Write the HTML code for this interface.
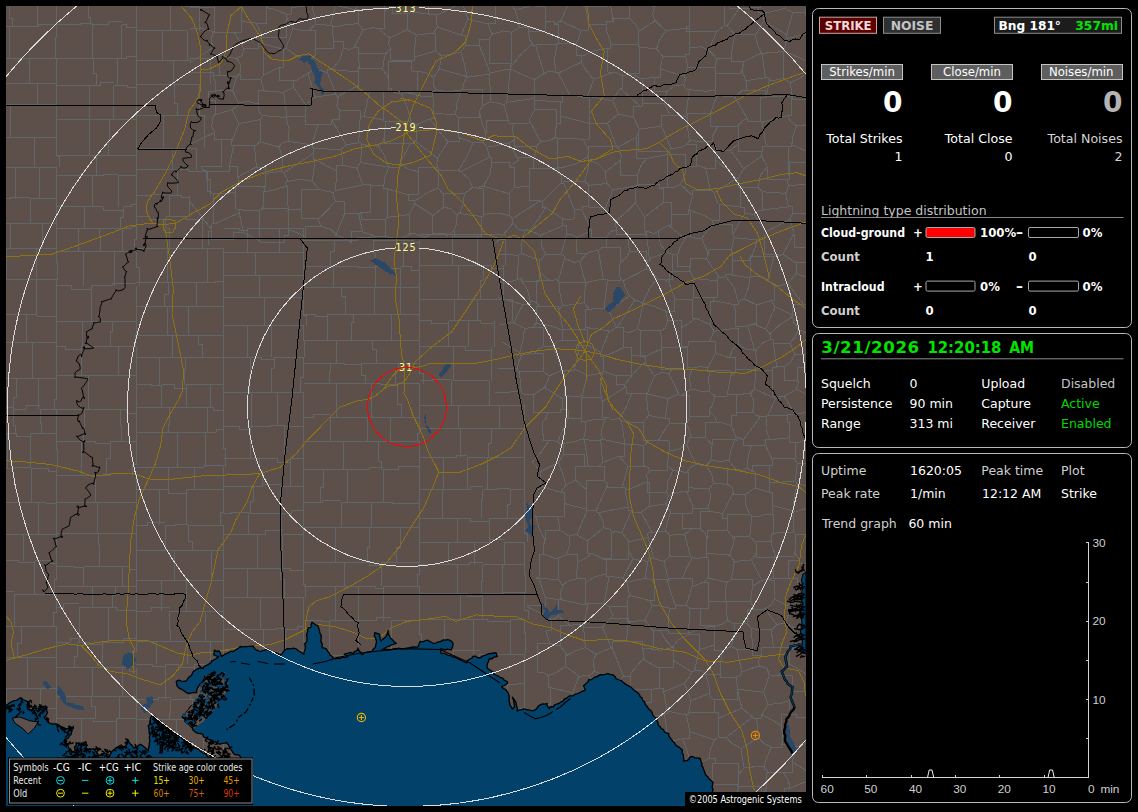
<!DOCTYPE html>
<html><head><meta charset="utf-8"><title>Lightning Detector</title>
<style>
html,body{margin:0;padding:0;background:#000;}
body{width:1138px;height:812px;position:relative;overflow:hidden;font-family:'DejaVu Sans','Liberation Sans',sans-serif;}
svg{display:block}
text{white-space:pre}
</style></head><body>
<svg width="1138" height="812" viewBox="0 0 1138 812" style="position:absolute;left:0;top:0">
<defs><clipPath id="mc"><rect x="6" y="6" width="800" height="800"/></clipPath></defs>
<rect x="6" y="6" width="800" height="800" fill="#5d504a"/>
<g clip-path="url(#mc)" fill="none" stroke-linejoin="round">
<path d="M-24.0 -23.4 H11.9 M11.9 -23.4 V4.0 M11.9 -23.4 H32.2 M32.2 -23.4 V4.0 M32.2 -23.4 H56.8 M56.8 -23.4 V-5.8 H60.0 V4.0 M-24.0 4.0 H-9.5 V0.9 H9.9 M9.9 4.0 V18.2 H12.0 V26.6 M9.9 4.0 H19.1 V0.9 H37.5 M37.5 4.0 V26.6 M37.5 4.0 H46.4 V3.8 H56.8 M56.8 4.0 V26.6 M-24.0 26.6 H9.2 M9.2 26.6 V58.1 M9.2 26.6 H38.7 V24.6 H56.8 M56.8 26.6 V37.0 H55.7 V58.1 M-24.0 58.1 H-9.7 V60.4 H-2.5 M-2.5 58.1 V83.2 M-2.5 58.1 H29.9 M29.9 58.1 V83.2 M29.9 58.1 H56.8 M56.8 58.1 V83.2 M-24.0 83.2 H-3.5 M-3.5 83.2 V95.7 H-1.9 V104.2 M-3.5 83.2 H37.0 M37.0 83.2 V104.2 M37.0 83.2 H56.8 M56.8 83.2 V104.2 M-24.0 104.2 H10.1 M10.1 104.2 V137.2 M10.1 104.2 H56.8 M56.8 104.2 V137.2 M-24.0 137.2 H4.0 M4.0 137.2 V155.2 H0.2 V167.0 M4.0 137.2 H34.0 M34.0 137.2 V167.0 M34.0 137.2 H56.8 M56.8 137.2 V156.1 H59.2 V167.0 M-24.0 167.0 H15.3 M15.3 167.0 V198.7 M15.3 167.0 H39.5 M39.5 167.0 V198.7 M39.5 167.0 H49.3 V167.5 H56.8 M56.8 167.0 V198.7 M-24.0 198.7 H0.8 M0.8 198.7 V223.8 M0.8 198.7 H10.7 V197.2 H30.4 M30.4 198.7 V223.8 M30.4 198.7 H56.8 M56.8 198.7 V223.8 M-24.0 223.8 H10.4 M10.4 223.8 V248.1 M10.4 223.8 H42.2 M42.2 223.8 V248.1 M42.2 223.8 H56.8 M56.8 223.8 V248.1 M-24.0 248.1 H6.9 M6.9 248.1 V279.7 M6.9 248.1 H36.7 M36.7 248.1 V279.7 M36.7 248.1 H56.8 M56.8 248.1 V262.3 H57.3 V279.7 M-24.0 279.7 H2.9 M2.9 279.7 V303.4 H2.3 V314.3 M2.9 279.7 H36.0 M36.0 279.7 V314.3 M36.0 279.7 H56.8 M56.8 279.7 V314.3 M-24.0 314.3 H-8.3 V317.8 H-1.0 M-1.0 314.3 V342.4 M-1.0 314.3 H15.6 V314.8 H26.9 M26.9 314.3 V342.4 M26.9 314.3 H36.5 V316.0 H56.8 M56.8 314.3 V342.4 M-24.0 342.4 H-8.6 V346.2 H1.5 M1.5 342.4 V378.2 M1.5 342.4 H32.0 M32.0 342.4 V378.2 M32.0 342.4 H56.8 M56.8 342.4 V378.2 M-24.0 378.2 H16.9 M16.9 378.2 V397.8 H13.3 V409.1 M16.9 378.2 H38.6 M38.6 378.2 V409.1 M38.6 378.2 H56.8 M56.8 378.2 V399.4 H54.2 V409.1 M-24.0 409.1 H-2.7 V407.5 H13.4 M13.4 409.1 V425.2 H15.4 V433.8 M13.4 409.1 H26.1 V405.4 H40.4 M40.4 409.1 V423.3 H41.0 V433.8 M40.4 409.1 H56.8 M56.8 409.1 V433.8 M-24.0 433.8 H7.7 M7.7 433.8 V468.2 M7.7 433.8 H16.7 V436.1 H30.8 M30.8 433.8 V468.2 M30.8 433.8 H56.8 M56.8 433.8 V449.4 H57.8 V468.2 M-24.0 468.2 H-11.6 V468.1 H0.9 M0.9 468.2 V487.8 H-0.1 V502.8 M0.9 468.2 H15.1 V467.6 H31.3 M31.3 468.2 V502.8 M31.3 468.2 H48.0 V471.8 H56.8 M56.8 468.2 V502.8 M-24.0 502.8 H5.5 M5.5 502.8 V534.9 M5.5 502.8 H38.6 M38.6 502.8 V534.9 M38.6 502.8 H46.1 V503.9 H56.8 M56.8 502.8 V534.9 M-24.0 534.9 H3.1 M3.1 534.9 V560.6 M3.1 534.9 H23.5 M23.5 534.9 V560.6 M23.5 534.9 H56.8 M56.8 534.9 V560.6 M-24.0 560.6 H-8.7 V560.5 H-0.2 M-0.2 560.6 V577.7 H-1.5 V594.0 M-0.2 560.6 H18.1 V562.6 H34.7 M34.7 560.6 V594.0 M34.7 560.6 H50.1 V563.7 H56.8 M56.8 560.6 V579.5 H54.5 V594.0 M-24.0 594.0 H-11.5 V591.7 H14.1 M14.1 594.0 V626.2 M14.1 594.0 H56.8 M56.8 594.0 V612.1 H53.5 V626.2 M-24.0 626.2 H-11.3 V622.5 H-1.3 M-1.3 626.2 V643.6 H-3.3 V657.0 M-1.3 626.2 H21.4 M21.4 626.2 V643.7 H17.9 V657.0 M21.4 626.2 H56.8 M56.8 626.2 V657.0 M-24.0 657.0 H-9.3 V660.2 H-2.3 M-2.3 657.0 V675.9 H-6.3 V688.2 M-2.3 657.0 H27.6 M27.6 657.0 V688.2 M27.6 657.0 H56.8 M56.8 657.0 V688.2 M-24.0 688.2 H6.3 M6.3 688.2 V708.5 M6.3 688.2 H40.7 M40.7 688.2 V708.5 M40.7 688.2 H56.8 M56.8 688.2 V708.5 M-24.0 708.5 H-11.1 V706.6 H3.1 M3.1 708.5 V730.3 H4.1 V741.6 M3.1 708.5 H30.6 M30.6 708.5 V741.6 M30.6 708.5 H56.8 M56.8 708.5 V741.6 M-24.0 741.6 H12.6 M12.6 741.6 V769.7 M12.6 741.6 H25.3 V742.4 H37.5 M37.5 741.6 V769.7 M37.5 741.6 H56.8 M56.8 741.6 V753.6 H60.6 V769.7 M-24.0 769.7 H16.7 M16.7 769.7 V794.2 M16.7 769.7 H38.6 V772.5 H56.8 M56.8 769.7 V778.1 H57.6 V794.2 M-24.0 794.2 H-9.8 V791.9 H10.1 M10.1 794.2 V826.9 M10.1 794.2 H19.1 V794.6 H35.2 M35.2 794.2 V826.9 M35.2 794.2 H56.8 M56.8 794.2 V826.9 M56.8 2.7 H88.9 M88.9 2.7 V17.8 H90.4 V24.6 M88.9 2.7 H121.0 V3.8 H136.3 M136.3 2.7 V24.6 M56.8 24.6 H80.1 V23.4 H92.2 M92.2 24.6 V58.6 M92.2 24.6 H108.9 V21.9 H121.7 M121.7 24.6 V58.6 M121.7 24.6 H126.6 V27.6 H136.3 M136.3 24.6 V58.6 M56.8 58.6 H93.1 M93.1 58.6 V73.8 H96.7 V85.9 M93.1 58.6 H117.8 M117.8 58.6 V73.3 H117.0 V85.9 M117.8 58.6 H126.7 V56.1 H136.3 M136.3 58.6 V85.9 M56.8 85.9 H89.5 M89.5 85.9 V119.6 M89.5 85.9 H100.3 V82.1 H113.6 M113.6 85.9 V119.6 M113.6 85.9 H127.2 V87.5 H136.3 M136.3 85.9 V119.6 M56.8 119.6 H89.6 M89.6 119.6 V155.0 M89.6 119.6 H98.6 V119.5 H109.7 M109.7 119.6 V139.3 H108.5 V155.0 M109.7 119.6 H136.3 M136.3 119.6 V155.0 M56.8 155.0 H96.3 M96.3 155.0 V175.9 M96.3 155.0 H136.3 M136.3 155.0 V175.9 M56.8 175.9 H92.3 M92.3 175.9 V206.6 M92.3 175.9 H103.9 V174.1 H118.4 M118.4 175.9 V196.6 H118.1 V206.6 M118.4 175.9 H136.3 M136.3 175.9 V206.6 M56.8 206.6 H84.6 M84.6 206.6 V228.7 M84.6 206.6 H103.0 V210.2 H123.5 M123.5 206.6 V217.1 H120.8 V228.7 M123.5 206.6 H131.4 V204.3 H136.3 M136.3 206.6 V228.7 M56.8 228.7 H78.1 M78.1 228.7 V251.9 M78.1 228.7 H99.1 M99.1 228.7 V236.7 H100.0 V251.9 M99.1 228.7 H122.0 M122.0 228.7 V251.9 M122.0 228.7 H131.0 V226.3 H136.3 M136.3 228.7 V239.6 H134.5 V251.9 M56.8 251.9 H83.0 M83.0 251.9 V285.6 M83.0 251.9 H114.0 M114.0 251.9 V285.6 M114.0 251.9 H136.3 M136.3 251.9 V267.7 H139.2 V285.6 M56.8 285.6 H71.3 V289.0 H91.4 M91.4 285.6 V321.5 M91.4 285.6 H112.5 V283.0 H136.3 M136.3 285.6 V321.5 M56.8 321.5 H82.8 M82.8 321.5 V346.6 M82.8 321.5 H112.8 M112.8 321.5 V331.6 H110.4 V346.6 M112.8 321.5 H136.3 M136.3 321.5 V334.9 H135.5 V346.6 M56.8 346.6 H65.4 V349.0 H81.2 M81.2 346.6 V375.4 M81.2 346.6 H118.0 M118.0 346.6 V375.4 M118.0 346.6 H136.3 M136.3 346.6 V375.4 M56.8 375.4 H88.3 M88.3 375.4 V409.6 M88.3 375.4 H110.0 V375.8 H136.3 M136.3 375.4 V409.6 M56.8 409.6 H84.2 M84.2 409.6 V430.6 H83.8 V441.7 M84.2 409.6 H120.5 M120.5 409.6 V425.3 H121.3 V441.7 M120.5 409.6 H126.7 V413.0 H136.3 M136.3 409.6 V441.7 M56.8 441.7 H81.0 M81.0 441.7 V475.5 M81.0 441.7 H95.3 V443.8 H110.0 M110.0 441.7 V458.9 H106.4 V475.5 M110.0 441.7 H136.3 M136.3 441.7 V464.1 H132.4 V475.5 M56.8 475.5 H95.6 M95.6 475.5 V502.2 M95.6 475.5 H110.8 V473.8 H136.3 M136.3 475.5 V502.2 M56.8 502.2 H97.2 M97.2 502.2 V533.3 M97.2 502.2 H136.3 M136.3 502.2 V533.3 M56.8 533.3 H98.3 M98.3 533.3 V544.0 H99.6 V566.5 M98.3 533.3 H136.3 M136.3 533.3 V566.5 M56.8 566.5 H74.4 V567.8 H83.9 M83.9 566.5 V586.8 M83.9 566.5 H122.5 M122.5 566.5 V586.8 M122.5 566.5 H129.9 V569.6 H136.3 M136.3 566.5 V575.9 H136.6 V586.8 M56.8 586.8 H92.1 M92.1 586.8 V607.4 M92.1 586.8 H115.4 M115.4 586.8 V595.4 H112.8 V607.4 M115.4 586.8 H136.3 M136.3 586.8 V607.4 M56.8 607.4 H63.6 V603.8 H79.2 M79.2 607.4 V642.3 M79.2 607.4 H108.2 M108.2 607.4 V642.3 M108.2 607.4 H116.9 V610.0 H136.3 M136.3 607.4 V642.3 M56.8 642.3 H70.0 V638.9 H77.6 M77.6 642.3 V656.2 H74.0 V667.8 M77.6 642.3 H89.1 V644.6 H102.2 M102.2 642.3 V667.8 M102.2 642.3 H123.8 V638.8 H136.3 M136.3 642.3 V651.5 H132.9 V667.8 M56.8 667.8 H92.0 M92.0 667.8 V696.2 M92.0 667.8 H122.9 M122.9 667.8 V696.2 M122.9 667.8 H129.3 V671.8 H136.3 M136.3 667.8 V696.2 M56.8 696.2 H91.7 M91.7 696.2 V706.6 H95.2 V718.9 M91.7 696.2 H119.3 M119.3 696.2 V718.9 M119.3 696.2 H136.3 M136.3 696.2 V708.7 H136.2 V718.9 M56.8 718.9 H81.3 M81.3 718.9 V752.3 M81.3 718.9 H93.4 V721.9 H116.4 M116.4 718.9 V752.3 M116.4 718.9 H136.3 M136.3 718.9 V752.3 M56.8 752.3 H85.4 M85.4 752.3 V777.9 M85.4 752.3 H115.6 M115.6 752.3 V777.9 M115.6 752.3 H136.3 M136.3 752.3 V777.9 M56.8 777.9 H95.2 M95.2 777.9 V803.6 M95.2 777.9 H136.3 M136.3 777.9 V803.6 M56.8 803.6 H78.8 V802.7 H92.1 M92.1 803.6 V819.7 H90.8 V832.9 M92.1 803.6 H109.1 V801.0 H122.0 M122.0 803.6 V832.9 M122.0 803.6 H136.3 M136.3 803.6 V832.9 M136.3 2.5 H159.5 V1.8 H170.4 M170.4 2.5 V30.9 M170.4 2.5 H185.0 V6.2 H199.6 M199.6 2.5 V30.9 M136.3 30.9 H154.1 V30.8 H162.5 M162.5 30.9 V60.4 M162.5 30.9 H187.2 M187.2 30.9 V60.4 M136.3 60.4 H173.4 M173.4 60.4 V84.4 M173.4 60.4 H190.1 V58.1 H210.0 M210.0 60.4 V84.4 M136.3 84.4 H174.4 M174.4 84.4 V103.0 H177.5 V115.1 M174.4 84.4 H199.1 M199.1 84.4 V115.1 M136.3 115.1 H163.8 M163.8 115.1 V148.0 M163.8 115.1 H204.3 M204.3 115.1 V148.0 M136.3 148.0 H149.5 V148.2 H172.3 M172.3 148.0 V169.8 M172.3 148.0 H196.9 M196.9 148.0 V169.8 M136.3 169.8 H177.5 M177.5 169.8 V195.5 M177.5 169.8 H188.3 V171.1 H206.6 M206.6 169.8 V179.7 H210.3 V195.5 M136.3 195.5 H150.6 V194.4 H169.4 M169.4 195.5 V216.8 M169.4 195.5 H181.5 V197.6 H189.4 M189.4 195.5 V216.8 M136.3 216.8 H149.8 V219.3 H165.8 M165.8 216.8 V228.1 H169.5 V248.9 M165.8 216.8 H186.1 V219.7 H202.7 M202.7 216.8 V248.9 M136.3 248.9 H167.2 M167.2 248.9 V282.4 M167.2 248.9 H207.6 M207.6 248.9 V282.4 M207.6 248.9 H223.9 M223.9 248.9 V282.4 M136.3 282.4 H168.2 M168.2 282.4 V294.4 H164.6 V306.7 M168.2 282.4 H196.6 M196.6 282.4 V306.7 M196.6 282.4 H215.5 V281.7 H223.9 M223.9 282.4 V306.7 M136.3 306.7 H167.7 M167.7 306.7 V335.2 M167.7 306.7 H188.9 M188.9 306.7 V335.2 M188.9 306.7 H206.5 V306.9 H223.9 M223.9 306.7 V335.2 M136.3 335.2 H172.2 M172.2 335.2 V357.2 M172.2 335.2 H198.6 M198.6 335.2 V344.0 H202.1 V357.2 M198.6 335.2 H223.9 M223.9 335.2 V357.2 M136.3 357.2 H159.3 M159.3 357.2 V384.5 M159.3 357.2 H185.5 M185.5 357.2 V369.1 H184.4 V384.5 M185.5 357.2 H223.9 M223.9 357.2 V384.5 M136.3 384.5 H151.3 V385.9 H161.5 M161.5 384.5 V407.2 M161.5 384.5 H174.7 V388.4 H186.2 M186.2 384.5 V407.2 M186.2 384.5 H210.7 M210.7 384.5 V395.3 H210.6 V407.2 M210.7 384.5 H223.9 M223.9 384.5 V407.2 M136.3 407.2 H169.6 M169.6 407.2 V424.4 H168.9 V432.1 M169.6 407.2 H207.8 M207.8 407.2 V432.1 M207.8 407.2 H213.4 V410.1 H223.9 M223.9 407.2 V432.1 M136.3 432.1 H177.2 M177.2 432.1 V467.0 M177.2 432.1 H205.7 M205.7 432.1 V467.0 M205.7 432.1 H216.1 V429.1 H223.9 M223.9 432.1 V448.7 H225.5 V467.0 M136.3 467.0 H168.6 M168.6 467.0 V489.1 M168.6 467.0 H194.1 M194.1 467.0 V489.1 M194.1 467.0 H204.1 V465.7 H223.9 M223.9 467.0 V489.1 M136.3 489.1 H159.0 M159.0 489.1 V525.0 M159.0 489.1 H168.4 V493.0 H186.2 M186.2 489.1 V525.0 M186.2 489.1 H223.9 M223.9 489.1 V512.6 H220.2 V525.0 M136.3 525.0 H147.6 V522.8 H165.3 M165.3 525.0 V550.2 M165.3 525.0 H175.9 V524.2 H188.2 M188.2 525.0 V541.1 H192.2 V550.2 M188.2 525.0 H223.9 M223.9 525.0 V550.2 M136.3 550.2 H174.8 M174.8 550.2 V580.9 M174.8 550.2 H211.9 M211.9 550.2 V580.9 M211.9 550.2 H215.9 V550.3 H223.9 M223.9 550.2 V580.9 M136.3 580.9 H161.0 M161.0 580.9 V611.1 M161.0 580.9 H186.2 M186.2 580.9 V611.1 M186.2 580.9 H223.9 M223.9 580.9 V611.1 M136.3 611.1 H151.0 V607.3 H169.1 M169.1 611.1 V630.6 H170.4 V641.4 M169.1 611.1 H205.4 M205.4 611.1 V641.4 M205.4 611.1 H223.9 M223.9 611.1 V641.4 M136.3 641.4 H156.7 M156.7 641.4 V664.3 M156.7 641.4 H187.9 M187.9 641.4 V664.3 M187.9 641.4 H210.1 M210.1 641.4 V664.3 M210.1 641.4 H223.9 M223.9 641.4 V664.3 M136.3 664.3 H152.1 V666.1 H165.4 M165.4 664.3 V699.5 M165.4 664.3 H178.3 V667.7 H194.0 M194.0 664.3 V683.2 H190.8 V699.5 M194.0 664.3 H223.9 M223.9 664.3 V699.5 M136.3 699.5 H158.2 V697.8 H170.5 M170.5 699.5 V713.2 H169.8 V719.6 M170.5 699.5 H192.4 M192.4 699.5 V708.2 H190.2 V719.6 M192.4 699.5 H223.9 M223.9 699.5 V719.6 M136.3 719.6 H176.4 M176.4 719.6 V731.3 H177.4 V754.3 M176.4 719.6 H190.8 V723.2 H203.9 M203.9 719.6 V754.3 M203.9 719.6 H223.9 M223.9 719.6 V754.3 M136.3 754.3 H167.3 M167.3 754.3 V770.1 H168.1 V788.0 M167.3 754.3 H193.9 M193.9 754.3 V788.0 M193.9 754.3 H223.9 M223.9 754.3 V788.0 M136.3 788.0 H143.9 V790.9 H157.9 M157.9 788.0 V796.6 H156.8 V814.3 M157.9 788.0 H166.6 V787.4 H182.4 M182.4 788.0 V814.3 M182.4 788.0 H223.9 M223.9 788.0 V800.7 H221.9 V814.3 M136.3 814.3 H148.5 V814.3 H163.4 M163.4 814.3 V840.7 M163.4 814.3 H189.0 V811.8 H200.9 M200.9 814.3 V840.7 M200.9 814.3 H216.8 V810.9 H223.9 M223.9 814.3 V840.7 M223.9 228.1 H239.1 V230.4 H247.5 M247.5 228.1 V252.8 M247.5 228.1 H279.7 M279.7 228.1 V252.8 M279.7 228.1 H303.9 M303.9 228.1 V252.8 M223.9 252.8 H234.7 V252.5 H255.5 M255.5 252.8 V275.0 M255.5 252.8 H303.9 M303.9 252.8 V275.0 M223.9 275.0 H259.2 M259.2 275.0 V297.0 M259.2 275.0 H303.9 M303.9 275.0 V297.0 M223.9 297.0 H264.1 M264.1 297.0 V325.7 M264.1 297.0 H303.9 M303.9 297.0 V315.3 H306.0 V325.7 M223.9 325.7 H247.5 M247.5 325.7 V357.2 M247.5 325.7 H271.4 M271.4 325.7 V357.2 M271.4 325.7 H303.9 M303.9 325.7 V340.5 H304.7 V357.2 M223.9 357.2 H250.3 M250.3 357.2 V376.7 H249.8 V392.4 M250.3 357.2 H261.5 V359.1 H274.2 M274.2 357.2 V368.0 H271.4 V392.4 M274.2 357.2 H303.9 M303.9 357.2 V377.9 H300.6 V392.4 M223.9 392.4 H251.2 M251.2 392.4 V426.3 M251.2 392.4 H277.3 M277.3 392.4 V426.3 M277.3 392.4 H303.9 M303.9 392.4 V426.3 M223.9 426.3 H239.6 V429.5 H250.1 M250.1 426.3 V458.8 M250.1 426.3 H270.3 V425.1 H284.7 M284.7 426.3 V458.8 M284.7 426.3 H303.9 M303.9 426.3 V458.8 M223.9 458.8 H259.1 M259.1 458.8 V470.5 H262.6 V486.4 M259.1 458.8 H277.2 V462.5 H290.5 M290.5 458.8 V486.4 M290.5 458.8 H303.9 M303.9 458.8 V486.4 M223.9 486.4 H253.5 M253.5 486.4 V501.7 H250.7 V513.5 M253.5 486.4 H262.6 V484.1 H280.7 M280.7 486.4 V513.5 M280.7 486.4 H303.9 M303.9 486.4 V513.5 M223.9 513.5 H231.7 V512.7 H248.8 M248.8 513.5 V534.4 M248.8 513.5 H281.2 M281.2 513.5 V534.4 M281.2 513.5 H291.4 V510.5 H303.9 M303.9 513.5 V534.4 M223.9 534.4 H257.5 M257.5 534.4 V568.5 M257.5 534.4 H265.4 V530.6 H282.9 M282.9 534.4 V568.5 M282.9 534.4 H303.9 M303.9 534.4 V568.5 M223.9 568.5 H247.0 M247.0 568.5 V597.8 M247.0 568.5 H280.6 M280.6 568.5 V579.4 H284.1 V597.8 M280.6 568.5 H290.5 V570.9 H303.9 M303.9 568.5 V584.6 H305.9 V597.8 M223.9 597.8 H260.5 M260.5 597.8 V629.7 M260.5 597.8 H303.9 M303.9 597.8 V629.7 M223.9 629.7 H263.4 M263.4 629.7 V650.3 M263.4 629.7 H275.4 V628.5 H285.0 M285.0 629.7 V650.3 M285.0 629.7 H297.2 V626.1 H303.9 M303.9 629.7 V641.7 H306.4 V650.3 M223.9 650.3 H239.1 V647.9 H248.8 M248.8 650.3 V675.8 M248.8 650.3 H267.6 V652.6 H283.2 M283.2 650.3 V675.8 M283.2 650.3 H303.9 M303.9 650.3 V658.8 H301.4 V675.8 M223.9 675.8 H239.4 V679.1 H255.1 M255.1 675.8 V687.1 H251.7 V709.8 M255.1 675.8 H287.4 M287.4 675.8 V709.8 M287.4 675.8 H303.9 M303.9 675.8 V709.8 M223.9 709.8 H261.8 M261.8 709.8 V741.8 M261.8 709.8 H303.9 M303.9 709.8 V741.8 M223.9 741.8 H242.5 V738.8 H253.7 M253.7 741.8 V765.2 M253.7 741.8 H287.6 M287.6 741.8 V765.2 M287.6 741.8 H298.2 V742.0 H303.9 M303.9 741.8 V765.2 M223.9 765.2 H252.9 M252.9 765.2 V786.8 H252.4 V800.6 M252.9 765.2 H261.7 V763.9 H276.5 M276.5 765.2 V781.3 H273.2 V800.6 M276.5 765.2 H303.9 M303.9 765.2 V779.5 H300.1 V800.6 M223.9 800.6 H247.1 V797.1 H262.8 M262.8 800.6 V816.3 H266.1 V834.6 M262.8 800.6 H290.2 V803.1 H303.9 M303.9 800.6 V834.6 M303.9 240.0 H334.6 M334.6 240.0 V251.5 H330.8 V266.6 M334.6 240.0 H357.7 V237.3 H373.9 M373.9 240.0 V253.0 H375.5 V266.6 M373.9 240.0 H403.5 M403.5 240.0 V266.6 M403.5 240.0 H413.7 V242.5 H419.9 M419.9 240.0 V266.6 M303.9 266.6 H333.6 M333.6 266.6 V287.4 M333.6 266.6 H358.5 V267.7 H375.0 M375.0 266.6 V287.4 M375.0 266.6 H386.1 V268.6 H400.7 M400.7 266.6 V287.4 M400.7 266.6 H411.6 V270.3 H419.9 M419.9 266.6 V287.4 M303.9 287.4 H341.4 M341.4 287.4 V296.7 H345.1 V314.4 M341.4 287.4 H374.1 M374.1 287.4 V314.4 M374.1 287.4 H400.8 M400.8 287.4 V314.4 M400.8 287.4 H419.9 M419.9 287.4 V314.4 M303.9 314.4 H315.2 V316.2 H327.2 M327.2 314.4 V340.2 M327.2 314.4 H353.4 M353.4 314.4 V322.9 H351.6 V340.2 M353.4 314.4 H391.9 M391.9 314.4 V340.2 M391.9 314.4 H419.9 M419.9 314.4 V340.2 M303.9 340.2 H336.3 M336.3 340.2 V363.0 M336.3 340.2 H372.6 M372.6 340.2 V349.9 H376.2 V363.0 M372.6 340.2 H419.9 M419.9 340.2 V363.0 M303.9 363.0 H330.2 M330.2 363.0 V371.9 H329.4 V383.7 M330.2 363.0 H344.2 V364.7 H361.7 M361.7 363.0 V375.6 H365.5 V383.7 M361.7 363.0 H398.1 M398.1 363.0 V369.6 H395.3 V383.7 M398.1 363.0 H419.9 M419.9 363.0 V373.2 H423.6 V383.7 M303.9 383.7 H336.6 M336.6 383.7 V417.1 M336.6 383.7 H371.2 M371.2 383.7 V417.1 M371.2 383.7 H380.7 V384.3 H397.1 M397.1 383.7 V404.0 H401.1 V417.1 M397.1 383.7 H419.9 M419.9 383.7 V417.1 M303.9 417.1 H313.7 V414.8 H330.3 M330.3 417.1 V441.6 M330.3 417.1 H367.1 M367.1 417.1 V441.6 M367.1 417.1 H390.9 M390.9 417.1 V441.6 M390.9 417.1 H419.9 M419.9 417.1 V433.9 H417.1 V441.6 M303.9 441.6 H343.4 M343.4 441.6 V469.5 M343.4 441.6 H378.9 M378.9 441.6 V461.1 H381.1 V469.5 M378.9 441.6 H419.9 M419.9 441.6 V469.5 M303.9 469.5 H323.9 M323.9 469.5 V487.7 H320.5 V502.3 M323.9 469.5 H347.0 M347.0 469.5 V502.3 M347.0 469.5 H369.2 V467.7 H383.0 M383.0 469.5 V502.3 M383.0 469.5 H398.9 V466.8 H419.9 M419.9 469.5 V502.3 M303.9 502.3 H322.7 V500.4 H341.1 M341.1 502.3 V527.1 M341.1 502.3 H359.8 V502.0 H371.0 M371.0 502.3 V527.1 M371.0 502.3 H392.9 V503.4 H419.9 M419.9 502.3 V527.1 M303.9 527.1 H335.1 M335.1 527.1 V562.3 M335.1 527.1 H369.0 M369.0 527.1 V547.7 H367.0 V562.3 M369.0 527.1 H400.5 M400.5 527.1 V547.1 H396.9 V562.3 M400.5 527.1 H419.9 M419.9 527.1 V562.3 M303.9 562.3 H344.4 M344.4 562.3 V586.2 M344.4 562.3 H369.7 V565.2 H381.6 M381.6 562.3 V586.2 M381.6 562.3 H419.9 M419.9 562.3 V574.7 H417.2 V586.2 M303.9 586.2 H335.4 M335.4 586.2 V620.5 M335.4 586.2 H358.0 M358.0 586.2 V620.5 M358.0 586.2 H375.8 V588.7 H383.9 M383.9 586.2 V620.5 M383.9 586.2 H419.9 M419.9 586.2 V620.5 M303.9 620.5 H321.1 V621.2 H329.9 M329.9 620.5 V655.8 M329.9 620.5 H358.6 M358.6 620.5 V655.8 M358.6 620.5 H376.2 V617.6 H391.4 M391.4 620.5 V655.8 M391.4 620.5 H419.9 M419.9 620.5 V634.4 H421.6 V655.8 M303.9 655.8 H333.9 M333.9 655.8 V676.4 M333.9 655.8 H362.9 M362.9 655.8 V676.4 M362.9 655.8 H394.5 M394.5 655.8 V676.4 M394.5 655.8 H405.8 V658.0 H419.9 M419.9 655.8 V676.4 M303.9 676.4 H331.0 V673.1 H343.9 M343.9 676.4 V706.0 M343.9 676.4 H381.4 M381.4 676.4 V689.4 H383.5 V706.0 M381.4 676.4 H419.9 M419.9 676.4 V706.0 M303.9 706.0 H315.4 V707.8 H337.0 M337.0 706.0 V738.3 M337.0 706.0 H378.6 M378.6 706.0 V738.3 M378.6 706.0 H407.1 M407.1 706.0 V719.2 H410.3 V738.3 M407.1 706.0 H414.7 V705.1 H419.9 M419.9 706.0 V738.3 M303.9 738.3 H318.4 V739.0 H328.9 M328.9 738.3 V764.8 M328.9 738.3 H362.0 M362.0 738.3 V764.8 M362.0 738.3 H401.2 M401.2 738.3 V764.8 M401.2 738.3 H419.9 M419.9 738.3 V754.4 H422.3 V764.8 M303.9 764.8 H317.7 V763.1 H327.4 M327.4 764.8 V791.7 M327.4 764.8 H359.2 M359.2 764.8 V791.7 M359.2 764.8 H376.7 V761.3 H391.7 M391.7 764.8 V779.1 H392.3 V791.7 M391.7 764.8 H419.9 M419.9 764.8 V791.7 M303.9 791.7 H345.4 M345.4 791.7 V817.0 M345.4 791.7 H376.8 M376.8 791.7 V800.3 H375.8 V817.0 M376.8 791.7 H419.9 M419.9 791.7 V817.0 M303.9 817.0 H332.7 M332.7 817.0 V846.4 M332.7 817.0 H341.6 V813.5 H357.7 M357.7 817.0 V846.4 M357.7 817.0 H370.1 V816.1 H387.4 M387.4 817.0 V835.3 H384.1 V846.4 M387.4 817.0 H419.9 M419.9 817.0 V836.9 H418.7 V846.4 M419.9 234.5 H452.3 M452.3 234.5 V265.4 M452.3 234.5 H477.2 M477.2 234.5 V265.4 M477.2 234.5 H505.0 M505.0 234.5 V265.4 M419.9 265.4 H458.6 M458.6 265.4 V299.1 M458.6 265.4 H483.0 M483.0 265.4 V280.1 H480.8 V299.1 M483.0 265.4 H491.3 V268.9 H503.1 M503.1 265.4 V299.1 M419.9 299.1 H454.9 M454.9 299.1 V320.7 M454.9 299.1 H477.2 M477.2 299.1 V320.7 M477.2 299.1 H512.4 M512.4 299.1 V320.7 M419.9 320.7 H431.9 V323.9 H448.7 M448.7 320.7 V346.9 M448.7 320.7 H468.9 M468.9 320.7 V346.9 M468.9 320.7 H480.8 V323.0 H494.0 M494.0 320.7 V346.9 M419.9 346.9 H453.7 M453.7 346.9 V380.8 M453.7 346.9 H465.9 V350.5 H491.0 M491.0 346.9 V380.8 M419.9 380.8 H432.5 V379.6 H451.2 M451.2 380.8 V405.6 M451.2 380.8 H489.4 M489.4 380.8 V405.6 M419.9 405.6 H458.5 M458.5 405.6 V428.1 M458.5 405.6 H499.9 M499.9 405.6 V428.1 M499.9 405.6 H524.5 M524.5 405.6 V428.1 M419.9 428.1 H460.6 M460.6 428.1 V457.2 M460.6 428.1 H491.1 M491.1 428.1 V443.6 H488.3 V457.2 M491.1 428.1 H524.5 M524.5 428.1 V457.2 M419.9 457.2 H443.1 M443.1 457.2 V489.9 M443.1 457.2 H456.6 V455.9 H467.0 M467.0 457.2 V489.9 M467.0 457.2 H487.1 M487.1 457.2 V489.9 M487.1 457.2 H524.5 M524.5 457.2 V489.9 M419.9 489.9 H442.1 M442.1 489.9 V518.2 M442.1 489.9 H470.0 V486.7 H482.8 M482.8 489.9 V499.3 H481.5 V518.2 M482.8 489.9 H497.2 V488.5 H510.1 M510.1 489.9 V504.5 H507.1 V518.2 M510.1 489.9 H524.5 M524.5 489.9 V518.2 M419.9 518.2 H457.8 M457.8 518.2 V542.0 M457.8 518.2 H470.6 V521.5 H489.6 M489.6 518.2 V542.0 M489.6 518.2 H524.5 M524.5 518.2 V533.1 H527.7 V542.0 M419.9 542.0 H448.9 M448.9 542.0 V564.8 M448.9 542.0 H474.6 M474.6 542.0 V564.8 M474.6 542.0 H489.1 V539.1 H504.5 M504.5 542.0 V564.8 M504.5 542.0 H512.5 V542.7 H524.5 M524.5 542.0 V564.8 M419.9 564.8 H457.8 M457.8 564.8 V593.3 M457.8 564.8 H469.7 V562.3 H482.5 M482.5 564.8 V581.9 H481.6 V593.3 M482.5 564.8 H502.9 M502.9 564.8 V593.3 M502.9 564.8 H524.5 M524.5 564.8 V574.8 H525.5 V593.3 M419.9 593.3 H460.4 M460.4 593.3 V619.0 M460.4 593.3 H467.6 V596.2 H482.4 M482.4 593.3 V619.0 M482.4 593.3 H503.4 V592.2 H524.5 M524.5 593.3 V610.9 H528.5 V619.0 M419.9 619.0 H444.7 M444.7 619.0 V654.0 M444.7 619.0 H473.9 M473.9 619.0 V654.0 M473.9 619.0 H487.8 V621.0 H510.4 M510.4 619.0 V654.0 M510.4 619.0 H524.5 M524.5 619.0 V632.9 H525.8 V654.0 M419.9 654.0 H440.6 M440.6 654.0 V684.5 M440.6 654.0 H453.6 V650.5 H479.9 M479.9 654.0 V684.5 M479.9 654.0 H524.5 M524.5 654.0 V684.5 M419.9 684.5 H431.6 V682.0 H453.5 M453.5 684.5 V708.6 M453.5 684.5 H462.5 V685.2 H473.5 M473.5 684.5 V708.6 M473.5 684.5 H507.3 M507.3 684.5 V708.6 M507.3 684.5 H517.0 V683.9 H524.5 M524.5 684.5 V708.6 M419.9 708.6 H434.6 V711.8 H452.1 M452.1 708.6 V739.8 M452.1 708.6 H488.0 M488.0 708.6 V739.8 M488.0 708.6 H524.5 M524.5 708.6 V739.8 M419.9 739.8 H459.2 M459.2 739.8 V771.5 M459.2 739.8 H489.7 M489.7 739.8 V754.4 H489.1 V771.5 M489.7 739.8 H524.5 M524.5 739.8 V771.5 M419.9 771.5 H456.4 M456.4 771.5 V796.7 M456.4 771.5 H481.7 M481.7 771.5 V796.7 M481.7 771.5 H524.5 M524.5 771.5 V796.7 M419.9 796.7 H452.5 M452.5 796.7 V825.6 M452.5 796.7 H474.1 V798.8 H488.5 M488.5 796.7 V825.6 M488.5 796.7 H510.4 M510.4 796.7 V825.6 M510.4 796.7 H524.5 M524.5 796.7 V825.6 M776.2 -122.1 V-18.2 H786.5 M786.5 -18.2 L795.3 -14.9 L805.6 -11.3 M805.6 -11.3 L808.9 -8.0 L809.2 -6.7 M844.0 17.7 L809.8 4.3 M809.2 -6.7 L809.8 4.3 M844.0 17.7 H813.0 V35.2 M809.8 4.3 V9.3 H805.4 M805.4 9.3 L806.6 21.8 L809.7 33.4 M813.0 35.2 L809.7 33.4 M766.8 -88.4 L764.6 -49.5 L757.6 -13.1 M766.8 -88.4 L750.5 -51.9 L734.6 -19.0 M734.6 -19.0 L757.6 -13.1 M776.2 -122.1 L766.8 -88.4 M786.5 -18.2 V-16.0 H784.3 M757.6 -13.1 L760.9 -8.5 M760.9 -8.5 L774.0 -14.5 L784.3 -16.0 M792.7 12.2 H805.4 V9.3 M792.7 12.2 L787.5 10.2 L785.0 8.3 M785.0 8.3 L786.5 -2.5 L784.3 -16.0 M304.9 -20.4 V4.0 H313.9 M304.9 -20.4 V-22.2 H308.1 M308.1 -22.2 L333.3 -14.6 M333.3 -14.6 L331.0 -0.5 M313.9 4.0 V-0.5 H331.0 M760.9 -8.5 V7.4 H758.6 M785.0 8.3 L763.1 13.6 M763.1 13.6 L758.8 12.7 L758.6 7.4 M304.9 -20.4 L298.3 -19.5 L290.9 -19.3 M337.4 -106.0 V-22.2 H308.1 M290.9 -19.3 L289.6 -20.0 L288.2 -21.3 M673.1 -904.4 L646.8 -498.3 L616.7 -90.8 M524.1 -213.9 L545.6 -119.4 L565.6 -24.4 M616.7 -90.8 L579.4 -21.7 M565.6 -24.4 V-21.7 H579.4 M616.7 -90.8 H618.2 V-70.7 M618.2 -70.7 H609.8 V-18.6 M609.8 -18.6 H582.6 V-18.5 M579.4 -21.7 L579.6 -18.3 L582.6 -18.5 M453.2 -56.1 H390.3 V-1019.7 M453.2 -56.1 L443.1 -19.4 M390.3 -1019.7 L393.3 -561.2 L399.9 -97.8 M443.1 -19.4 L433.6 -15.5 L428.8 -15.7 M428.8 -15.7 L422.7 -15.9 L419.3 -18.7 M419.3 -18.7 L399.9 -97.8 M337.4 -106.0 L337.4 -81.3 L341.9 -59.9 M333.3 -14.6 V-18.7 H337.2 M337.2 -18.7 L339.5 -41.0 L341.9 -59.9 M673.1 -904.4 H685.8 V-238.3 M642.2 -19.7 L618.2 -70.7 M642.2 -19.7 V-23.3 H657.9 M685.8 -238.3 L657.9 -23.3 M734.6 -19.0 L732.4 -20.6 L732.4 -18.2 M732.4 -18.2 L727.6 -22.2 L722.1 -24.3 M722.1 -24.3 L693.6 -129.6 M685.8 -238.3 L693.6 -129.6 M732.4 -18.2 H729.5 V-4.9 M758.6 7.4 L738.8 8.9 M729.5 -4.9 V8.9 H738.8 M792.7 12.2 L786.8 34.8 M763.1 13.6 L763.6 21.0 M763.6 21.0 L786.8 34.8 M818.2 51.7 L805.6 60.6 M818.2 51.7 V35.2 H813.0 M809.7 33.4 L788.5 38.2 M805.6 60.6 L784.8 51.1 M784.8 51.1 L785.2 43.9 L788.5 38.2 M786.8 34.8 V38.2 H788.5 M818.2 51.7 V68.7 H869.8 M313.9 4.0 H312.0 V5.9 M290.9 -19.3 H291.0 V7.8 M312.0 5.9 L303.5 6.1 L291.0 7.8 M453.2 -56.1 L472.3 -22.8 M443.1 -19.4 L457.7 -9.4 M457.7 -9.4 V-22.8 H472.3 M369.2 -15.6 H364.5 V-10.3 M369.2 -15.6 L381.5 -20.6 M381.5 -20.6 L387.8 -17.5 L393.2 -11.1 M364.1 -3.1 H384.3 V12.6 M364.1 -3.1 L361.9 -4.4 L364.5 -10.3 M393.2 -11.1 V6.3 H392.5 M384.3 12.6 L386.3 9.4 L392.5 6.3 M337.2 -18.7 L352.4 -12.9 L364.5 -10.3 M341.9 -59.9 L355.7 -35.7 L369.2 -15.6 M399.9 -97.8 L381.5 -20.6 M419.3 -18.7 V-16.4 H416.5 M416.5 -16.4 H393.2 V-11.1 M344.9 213.5 H358.8 V214.2 M344.9 213.5 V201.2 H335.5 M335.4 190.7 L362.7 184.9 M335.4 190.7 L333.7 192.5 M335.5 201.2 L333.2 195.2 L333.7 192.5 M361.9 212.0 L358.8 214.2 M361.9 212.0 H370.3 V188.2 M362.7 184.9 H370.3 V188.2 M335.5 201.2 L325.3 212.4 L318.3 218.6 M333.7 192.5 L319.4 189.7 M319.4 189.7 H301.7 V209.3 M301.7 209.3 V218.6 H318.3 M642.3 103.8 L642.5 78.8 M642.3 103.8 V103.5 H664.0 M664.0 103.5 L666.8 91.6 M666.8 91.6 H654.3 V77.4 M654.3 77.4 L642.5 78.8 M683.7 84.7 L685.5 79.4 L684.0 76.3 M683.7 84.7 L674.6 85.7 L666.8 91.6 M684.0 76.3 L660.2 68.8 M660.2 68.8 V77.4 H654.3 M640.1 106.0 L620.1 88.5 M640.1 106.0 H633.8 V117.7 M633.8 117.7 L618.4 114.0 M618.4 114.0 L612.8 100.6 M612.8 100.6 L620.1 88.5 M622.3 76.0 V88.5 H620.1 M622.3 76.0 L632.5 73.5 M632.5 73.5 L635.7 76.3 L642.5 78.8 M642.3 103.8 V106.0 H640.1 M642.2 -19.7 L641.7 -13.8 L636.5 -9.3 M609.8 -18.6 L610.8 -16.5 M636.5 -9.3 L625.8 -13.9 L610.8 -16.5 M654.6 6.8 L652.7 14.3 L655.2 20.9 M654.6 6.8 L639.3 0.8 M655.2 20.9 L638.8 31.3 M639.3 0.8 L636.0 4.2 M636.0 4.2 H629.9 V18.9 M638.8 31.3 L636.7 25.9 L629.9 18.9 M660.0 3.9 L654.6 6.8 M660.0 3.9 L661.5 -20.3 M657.9 -23.3 L661.5 -20.3 M636.5 -9.3 V0.8 H639.3 M510.5 68.9 H510.8 V68.7 M510.5 68.9 L506.7 102.3 M534.0 98.4 L506.7 102.3 M534.0 98.4 L534.8 88.8 L534.3 79.7 M510.8 68.7 L522.5 74.8 L534.3 79.7 M585.8 97.8 H589.3 V123.0 M585.8 97.8 L587.7 96.2 M587.7 96.2 L612.8 100.6 M618.4 114.0 L607.4 122.9 M607.4 122.9 L599.1 124.0 L589.3 123.0 M562.9 102.1 V95.7 H570.0 M562.9 102.1 L535.0 100.3 M570.0 95.7 L558.3 73.1 M535.0 100.3 L534.7 101.8 L534.0 98.4 M544.0 73.8 L534.3 79.7 M544.0 73.8 L548.1 71.6 L555.6 72.1 M555.6 72.1 L558.3 73.1 M639.4 46.9 L656.6 49.0 M639.4 46.9 L637.1 44.0 M637.1 44.0 H638.8 V31.3 M655.2 20.9 L665.7 30.7 M665.7 30.7 L658.7 41.5 L656.6 49.0 M632.5 73.5 H639.4 V46.9 M660.2 68.8 L662.7 56.2 M656.6 49.0 L662.7 56.2 M722.1 -24.3 L716.9 -21.9 M729.5 -4.9 L705.7 3.4 M716.9 -21.9 L705.7 3.4 M693.6 -129.6 V-21.9 H689.1 M716.9 -21.9 L703.5 -19.5 L689.1 -21.9 M661.5 -20.3 L687.7 -18.3 M689.1 -21.9 L689.3 -20.9 L687.7 -18.3 M684.0 76.3 L687.8 67.5 M662.7 56.2 H685.4 V54.4 M687.8 67.5 L685.4 54.4 M685.3 28.3 L665.7 30.7 M685.3 28.3 H689.5 V47.8 M689.5 47.8 V54.4 H685.4 M715.2 73.9 L716.4 58.3 M715.2 73.9 V67.5 H687.8 M689.5 47.8 L700.8 46.7 L708.7 50.0 M708.7 50.0 L713.1 54.7 L716.4 58.3 M744.0 61.4 H731.7 V51.9 M744.0 61.4 L761.3 53.1 M761.3 53.1 L757.7 45.0 L755.1 35.7 M755.1 35.7 V34.4 H734.8 M734.8 34.4 L731.7 51.9 M738.8 8.9 L727.1 26.0 M763.6 21.0 L755.1 35.7 M727.1 26.0 L734.8 34.4 M715.2 73.9 L715.2 73.9 M716.4 58.3 H731.7 V51.9 M744.0 61.4 L741.9 70.1 M741.9 70.1 V73.9 H715.2 M814.0 185.6 L814.4 200.8 L813.3 212.9 M814.0 185.6 V176.7 H849.0 M849.0 176.7 H896.8 V185.6 M896.8 185.6 H879.4 V194.2 M879.4 194.2 L814.1 213.2 M814.1 213.2 H813.3 V212.9 M979.0 815.2 H848.5 V810.0 M979.0 815.2 H837.8 V841.8 M848.5 810.0 L841.2 820.9 L832.5 830.1 M837.8 841.8 L832.5 830.1 M837.9 799.8 L813.7 809.2 M837.9 799.8 L848.5 810.0 M814.8 824.0 L823.1 826.4 L832.5 830.1 M814.8 824.0 L811.4 812.5 M811.4 812.5 L812.4 812.8 L813.7 809.2 M812.4 947.8 V884.8 H801.6 M812.4 947.8 H837.8 V841.8 M806.3 835.1 L801.6 884.8 M806.3 835.1 L814.8 824.0 M837.9 799.8 L835.9 794.2 L836.9 792.0 M813.7 809.2 H813.5 V782.4 M813.5 782.4 L829.2 782.0 M836.9 792.0 L829.2 782.0 M1121.1 752.0 H875.3 V767.8 M836.9 792.0 H875.3 V767.8 M285.9 48.4 L292.9 28.6 M285.9 48.4 L297.2 56.2 L310.3 59.6 M308.4 30.7 L299.3 30.0 L292.9 28.6 M308.4 30.7 H315.5 V48.2 M315.5 48.2 L315.3 55.5 L310.3 59.6 M266.9 -18.8 L288.2 -21.3 M266.9 -18.8 H264.4 V3.7 M291.0 7.8 V14.0 H286.0 M264.4 3.7 L266.0 6.5 L266.8 7.6 M266.8 7.6 L275.0 9.5 L286.0 14.0 M315.6 24.3 L313.9 12.9 L312.0 5.9 M315.6 24.3 L309.9 29.4 L308.4 30.7 M292.9 28.6 L289.5 22.7 L286.5 17.1 M286.5 17.1 L286.0 14.0 M266.8 7.6 V23.2 H256.3 M286.5 17.1 V37.6 H262.4 M256.3 23.2 L262.4 37.6 M283.8 49.5 L285.1 48.6 L285.9 48.4 M283.8 49.5 L271.7 46.1 L262.2 43.5 M262.2 43.5 L261.2 38.2 L262.4 37.6 M211.3 31.1 H214.9 V7.7 M211.3 31.1 L200.5 28.0 L189.5 29.2 M190.0 7.8 H214.9 V7.7 M416.5 -16.4 L412.0 12.2 M392.5 6.3 V13.2 H410.3 M412.0 12.2 L411.7 10.3 L410.3 13.2 M428.8 -15.7 V14.5 H435.2 M412.0 12.2 L435.2 14.5 M457.7 -9.4 V3.4 H460.2 M460.2 3.4 L449.6 9.2 L436.2 15.3 M435.2 14.5 H436.2 V15.3 M461.0 90.3 L447.1 91.7 L436.8 89.8 M461.0 90.3 L456.9 103.8 L455.5 114.5 M436.8 89.8 L433.5 90.9 L432.0 96.9 M432.0 96.9 H433.0 V113.5 M455.5 114.5 L433.0 113.5 M458.5 170.4 H438.5 V167.8 M458.5 170.4 L467.1 156.6 L472.9 142.7 M448.1 141.8 H459.5 V137.6 M448.1 141.8 L437.5 158.2 M437.5 158.2 L436.9 163.4 L438.2 167.5 M472.9 142.7 L459.5 137.6 M438.2 167.5 L438.2 168.7 L438.5 167.8 M455.5 114.5 L458.6 117.8 M458.6 117.8 V137.6 H459.5 M433.0 113.5 V118.8 H429.6 M429.6 118.8 L438.8 131.0 L448.1 141.8 M335.4 190.7 L336.9 171.1 M362.7 184.9 L356.9 168.2 M356.9 168.2 L342.1 165.2 M336.9 171.1 V165.2 H342.1 M319.4 189.7 L312.2 181.2 M336.9 171.1 L315.0 159.5 M312.2 181.2 L313.7 171.6 L315.0 159.5 M342.1 165.2 L342.1 157.1 L340.9 149.6 M340.9 149.6 L313.4 148.4 M313.4 148.4 L313.0 153.5 M315.0 159.5 H313.0 V153.5 M683.7 84.7 L685.2 88.8 L689.4 89.6 M715.2 73.9 V90.8 H715.0 M715.0 90.8 L704.2 91.1 L689.4 89.6 M636.0 137.4 L638.2 132.8 M636.0 137.4 V158.4 H646.7 M638.2 132.8 V151.9 H668.5 M668.5 151.9 L667.1 153.6 L667.1 154.7 M667.1 154.7 L646.7 158.4 M671.0 148.7 L680.9 147.5 L686.4 144.7 M671.0 148.7 L661.8 126.1 M689.6 140.8 L687.7 128.7 L687.2 117.7 M689.6 140.8 L686.4 144.7 M670.4 115.0 H661.8 V126.1 M670.4 115.0 L680.0 115.6 L685.7 116.7 M685.7 116.7 L687.2 117.7 M638.2 132.8 L639.2 129.2 M639.2 129.2 L661.8 126.1 M668.5 151.9 L671.0 148.7 M639.2 129.2 L633.8 117.7 M664.0 103.5 L670.4 115.0 M689.4 89.6 L685.7 116.7 M710.7 113.5 H687.2 V117.7 M710.7 113.5 L713.9 103.1 L718.0 95.5 M715.0 90.8 V95.5 H718.0 M607.5 48.3 L593.1 50.8 L583.2 55.9 M607.5 48.3 V72.0 H614.6 M614.6 72.0 L593.5 79.3 M593.5 79.3 L586.0 70.4 L581.5 62.1 M581.5 62.1 V55.9 H583.2 M622.3 76.0 L618.8 74.0 L614.6 72.0 M637.1 44.0 H610.3 V42.3 M610.3 42.3 V48.3 H607.5 M587.7 96.2 L593.5 79.3 M585.8 97.8 L578.6 96.1 L570.0 95.7 M558.3 73.1 L581.5 62.1 M719.4 204.6 V220.6 H712.7 M719.4 204.6 L740.5 207.0 M732.8 233.9 L744.9 213.2 M732.8 233.9 V224.2 H713.3 M713.3 224.2 L712.8 222.8 L712.7 220.6 M740.5 207.0 L744.8 207.8 L744.9 213.2 M813.6 156.2 V162.5 H809.7 M813.6 156.2 L833.2 167.3 L849.0 176.7 M814.0 185.6 L812.5 185.2 L811.4 184.3 M811.4 184.3 V162.5 H809.7 M784.8 51.1 V51.5 H784.4 M761.3 53.1 L761.7 54.8 L761.9 53.4 M761.9 53.4 L784.4 51.5 M805.6 60.6 H806.0 V73.5 M783.3 78.3 V51.5 H784.4 M783.3 78.3 L790.0 82.7 M790.0 82.7 L799.7 78.3 L806.0 73.5 M869.8 68.7 L853.4 75.1 L839.9 78.6 M839.9 78.6 V77.4 H811.7 M811.7 77.4 L809.0 76.0 L806.0 73.5 M487.1 147.1 L483.3 142.4 M487.1 147.1 L488.7 154.4 L489.5 157.2 M483.3 142.4 L472.9 142.7 M458.5 170.4 L460.5 171.8 M489.5 157.2 L460.5 171.8 M508.9 143.1 L499.0 145.1 L487.1 147.1 M508.9 143.1 L518.7 160.1 M489.5 157.2 H491.9 V162.0 M491.9 162.0 H509.6 V167.0 M518.7 160.1 L514.4 163.1 L509.6 167.0 M408.4 194.7 H418.2 V171.6 M408.4 194.7 L387.2 188.8 M387.2 188.8 H383.9 V185.4 M383.9 185.4 L384.6 177.9 L388.7 167.1 M418.2 171.6 L408.2 169.4 L400.1 162.8 M400.1 162.8 V167.1 H388.7 M361.9 212.0 V219.9 H385.4 M387.0 217.4 L385.4 219.9 M387.0 217.4 L387.5 205.2 L387.2 188.8 M370.3 188.2 V185.4 H383.9 M388.7 167.1 L388.7 167.1 M388.7 167.1 L360.1 162.6 M360.1 162.6 L356.9 168.2 M438.2 167.5 H418.2 V171.6 M438.5 167.8 L438.0 187.9 M408.4 194.7 V200.8 H414.5 M438.0 187.9 L427.6 192.8 L414.5 200.8 M387.0 217.4 L409.4 214.6 M409.4 214.6 L414.8 203.6 M414.5 200.8 V203.6 H414.8 M483.2 214.4 V188.4 H479.8 M483.2 214.4 L497.9 213.0 L509.5 215.5 M509.5 215.5 V193.4 H508.6 M508.6 193.4 L497.8 190.4 L483.6 186.2 M483.6 186.2 H479.8 V188.4 M491.9 162.0 L490.2 173.6 L483.6 186.2 M509.6 167.0 H514.6 V187.3 M514.6 187.3 L508.6 193.4 M460.5 171.8 L468.8 178.6 L472.6 187.3 M472.6 187.3 L479.8 188.4 M504.2 104.6 L508.2 120.1 M504.2 104.6 L490.8 101.7 M508.2 120.1 H486.0 V133.4 M486.0 133.4 L481.7 122.4 L479.9 113.3 M490.8 101.7 L482.5 105.9 M482.5 105.9 L479.4 111.4 L479.9 113.3 M508.9 143.1 L513.6 140.4 L514.5 137.1 M514.5 137.1 L512.4 130.8 L513.4 123.3 M483.3 142.4 L486.0 133.4 M513.4 123.3 L509.3 123.5 L508.2 120.1 M458.6 117.8 H479.9 V113.3 M462.2 89.5 H461.0 V90.3 M462.2 89.5 H482.5 V105.9 M613.2 21.8 H606.7 V30.6 M613.2 21.8 L610.5 4.3 M606.7 30.6 V24.1 H588.8 M607.0 -0.8 V4.3 H610.5 M607.0 -0.8 V6.8 H585.4 M585.4 6.8 L588.8 24.1 M610.3 42.3 L606.7 30.6 M629.9 18.9 H613.2 V21.8 M636.0 4.2 L610.5 4.3 M581.0 30.5 L578.8 38.2 L576.2 43.8 M581.0 30.5 H588.8 V24.1 M576.2 43.8 V55.9 H583.2 M610.8 -16.5 H607.0 V-0.8 M582.6 -18.5 L583.4 5.2 M583.4 5.2 V6.8 H585.4 M583.4 5.2 H567.3 V5.9 M581.0 30.5 L560.6 20.9 M567.3 5.9 L564.2 13.2 L560.6 20.9 M544.0 73.8 L535.9 45.7 M555.6 72.1 L554.6 59.2 L556.7 44.9 M535.9 45.7 V44.9 H556.7 M576.2 43.8 V43.4 H558.1 M556.7 44.9 L558.1 43.4 M560.6 20.9 L554.2 24.5 M558.1 43.4 V24.5 H554.2 M636.0 137.4 L617.9 147.2 M607.4 122.9 L616.5 146.6 M617.9 147.2 H616.5 V146.6 M716.6 31.7 L724.6 25.8 M716.6 31.7 H686.3 V26.2 M724.6 25.8 V3.9 H704.9 M704.9 3.9 L698.1 4.7 L690.8 3.1 M686.3 26.2 H689.8 V4.3 M689.8 4.3 L690.8 3.1 M727.1 26.0 L724.6 25.8 M708.7 50.0 L716.6 31.7 M685.3 28.3 H686.3 V26.2 M705.7 3.4 L707.5 5.4 L704.9 3.9 M687.7 -18.3 V3.1 H690.8 M660.0 3.9 L689.8 4.3 M813.6 156.2 L814.9 155.9 L812.7 153.9 M809.7 162.5 H789.3 V175.4 M788.8 146.3 V175.4 H789.3 M788.8 146.3 H791.9 V144.8 M812.7 153.9 L791.9 144.8 M863.0 124.6 V141.3 H819.9 M812.7 153.9 H819.9 V141.3 M879.4 194.2 V236.6 H832.2 M832.2 236.6 L842.7 255.6 M814.1 213.2 L821.3 236.0 M832.2 236.6 L826.2 236.1 L821.3 236.0 M813.3 212.9 V213.7 H792.5 M792.5 213.7 L790.2 219.2 M790.2 219.2 L794.1 233.5 M821.3 236.0 L815.7 243.0 L812.6 247.1 M794.1 233.5 V247.1 H812.6 M876.6 294.6 L836.7 304.4 M876.6 294.6 H1077.3 V312.5 M906.5 331.1 L1077.3 312.5 M906.5 331.1 V325.5 H836.7 M836.7 325.5 L832.3 321.9 M836.7 304.4 H832.3 V321.9 M1088.3 404.8 H834.4 V442.6 M942.8 478.0 L838.9 458.8 M834.4 442.6 L838.9 458.8 M906.5 331.1 H837.7 V351.8 M1042.4 403.0 V404.8 H1088.3 M1042.4 403.0 L843.5 374.3 M843.5 374.3 V351.8 H837.7 M836.7 325.5 L835.7 350.8 M837.7 351.8 L835.7 350.8 M817.6 756.9 L828.6 762.6 L837.4 765.3 M817.6 756.9 L813.1 743.1 M813.1 743.1 L822.6 736.5 L831.2 734.0 M837.4 765.3 L842.1 763.0 M842.1 763.0 V738.7 H836.3 M831.2 734.0 L836.3 738.7 M829.2 782.0 L832.6 772.2 L837.4 765.3 M875.3 767.8 L858.8 767.3 L842.1 763.0 M1121.1 752.0 V738.7 H836.3 M330.5 25.3 L335.4 5.6 M330.5 25.3 H332.0 V27.2 M332.0 27.2 L346.5 24.6 L358.2 23.7 M335.4 5.6 L343.4 7.0 L354.4 9.6 M354.4 9.6 H358.2 V23.7 M331.0 -0.5 L333.8 0.7 L335.4 5.6 M315.6 24.3 L330.5 25.3 M315.5 48.2 H333.9 V41.4 M333.9 41.4 L332.0 27.2 M364.1 -3.1 L361.4 2.0 L354.4 9.6 M333.9 41.4 H343.3 V48.2 M343.3 48.2 L350.0 49.5 L354.0 47.6 M358.2 23.7 L363.1 29.9 M354.0 47.6 L363.1 29.9 M384.3 12.6 V28.4 H379.8 M363.1 29.9 L372.5 27.8 L379.8 28.4 M410.3 13.2 H407.3 V29.6 M407.3 29.6 L389.9 38.1 M379.8 28.4 L382.5 32.5 L389.9 38.1 M411.8 60.0 H414.5 V57.2 M411.8 60.0 H390.6 V48.2 M414.5 57.2 L414.8 46.3 L416.2 35.1 M416.2 35.1 L407.3 29.6 M390.6 48.2 L388.4 43.9 L389.9 38.1 M388.7 167.1 L384.6 155.8 L378.4 146.2 M360.1 162.6 L361.4 154.5 L361.1 144.6 M378.4 146.2 L361.1 144.6 M331.8 119.7 L338.1 131.2 L346.2 144.8 M331.8 119.7 H339.9 V110.9 M346.2 144.8 L358.7 142.9 M339.9 110.9 H360.1 V118.2 M360.1 118.2 L358.7 142.9 M346.2 144.8 L340.9 149.6 M361.1 144.6 V142.9 H358.7 M343.3 48.2 L339.7 60.0 L332.0 69.5 M312.7 68.2 L327.5 72.8 M312.7 68.2 L312.2 64.6 L310.3 59.6 M327.5 72.8 V69.5 H332.0 M307.8 73.5 L315.4 97.2 M307.8 73.5 L312.2 70.8 L312.7 68.2 M315.4 97.2 L336.0 94.1 M327.5 72.8 L336.0 94.1 M258.2 104.0 L258.8 110.8 L262.2 115.5 M258.2 104.0 L248.3 101.7 L238.3 102.7 M238.8 123.7 L231.9 109.8 M238.8 123.7 L260.8 119.5 M260.8 119.5 L262.2 115.5 M238.3 102.7 L237.2 106.1 L231.9 109.8 M283.8 49.5 V67.0 H279.8 M307.8 73.5 L296.0 80.6 M279.8 67.0 V80.6 H296.0 M315.4 97.2 L309.1 101.4 L306.1 105.5 M306.1 105.5 L293.4 87.0 M296.0 80.6 H293.4 V87.0 M233.5 145.7 L229.2 166.9 M233.5 145.7 H254.4 V145.9 M254.4 145.9 L256.5 167.0 M256.5 167.0 L247.0 171.9 L237.4 177.4 M237.4 177.4 V166.9 H229.2 M231.0 143.1 V145.7 H233.5 M231.0 143.1 L238.8 123.7 M260.3 141.9 L259.0 142.7 L254.4 145.9 M260.3 141.9 H260.8 V119.5 M238.3 102.7 L232.7 90.8 M231.9 109.8 L215.1 114.6 M208.6 100.6 H215.1 V114.6 M208.6 100.6 V91.9 H215.1 M232.7 90.8 H215.1 V91.9 M236.8 58.4 L240.4 64.5 L240.2 73.5 M236.8 58.4 L242.4 55.0 L243.9 48.3 M258.7 46.3 V48.3 H243.9 M258.7 46.3 H263.3 V75.3 M240.2 73.5 V79.2 H260.8 M263.3 75.3 L260.8 79.2 M234.1 32.0 L243.9 48.3 M234.1 32.0 H241.0 V21.4 M241.0 21.4 L256.3 23.2 M262.2 43.5 H258.7 V46.3 M279.8 67.0 L263.3 75.3 M258.2 104.0 V90.9 H264.0 M264.0 90.9 L260.8 79.2 M232.7 90.8 L236.5 77.0 M236.5 77.0 L240.2 73.5 M264.0 90.9 L283.6 92.3 M283.6 92.3 L287.8 90.3 L293.4 87.0 M189.4 63.2 L212.4 48.0 M190.8 72.0 H213.2 V75.5 M212.4 48.0 V55.7 H219.9 M219.9 55.7 V75.1 H213.8 M213.2 75.5 L212.9 75.8 L213.8 75.1 M211.3 31.1 L212.3 32.3 M212.3 32.3 L211.8 41.1 L212.4 48.0 M215.1 91.9 L216.0 83.6 L213.2 75.5 M212.3 32.3 L225.4 33.0 L234.1 32.0 M236.8 58.4 L219.9 55.7 M236.5 77.0 L223.2 75.4 L213.8 75.1 M266.9 -18.8 L268.5 -18.2 L265.9 -19.5 M265.9 -19.5 V-155.3 H231.2 M265.9 -19.5 L242.3 -17.4 M242.3 -17.4 L230.8 -148.7 M231.2 -155.3 L230.8 -148.7 M237.8 -12.8 V-26.5 H214.5 M237.8 -12.8 V0.8 H236.2 M236.2 0.8 L235.0 2.3 M235.0 2.3 L216.2 5.9 M216.2 5.9 H205.1 V-16.0 M205.1 -16.0 L210.7 -20.6 L214.5 -26.5 M242.3 -17.4 L240.2 -14.6 L237.8 -12.8 M230.8 -148.7 L214.5 -26.5 M264.4 3.7 L248.6 2.7 L236.2 0.8 M241.0 21.4 V2.3 H235.0 M214.9 7.7 L213.9 6.0 L216.2 5.9 M524.1 -213.9 H516.2 V-94.9 M565.6 -24.4 L563.1 -20.5 L561.8 -20.8 M516.2 -94.9 L540.0 -24.2 M540.0 -24.2 H561.8 V-20.8 M567.3 5.9 H557.3 V-4.5 M561.8 -20.8 L559.2 -13.7 L557.3 -4.5 M472.3 -22.8 L477.7 -22.7 M516.2 -94.9 L510.6 -69.4 M477.7 -22.7 H510.6 V-69.4 M436.8 89.8 L433.4 85.8 L433.8 77.4 M433.8 77.4 L425.7 72.7 L417.7 71.0 M432.0 96.9 L421.7 96.3 L406.5 92.5 M417.7 71.0 V92.5 H406.5 M462.2 89.5 L464.6 81.4 L467.4 77.3 M490.8 101.7 L489.4 73.9 M467.4 77.3 L478.0 75.8 L489.4 73.9 M510.5 68.9 L502.5 70.3 L490.3 73.0 M506.7 102.3 L504.2 104.6 M489.4 73.9 L490.3 73.0 M688.9 210.0 L703.0 215.0 L712.7 220.6 M688.9 210.0 H690.8 V236.9 M713.3 224.2 L708.7 228.9 L701.8 238.1 M701.8 238.1 L697.4 238.8 L690.8 236.9 M668.2 225.1 L685.3 238.8 M668.2 225.1 H671.6 V214.1 M688.9 210.0 L690.1 209.2 L688.8 210.0 M671.6 214.1 H688.8 V210.0 M685.3 238.8 V236.9 H690.8 M665.3 418.5 L668.0 398.6 M665.3 418.5 L648.5 415.4 M648.5 415.4 L646.2 394.6 M646.2 394.6 H647.2 V394.0 M647.2 394.0 L668.0 398.6 M647.2 394.0 L654.4 375.8 M668.0 398.6 L678.8 394.2 M678.8 394.2 L668.9 373.7 M654.4 375.8 L661.1 372.4 L668.9 373.7 M409.4 214.6 V233.1 H413.3 M432.9 233.5 L424.8 237.4 M432.9 233.5 L432.5 226.3 L432.9 215.5 M432.9 215.5 L414.8 203.6 M413.3 233.1 L424.8 237.4 M500.1 281.1 V282.2 H501.0 M446.1 236.6 L449.9 233.9 L454.1 230.3 M454.1 230.3 V236.8 H477.9 M498.7 324.8 L513.6 322.5 M497.9 297.4 L523.0 304.6 M513.6 322.5 L523.0 304.6 M284.5 235.3 V242.0 H261.1 M385.4 219.9 V236.6 H385.4 M413.3 233.1 L399.3 238.8 M385.4 236.6 L399.3 238.8 M358.8 214.2 L362.6 231.9 M362.6 231.9 L375.8 236.5 L385.1 236.8 M385.4 236.6 L385.1 236.8 M362.6 231.9 H351.7 V242.6 M265.4 173.6 L281.8 171.1 M265.4 173.6 V186.1 H260.8 M287.1 185.9 L273.8 190.1 L263.7 192.1 M287.1 185.9 L285.2 182.2 L288.1 181.3 M288.1 181.3 L283.9 172.8 M281.8 171.1 L283.9 172.8 M260.8 186.1 L264.7 187.6 L263.7 192.1 M260.3 141.9 L278.8 147.0 M278.8 147.0 L282.5 157.2 L281.8 171.1 M256.5 167.0 H265.4 V173.6 M238.0 186.7 V177.4 H237.4 M238.0 186.7 L260.8 186.1 M288.5 212.5 L286.6 210.6 L288.9 212.0 M288.5 212.5 V208.7 H262.9 M288.9 212.0 L287.1 198.9 L287.1 185.9 M262.9 208.7 L263.7 192.1 M301.7 209.3 H288.9 V212.0 M312.2 181.2 L300.6 179.3 L288.1 181.3 M313.0 153.5 L283.9 172.8 M635.5 203.0 L644.9 217.1 M635.5 203.0 L627.6 210.9 L615.4 221.4 M616.3 229.8 L615.4 221.4 M616.3 229.8 V234.8 H627.4 M644.9 217.1 V231.1 H645.8 M627.4 234.8 H645.8 V231.1 M693.5 297.8 V297.0 H713.3 M693.5 297.8 L693.8 278.5 M693.8 278.5 L717.3 280.8 M713.3 297.0 H717.3 V280.8 M667.1 154.7 V187.7 H661.7 M667.1 154.7 H685.3 V173.5 M661.7 187.7 L673.3 187.7 L680.5 184.3 M685.3 173.5 L680.5 184.3 M667.1 154.7 L668.3 154.1 L667.1 154.7 M686.4 144.7 H696.2 V166.7 M696.2 166.7 H685.3 V173.5 M663.3 202.5 H671.6 V214.1 M663.3 202.5 V188.9 H659.9 M659.9 188.9 L661.7 187.7 M688.8 210.0 L690.7 202.0 L692.6 195.8 M692.6 195.8 L680.5 184.3 M765.5 77.8 L769.5 78.1 L769.2 80.7 M765.5 77.8 L746.0 80.7 M769.2 80.7 L766.5 96.4 M746.0 80.7 V90.6 H742.1 M742.1 90.6 H765.4 V97.6 M766.5 96.4 L766.8 95.0 L765.4 97.6 M783.3 78.3 L775.6 80.1 L769.2 80.7 M761.9 53.4 L765.5 77.8 M741.9 70.1 L746.0 80.7 M718.0 95.5 L735.0 97.2 M735.0 97.2 L742.1 90.6 M735.0 97.2 L747.2 118.4 M747.2 118.4 V121.0 H760.6 M760.6 121.0 V97.6 H765.4 M616.3 229.8 L610.4 231.7 L606.2 237.2 M620.2 262.8 L626.0 258.0 L629.5 251.8 M620.2 262.8 V247.6 H602.1 M627.4 234.8 L629.5 251.8 M602.1 247.6 H606.2 V237.2 M540.8 235.2 L562.5 225.8 M540.8 235.2 L541.3 244.9 L545.6 254.4 M545.6 254.4 H561.2 V254.3 M561.2 254.3 L566.6 234.2 M562.5 225.8 H566.6 V234.2 M443.6 207.2 V193.4 H442.4 M443.6 207.2 L450.9 208.7 L457.3 215.0 M442.4 193.4 L464.5 193.5 M464.5 193.5 L463.0 204.2 L459.8 213.6 M457.3 215.0 L460.0 212.0 L459.8 213.6 M438.0 187.9 L439.9 190.0 L442.4 193.4 M432.9 215.5 L443.6 207.2 M446.1 236.6 V233.5 H432.9 M454.1 230.3 L456.1 225.1 L457.3 215.0 M472.6 187.3 L464.5 193.5 M481.2 216.5 L459.8 213.6 M481.2 216.5 H483.2 V214.4 M481.2 216.5 V236.5 H478.7 M478.7 236.5 H477.9 V236.8 M532.9 43.8 L529.5 39.9 L528.6 31.3 M532.9 43.8 L522.4 52.8 L511.0 66.5 M511.0 66.5 L509.8 63.0 M509.8 63.0 H511.7 V32.3 M528.6 31.3 V27.2 H519.3 M519.3 27.2 L513.9 31.0 L511.7 32.3 M535.9 45.7 L533.4 46.6 L532.9 43.8 M554.2 24.5 V21.5 H545.0 M545.0 21.5 V31.3 H528.6 M510.8 68.7 V66.5 H511.0 M489.2 39.2 V63.0 H509.8 M489.2 39.2 H479.6 V45.9 M490.3 73.0 L479.6 45.9 M489.2 39.2 L491.6 34.5 L491.8 34.2 M491.8 34.2 L503.7 30.9 L511.7 32.3 M646.7 158.4 L641.3 164.7 L637.5 175.5 M617.9 147.2 L621.5 156.3 L620.2 160.5 M620.2 160.5 V175.5 H637.5 M659.9 188.9 V184.8 H638.9 M637.5 175.5 V184.8 H638.9 M635.5 203.0 V185.9 H637.7 M644.9 217.1 L663.3 202.5 M637.7 185.9 L638.9 184.8 M717.5 126.6 L712.7 136.1 L712.8 141.7 M717.5 126.6 V126.5 H737.0 M737.0 126.5 H738.2 V144.7 M712.8 141.7 L718.1 151.6 M718.1 151.6 V150.2 H730.3 M738.2 144.7 L734.6 146.8 L730.3 150.2 M710.7 113.5 V126.6 H717.5 M689.6 140.8 L712.8 141.7 M747.2 118.4 L742.2 121.1 L737.0 126.5 M766.3 146.0 H762.5 V151.3 M766.3 146.0 L762.1 122.4 M762.5 151.3 H738.2 V144.7 M762.1 122.4 L760.6 121.0 M762.5 151.3 H761.8 V156.1 M730.3 150.2 L743.6 168.6 M761.8 156.1 L743.6 168.6 M754.3 214.7 L765.8 232.3 M754.3 214.7 L755.7 212.4 L758.6 210.4 M765.8 232.3 L778.2 225.3 L790.2 219.2 M792.5 213.7 V206.8 H788.6 M758.6 210.4 L788.6 206.8 M765.8 232.3 L764.4 236.8 M764.4 236.8 V254.0 H775.4 M794.1 233.5 L782.9 254.2 M775.4 254.0 L779.7 255.4 L782.9 254.2 M808.0 303.2 L816.0 295.6 M808.0 303.2 L817.7 312.8 L823.0 323.5 M836.7 304.4 H833.5 V301.4 M823.0 323.5 H832.3 V321.9 M833.5 301.4 V295.6 H816.0 M876.6 294.6 L837.0 276.0 M833.5 301.4 L837.0 276.0 M803.3 304.1 L787.8 283.7 M803.3 304.1 H808.0 V303.2 M787.8 283.7 L796.2 273.4 M796.2 273.4 L816.9 281.3 M816.0 295.6 V281.3 H816.9 M549.2 440.1 L541.1 452.4 L532.4 462.1 M549.2 440.1 L557.7 441.4 M558.5 462.6 L563.5 454.5 M558.5 462.6 L540.5 471.5 M563.5 454.5 V444.0 H560.4 M557.7 441.4 L560.4 444.0 M540.5 471.5 L532.4 462.1 M557.8 516.1 H535.2 V514.7 M557.8 516.1 L559.9 530.3 M535.2 514.7 L539.4 529.3 L545.0 539.5 M559.9 530.3 H545.0 V539.5 M542.8 486.7 L536.3 491.3 M542.8 486.7 L560.6 492.3 M557.8 516.1 H564.9 V503.6 M560.6 492.3 H564.9 V503.6 M558.5 462.6 L563.1 475.2 L566.0 485.4 M542.8 486.7 H540.5 V471.5 M560.6 492.3 L566.0 485.4 M600.8 440.9 L602.5 462.5 M600.8 440.9 V439.2 H602.2 M602.5 462.5 L619.2 456.3 M602.2 439.2 L624.8 444.1 M619.2 456.3 H624.8 V444.1 M942.8 478.0 L838.7 488.7 M838.9 458.8 V463.4 H836.2 M836.2 463.4 L838.2 488.2 M838.7 488.7 L836.4 488.6 L838.2 488.2 M836.2 463.4 L828.5 466.9 L818.4 466.6 M838.2 488.2 L830.2 485.0 L818.4 485.9 M818.4 466.6 H818.4 V485.9 M1042.4 403.0 L952.7 406.5 L865.5 409.8 M834.4 442.6 L832.8 440.6 L832.7 441.0 M865.5 409.8 L837.5 422.6 M832.7 441.0 V422.6 H837.5 M823.0 323.5 L814.1 333.0 M835.7 350.8 L818.7 351.8 M818.7 351.8 L815.4 344.5 L814.1 333.0 M803.3 304.1 H792.8 V315.4 M792.8 315.4 L790.5 317.1 L792.8 316.6 M792.8 316.6 L794.0 322.4 L798.5 329.3 M814.1 333.0 L806.1 333.4 L798.5 329.3 M839.4 645.7 L839.1 660.1 L836.0 672.6 M839.4 645.7 H1124.7 V643.9 M863.4 678.0 L836.3 673.0 M836.0 672.6 L836.3 673.0 M813.5 782.4 L811.2 780.7 M817.6 756.9 L813.2 762.6 L809.6 772.5 M809.6 772.5 L811.2 780.7 M332.0 69.5 L357.9 71.9 M336.0 94.1 V96.2 H338.4 M338.4 96.2 L358.3 85.5 M357.9 71.9 H358.3 V85.5 M339.9 110.9 L336.8 105.9 L338.4 96.2 M360.1 118.2 V116.4 H364.1 M364.1 116.4 L369.6 91.6 M358.3 85.5 V91.6 H369.6 M383.2 119.9 L364.1 116.4 M383.2 119.9 V91.7 H391.9 M391.9 91.7 L391.9 88.2 L388.4 88.1 M369.6 91.6 H388.4 V88.1 M391.9 91.7 L402.0 94.2 M411.8 61.1 V71.0 H417.7 M411.8 61.1 H388.4 V82.6 M402.0 94.2 V92.5 H406.5 M388.4 82.6 L389.2 83.0 L388.4 88.1 M385.4 122.8 L384.5 137.1 M385.4 122.8 V121.4 H411.1 M384.5 137.1 V143.1 H410.6 M411.1 121.4 L416.5 125.0 M416.5 125.0 V140.5 H414.2 M410.6 143.1 H414.2 V140.5 M378.4 146.2 L382.6 142.5 L384.5 137.1 M383.2 119.9 L385.4 122.8 M402.0 94.2 L407.9 109.7 L411.1 121.4 M400.1 162.8 L405.3 153.0 L410.6 143.1 M429.6 118.8 L416.5 125.0 M437.5 158.2 L414.2 140.5 M305.4 112.4 V116.9 H286.9 M305.4 112.4 V124.9 H318.0 M318.0 124.9 L311.7 144.9 M286.1 117.5 H286.9 V116.9 M286.1 117.5 L289.2 129.6 L288.1 141.2 M288.1 141.2 L311.7 144.9 M306.1 105.5 H305.4 V112.4 M283.6 92.3 L286.9 116.9 M331.8 119.7 V124.9 H318.0 M313.4 148.4 L313.2 147.9 L311.7 144.9 M262.2 115.5 L286.1 117.5 M278.8 147.0 L282.0 142.7 L288.1 141.2 M221.9 139.3 H231.0 V143.1 M221.9 139.3 V166.8 H201.0 M229.2 166.9 V171.7 H207.2 M207.2 171.7 L202.1 169.3 L201.0 166.8 M221.9 139.3 H214.6 V132.6 M215.1 114.6 L213.1 116.0 L212.7 121.8 M214.6 132.6 L211.4 125.6 L212.7 121.8 M214.6 132.6 L203.9 137.6 L189.9 144.7 M477.7 -22.7 L488.7 -11.8 M510.6 -69.4 L510.0 -27.8 M510.0 -27.8 H488.7 V-11.8 M467.6 19.2 L463.1 5.4 M467.6 19.2 L478.9 21.8 L488.1 23.9 M463.1 5.4 V-1.0 H489.5 M488.1 23.9 H495.9 V5.2 M495.9 5.2 L489.5 -1.0 M460.2 3.4 V5.4 H463.1 M489.5 -1.0 L488.9 -6.4 L488.7 -11.8 M467.6 19.2 L464.2 27.8 L461.1 35.1 M436.2 15.3 L437.2 27.1 M461.1 35.1 L437.2 27.1 M491.8 34.2 L488.1 23.9 M479.6 45.9 V45.8 H465.0 M461.1 35.1 H465.0 V45.8 M414.5 57.2 L435.6 50.8 M416.2 35.1 L433.4 33.0 M435.6 50.8 V33.0 H433.4 M433.4 33.0 L437.2 27.1 M620.2 262.8 L619.0 270.9 L620.3 279.0 M620.3 279.0 L623.4 280.7 M646.7 262.5 V251.8 H629.5 M646.7 262.5 L646.4 268.9 M646.4 268.9 L623.4 280.7 M542.0 421.5 V434.6 H543.7 M645.5 362.1 V357.2 H644.7 M645.5 362.1 L634.7 371.9 L625.0 384.2 M644.7 357.2 L638.8 355.9 L631.5 355.2 M631.5 355.2 V375.5 H616.0 M616.0 375.5 V384.2 H625.0 M661.0 348.9 L645.6 356.2 M661.0 348.9 V369.6 H671.7 M654.4 375.8 L648.4 367.2 L645.5 362.1 M645.6 356.2 L642.7 355.6 L644.7 357.2 M671.7 369.6 L668.9 373.7 M692.0 299.1 L691.8 300.9 L693.5 297.8 M692.0 299.1 V318.2 H695.7 M713.3 297.0 V301.4 H716.9 M716.9 301.4 H710.3 V324.7 M710.3 324.7 L695.7 318.2 M568.0 418.5 V418.3 H581.1 M568.0 418.5 L557.7 441.4 M583.5 438.8 L572.9 441.9 L560.4 444.0 M583.5 438.8 L586.0 428.6 L585.4 421.4 M585.4 421.4 H581.1 V418.3 M600.8 440.9 L584.4 439.7 M584.4 439.7 H583.5 V438.8 M602.2 439.2 L601.5 429.4 L604.8 419.4 M585.4 421.4 L596.9 419.1 L604.8 419.4 M509.5 215.5 L512.2 218.7 M512.2 218.7 V222.9 H513.4 M513.4 222.9 L494.8 244.3 M521.1 281.0 L521.2 278.0 L517.3 279.6 M521.1 281.0 H539.2 V271.6 M517.3 279.6 L518.6 255.4 M539.2 271.6 L539.2 260.5 M539.2 260.5 L521.9 253.3 M521.9 253.3 L518.6 255.4 M501.0 282.2 L510.6 281.9 L517.3 279.6 M523.0 304.6 H530.2 V300.8 M530.2 300.8 L527.0 288.6 L521.1 281.0 M549.6 280.8 H536.4 V302.6 M549.6 280.8 L546.5 278.4 L539.2 271.6 M530.2 300.8 L530.9 300.7 L536.4 302.6 M497.5 253.9 L518.6 255.4 M530.0 231.1 L525.8 229.2 L524.6 231.2 M530.0 231.1 L534.1 232.4 L540.8 235.2 M545.6 254.4 L543.0 256.9 L539.2 260.5 M524.6 231.2 L522.0 241.9 L521.9 253.3 M513.4 222.9 L518.2 229.3 L524.6 231.2 M524.3 394.3 V394.5 H533.7 M542.0 421.5 L546.8 418.2 L547.2 412.1 M533.7 394.5 V412.1 H547.2 M549.2 440.1 H543.7 V434.6 M568.0 418.5 V409.8 H560.3 M560.3 409.8 V412.1 H547.2 M513.6 322.5 L524.6 328.5 M524.6 328.5 L523.2 339.3 L519.9 352.7 M501.8 341.8 L519.9 352.7 M543.7 371.7 H519.7 V374.1 M543.7 371.7 V353.1 H534.8 M519.7 374.1 L518.4 372.2 L517.0 367.6 M534.8 353.1 L521.6 355.3 M517.0 367.6 L521.6 355.3 M533.2 327.2 L524.6 328.5 M533.2 327.2 H543.8 V346.7 M543.8 346.7 L537.9 349.2 L534.8 353.1 M519.9 352.7 L520.4 355.5 L521.6 355.3 M517.0 367.6 V368.5 H498.4 M521.2 390.7 L519.7 374.1 M521.2 390.7 L506.7 392.4 L494.2 392.0 M603.1 356.5 H600.7 V352.4 M603.1 356.5 V371.4 H602.9 M600.7 352.4 L587.6 345.0 M587.6 345.0 H578.4 V352.9 M578.4 352.9 L574.5 369.2 M602.9 371.4 L602.5 371.7 M602.5 371.7 L595.2 374.9 L587.4 375.1 M587.4 375.1 L574.5 369.2 M623.9 347.3 H631.5 V355.2 M623.9 347.3 L611.3 353.6 L603.1 356.5 M616.0 375.5 L611.2 374.1 L602.9 371.4 M582.5 395.7 V397.6 H583.9 M582.5 395.7 L584.3 386.5 L587.4 375.1 M583.9 397.6 H601.5 V400.5 M601.5 400.5 L600.3 387.8 L602.5 371.7 M336.1 234.2 L335.6 235.7 L336.6 235.7 M336.1 234.2 L330.4 229.2 L320.6 226.3 M320.6 226.3 H305.7 V237.9 M344.9 213.5 L336.1 234.2 M351.7 242.6 L342.3 237.4 L336.6 235.7 M318.3 218.6 L320.6 226.3 M288.8 230.0 L299.0 233.5 L305.7 237.9 M288.8 230.0 V212.5 H288.5 M288.8 230.0 V235.3 H284.5 M242.2 209.0 V210.5 H259.1 M242.2 209.0 H239.3 V212.9 M239.3 212.9 L241.6 224.3 L243.3 232.7 M259.1 210.5 V241.4 H260.7 M260.7 241.4 L253.3 237.8 L243.3 232.7 M262.9 208.7 L263.4 207.9 L259.1 210.5 M238.0 186.7 H235.7 V192.7 M235.7 192.7 V209.0 H242.2 M243.3 232.7 H233.4 V239.7 M550.4 1105.9 H522.2 V837.0 M657.9 231.3 L660.4 244.4 L667.2 252.6 M657.9 231.3 L654.2 233.5 L646.3 231.4 M646.3 231.4 L649.3 258.7 M667.2 252.6 L649.3 258.7 M668.2 225.1 L657.9 231.3 M672.7 254.8 H677.9 V254.0 M672.7 254.8 L667.2 252.6 M677.9 254.0 L680.1 247.2 L685.3 238.8 M645.8 231.1 V231.4 H646.3 M646.7 262.5 L650.4 260.2 L649.3 258.7 M736.6 178.5 L715.7 159.9 M736.6 178.5 L714.4 192.5 M714.4 192.5 L710.4 190.3 M710.4 190.3 L705.7 168.5 M715.7 159.9 V168.5 H705.7 M718.1 151.6 L716.3 156.9 L715.7 159.9 M743.6 168.6 L738.1 178.5 M738.1 178.5 L736.6 178.5 M719.4 204.6 L716.4 200.8 L714.4 192.5 M740.5 207.0 V187.0 H745.2 M745.2 187.0 H738.1 V178.5 M692.6 195.8 V190.3 H710.4 M696.2 166.7 L698.9 165.7 L705.7 168.5 M793.0 99.4 L809.8 99.6 M793.0 99.4 H791.2 V101.7 M791.2 101.7 V115.4 H788.0 M788.0 115.4 L790.3 121.3 L796.6 125.8 M796.6 125.8 L801.7 126.0 L809.4 124.0 M809.4 124.0 V112.8 H819.5 M819.5 112.8 L815.6 108.6 L814.7 102.3 M814.7 102.3 L809.8 99.6 M790.0 82.7 L793.0 99.4 M811.7 77.4 L809.8 99.6 M766.5 96.4 H791.2 V101.7 M762.1 122.4 L788.0 115.4 M788.8 146.3 L766.3 146.0 M791.9 144.8 L792.6 137.0 L796.6 125.8 M819.9 141.3 H809.4 V124.0 M863.0 124.6 L819.5 112.8 M839.9 78.6 L814.7 102.3 M576.8 237.7 V253.0 H587.8 M576.8 237.7 L583.5 234.2 L591.6 230.2 M602.1 247.6 L600.8 248.3 L598.4 250.9 M591.6 230.2 V237.2 H606.2 M598.4 250.9 L591.1 251.1 L587.8 253.0 M607.4 280.2 H620.3 V279.0 M607.4 280.2 V279.0 H603.4 M598.4 250.9 L603.4 279.0 M558.2 281.0 V282.4 H559.9 M558.2 281.0 L564.7 258.5 M559.9 282.4 V282.4 H585.3 M585.3 282.4 L579.7 261.2 M564.7 258.5 L574.2 262.3 L579.7 261.2 M549.6 280.8 L556.4 279.6 L558.2 281.0 M561.2 254.3 L564.4 256.5 L564.7 258.5 M587.8 253.0 L585.2 255.1 L579.7 261.2 M603.4 279.0 L593.2 281.0 L585.6 282.7 M585.6 282.7 L586.4 284.7 L585.3 282.4 M576.8 237.7 L571.4 234.1 L566.6 234.2 M585.6 282.7 L584.0 302.7 M559.9 282.4 L559.9 292.8 L562.5 305.6 M562.5 305.6 L572.2 304.7 L584.0 302.7 M600.7 352.4 L609.2 331.0 M587.6 345.0 V329.3 H583.8 M609.2 331.0 L596.8 328.7 L585.2 327.6 M583.8 329.3 L585.2 327.6 M607.4 280.2 L604.1 308.1 M604.1 308.1 L589.3 309.2 M584.0 302.7 L589.3 309.2 M589.3 123.0 L589.0 123.3 M616.5 146.6 H588.8 V150.1 M588.8 150.1 L583.1 139.2 M589.0 123.3 V139.2 H583.1 M562.9 102.1 H560.9 V116.2 M589.0 123.3 L560.9 116.2 M767.2 166.6 L760.3 175.6 L758.1 187.8 M767.2 166.6 V179.1 H787.3 M787.3 179.1 L787.2 182.5 L788.5 185.4 M758.1 187.8 L762.8 191.8 M762.8 191.8 L785.6 193.3 M788.5 185.4 L787.0 190.7 L785.6 193.3 M761.8 156.1 L767.2 166.6 M745.2 187.0 V187.8 H758.1 M789.3 175.4 V179.1 H787.3 M811.4 184.3 L788.5 185.4 M744.9 213.2 L754.3 214.7 M758.6 210.4 H762.8 V191.8 M788.6 206.8 L785.6 193.3 M792.8 315.4 L781.6 309.8 L775.2 306.7 M787.8 283.7 L781.5 285.1 L774.5 286.6 M774.5 286.6 V300.6 H771.1 M771.1 300.6 L775.2 306.7 M732.8 233.9 L734.6 238.1 L734.4 237.8 M764.4 236.8 L756.9 239.8 M756.9 239.8 L734.4 237.8 M725.7 276.4 L721.6 277.8 L719.6 277.8 M725.7 276.4 V274.5 H728.9 M728.9 274.5 H732.4 V252.0 M719.6 277.8 L706.4 258.6 M708.2 254.0 L706.4 258.6 M708.2 254.0 V249.7 H731.2 M731.2 249.7 V252.0 H732.4 M693.8 278.5 L689.8 271.0 M690.5 266.9 V258.6 H706.4 M690.5 266.9 H689.8 V271.0 M717.3 280.8 V277.8 H719.6 M677.9 254.0 V266.9 H690.5 M701.8 238.1 L708.2 254.0 M734.4 237.8 L731.2 249.7 M756.9 239.8 L755.0 247.9 L750.1 260.5 M750.1 260.5 H732.4 V252.0 M812.6 248.1 L808.5 253.7 M812.6 248.1 H835.1 V263.5 M808.5 253.7 L813.4 266.0 L821.4 277.3 M835.1 263.5 L835.2 269.7 L833.4 272.2 M833.4 272.2 L829.7 272.8 L821.4 277.3 M812.6 247.1 H812.6 V248.1 M795.4 262.7 L782.9 254.2 M795.4 262.7 H808.5 V253.7 M842.7 255.6 L837.0 257.5 L835.1 263.5 M796.2 273.4 V262.7 H795.4 M816.9 281.3 L821.4 277.3 M837.0 276.0 V272.2 H833.4 M768.2 279.9 L774.0 256.0 M768.2 279.9 L760.1 276.1 L750.9 277.0 M774.0 256.0 H750.6 V261.3 M750.9 277.0 H750.6 V261.3 M775.4 254.0 V256.0 H774.0 M774.5 286.6 L768.2 279.9 M750.1 260.5 L749.1 258.4 L750.6 261.3 M749.6 277.9 L728.9 274.5 M749.6 277.9 L750.9 277.0 M586.9 490.0 L575.3 479.9 M586.9 490.0 V480.8 H604.9 M575.3 479.9 V466.0 H584.2 M604.9 480.8 V466.3 H598.8 M598.8 466.3 H588.2 V464.8 M588.2 464.8 L585.5 466.9 L584.2 466.0 M566.0 485.4 L575.3 479.9 M586.0 509.0 L586.9 490.0 M586.0 509.0 L564.9 503.6 M563.5 454.5 H584.2 V466.0 M602.5 462.5 L598.8 466.3 M619.2 456.3 L627.9 466.1 M627.9 466.1 L622.2 487.6 M607.9 484.2 V487.6 H622.2 M607.9 484.2 L604.9 480.8 M584.4 439.7 L588.2 464.8 M559.9 530.3 L569.5 536.2 M586.0 509.0 V510.0 H587.3 M569.5 536.2 L575.7 534.3 L576.9 535.0 M576.9 535.0 L582.2 522.2 L587.3 510.0 M607.9 484.2 L595.9 510.9 M587.3 510.0 H595.9 V510.9 M563.9 584.1 L561.9 584.3 L558.8 579.7 M563.9 584.1 L568.1 581.2 L576.7 578.8 M566.4 554.7 H577.3 V562.0 M566.4 554.7 L556.0 558.9 M556.0 558.9 H558.8 V579.7 M577.3 562.0 L576.7 578.8 M643.4 422.1 L630.7 422.4 L621.4 420.7 M643.4 422.1 V440.6 H649.6 M621.4 420.7 L624.9 443.9 M624.9 443.9 L643.7 445.4 M649.6 440.6 L643.7 445.4 M624.8 444.1 H624.9 V443.9 M627.9 466.1 H644.7 V465.8 M643.7 445.4 V465.8 H644.7 M813.9 509.1 L816.1 496.7 L816.3 487.0 M813.9 509.1 L804.8 508.9 L794.0 512.1 M792.9 510.7 L794.0 512.1 M792.9 510.7 L794.3 495.8 L797.5 484.1 M797.5 484.1 L816.3 487.0 M838.7 488.7 V509.4 H836.0 M836.0 509.4 L833.5 512.0 L832.8 511.8 M832.8 511.8 L816.4 510.6 M816.4 510.6 L813.9 509.1 M818.4 485.9 H816.3 V487.0 M815.5 535.0 H816.4 V510.6 M815.5 535.0 H815.5 V535.0 M832.8 511.8 V533.2 H830.7 M830.7 533.2 H815.5 V535.0 M815.5 535.0 L795.9 534.9 M794.0 512.1 L793.7 531.9 M795.9 534.9 L793.7 531.9 M749.7 536.9 L755.4 541.4 M749.7 536.9 L751.8 516.2 M755.4 541.4 H771.4 V535.1 M751.8 516.2 L758.0 516.6 L764.6 514.4 M764.6 514.4 H773.0 V533.3 M771.4 535.1 L773.0 533.3 M774.4 557.5 H756.7 V552.7 M774.4 557.5 V556.2 H775.8 M756.7 552.7 L756.3 545.6 L755.4 541.4 M775.8 556.2 L771.4 544.5 L771.4 535.1 M772.8 505.8 V514.4 H764.6 M772.8 505.8 L792.9 510.7 M793.7 531.9 L773.0 533.3 M794.0 551.2 V556.2 H775.8 M794.0 551.2 H795.9 V534.9 M727.6 530.7 H707.0 V539.3 M727.6 530.7 L734.6 539.5 M707.0 539.3 H706.7 V553.4 M734.6 539.5 L729.8 555.1 M706.7 553.4 L729.8 555.1 M734.6 539.5 V536.9 H749.7 M751.4 560.0 L756.7 552.7 M751.4 560.0 L742.5 560.1 L734.3 562.0 M734.3 562.0 L733.2 559.9 L729.8 555.1 M772.8 505.8 V492.3 H769.1 M797.5 484.1 L794.9 480.9 M769.1 492.3 V482.5 H777.4 M794.9 480.9 L777.4 482.5 M814.5 410.1 L827.7 416.6 L836.6 421.8 M814.5 410.1 L813.3 404.0 L816.4 400.2 M836.6 421.8 L833.4 395.5 M816.4 400.2 H831.2 V393.7 M833.4 395.5 L831.2 393.7 M865.5 409.8 L833.4 395.5 M837.5 422.6 H836.6 V421.8 M815.2 398.9 V400.2 H816.4 M815.2 398.9 L812.4 384.6 L814.3 367.7 M835.1 380.1 L814.3 367.7 M835.1 380.1 V393.7 H831.2 M843.5 374.3 V380.1 H835.1 M814.3 367.7 H813.8 V367.1 M818.7 351.8 H813.1 V358.3 M813.8 367.1 L813.1 358.3 M796.5 389.1 L798.4 382.7 L797.6 380.1 M796.5 389.1 L815.2 398.9 M813.8 367.1 H797.6 V380.1 M813.5 711.8 L822.9 715.9 L834.2 718.8 M813.5 711.8 H815.5 V693.6 M815.5 693.6 L831.1 693.8 M831.1 693.8 H837.3 V702.1 M837.3 702.1 L839.5 713.9 M834.2 718.8 V713.9 H839.5 M806.7 684.7 H809.4 V675.5 M806.7 684.7 L809.6 691.3 L815.5 693.6 M836.0 672.6 L815.6 669.3 M836.3 673.0 H831.1 V693.8 M815.6 669.3 L810.5 672.5 L809.4 675.5 M863.4 678.0 V702.1 H837.3 M831.2 734.0 L834.2 718.8 M806.7 684.7 V691.8 H792.4 M809.4 675.5 L789.0 663.7 M789.0 663.7 L777.7 675.6 M792.4 691.8 V675.6 H777.7 M813.1 743.1 V741.2 H807.0 M813.5 711.8 V717.1 H801.4 M801.4 717.1 H807.0 V741.2 M792.4 691.8 L789.2 700.6 M789.2 700.6 V714.7 H796.5 M801.4 717.1 H796.5 V714.7 M792.1 761.9 L809.6 772.5 M792.1 761.9 L794.3 755.3 L791.8 748.0 M807.0 741.2 L798.8 746.0 L791.8 748.0 M792.1 761.9 V772.8 H783.5 M811.2 780.7 L802.2 783.1 L789.6 788.6 M783.5 772.8 L788.7 780.9 L789.6 788.6 M811.4 812.5 L786.2 805.3 M786.2 805.3 L784.8 799.5 M789.6 788.6 H784.8 V799.5 M806.3 835.1 H780.7 V827.1 M801.6 884.8 L775.0 834.4 M775.0 834.4 H780.7 V827.1 M786.2 805.3 L782.6 811.3 M780.7 827.1 H782.6 V811.3 M358.2 53.6 H385.5 V54.2 M358.2 53.6 L359.6 68.5 M359.6 68.5 H382.9 V69.9 M385.5 54.2 L383.2 63.7 L382.9 69.9 M354.0 47.6 H358.2 V53.6 M390.6 48.2 L385.5 54.2 M357.9 71.9 L358.9 67.8 L359.6 68.5 M388.4 82.6 L387.8 75.7 L382.9 69.9 M411.8 60.0 L413.1 60.2 L411.8 61.1 M519.4 -10.8 L512.1 5.7 M519.4 -10.8 L524.6 -11.0 L532.6 -11.9 M532.6 -11.9 L544.5 -0.3 M515.1 10.2 L512.1 5.7 M515.1 10.2 L530.8 5.9 L542.3 6.2 M542.3 6.2 L544.4 3.9 L544.5 -0.3 M510.0 -27.8 L513.9 -17.8 L519.4 -10.8 M495.9 5.2 H512.1 V5.7 M540.0 -24.2 L537.2 -18.7 L532.6 -11.9 M557.3 -4.5 L549.4 -2.7 L544.5 -0.3 M519.3 27.2 L518.2 19.7 L515.1 10.2 M545.0 21.5 V6.2 H542.3 M467.0 76.7 L464.7 65.1 L460.8 52.1 M467.0 76.7 L439.3 68.9 M460.8 52.1 L441.5 55.8 M439.3 68.9 L440.8 60.1 L441.5 55.8 M467.4 77.3 V76.7 H467.0 M465.0 45.8 L460.8 52.1 M433.8 77.4 L437.4 72.2 L439.3 68.9 M435.6 50.8 L441.5 55.8 M672.7 254.8 V279.0 H663.4 M689.8 271.0 H669.0 V282.7 M663.4 279.0 L669.0 282.7 M646.4 268.9 L652.7 272.0 L656.8 278.4 M663.4 279.0 H656.8 V278.4 M692.0 299.1 H674.9 V299.3 M669.0 282.7 L674.9 299.3 M521.2 390.7 L521.6 392.9 L524.3 394.3 M640.2 330.3 L638.1 329.4 L637.7 328.7 M640.2 330.3 L660.7 330.5 M637.7 328.7 L643.1 303.5 M643.1 303.5 L653.8 306.2 L665.7 311.0 M660.7 330.5 L665.3 328.1 L667.8 320.9 M667.8 320.9 L665.7 311.0 M623.9 347.3 L623.6 331.6 M645.6 356.2 H640.2 V330.3 M623.6 331.6 L629.8 332.3 L637.7 328.7 M661.0 348.9 L662.0 347.5 M662.0 347.5 L660.7 330.5 M656.8 278.4 L649.0 289.5 L642.8 303.1 M674.9 299.3 V311.0 H665.7 M642.8 303.1 L643.1 303.5 M681.9 327.3 L687.6 324.3 L695.7 318.2 M681.9 327.3 V320.9 H667.8 M602.3 401.4 V417.4 H607.7 M602.3 401.4 L626.2 386.7 M607.7 417.4 L611.4 419.7 L619.2 418.5 M619.2 418.5 L625.8 408.1 L631.9 393.1 M631.9 393.1 H626.2 V386.7 M583.9 397.6 H581.1 V418.3 M601.5 400.5 H602.3 V401.4 M604.8 419.4 L607.7 417.4 M625.0 384.2 L624.8 387.0 L626.2 386.7 M621.4 420.7 L619.2 418.5 M648.5 415.4 L643.4 422.1 M646.2 394.6 V393.1 H631.9 M544.6 387.4 L562.8 398.9 M544.6 387.4 L549.6 375.9 M549.6 375.9 L562.1 370.0 M566.9 395.4 L562.8 398.9 M566.9 395.4 H564.9 V370.9 M564.9 370.9 L561.0 370.2 L562.1 370.0 M533.7 394.5 L544.6 387.4 M560.3 409.8 H562.8 V398.9 M543.7 371.7 L547.1 374.5 L549.6 375.9 M553.0 346.3 L562.1 370.0 M553.0 346.3 L543.8 346.7 M582.5 395.7 L572.4 397.0 L566.9 395.4 M574.5 369.2 V370.9 H564.9 M553.0 346.3 L558.5 340.6 M558.5 340.6 H578.4 V352.9 M235.7 192.7 L213.8 194.0 M239.3 212.9 L215.9 223.3 M215.9 223.3 H213.8 V194.0 M207.2 171.7 V191.3 H209.1 M213.8 194.0 L209.1 191.3 M545.0 539.5 H544.2 V540.5 M569.5 536.2 L569.8 544.2 L566.4 554.7 M556.0 558.9 L551.1 556.8 L543.4 554.1 M544.2 540.5 L543.4 554.1 M558.8 579.7 L539.0 578.3 M536.4 577.0 V578.3 H539.0 M536.4 577.0 H539.1 V557.3 M539.1 557.3 V554.1 H543.4 M682.1 395.0 L691.1 388.9 M682.1 395.0 H689.8 V416.9 M689.8 416.9 H709.0 V411.1 M709.0 411.1 L712.5 405.0 L714.9 396.2 M714.9 396.2 L709.7 391.9 M691.1 388.9 L702.7 391.6 L709.7 391.9 M608.3 310.0 L616.5 327.1 M608.3 310.0 L618.2 304.0 L629.6 295.8 M629.6 295.8 L632.0 297.8 L635.0 300.0 M635.0 300.0 L617.1 327.3 M617.1 327.3 V327.1 H616.5 M604.1 308.1 H608.3 V310.0 M609.2 331.0 L610.9 331.2 L616.5 327.1 M585.2 327.6 V309.2 H589.3 M623.4 280.7 L624.9 286.6 L629.6 295.8 M642.8 303.1 L635.0 300.0 M623.6 331.6 V327.3 H617.1 M558.7 309.8 L563.2 329.9 M558.7 309.8 V306.7 H539.8 M536.0 323.6 V306.7 H539.8 M536.0 323.6 L550.5 325.6 L562.8 330.4 M562.8 330.4 H563.2 V329.9 M562.5 305.6 L558.7 309.8 M583.8 329.3 L574.5 329.6 L563.2 329.9 M536.4 302.6 L539.8 306.7 M533.2 327.2 L534.8 324.4 L536.0 323.6 M558.5 340.6 H562.8 V330.4 M514.6 187.3 L529.2 186.5 M512.2 218.7 L540.0 200.8 M540.0 200.8 H529.2 V186.5 M535.0 100.3 L534.9 109.0 M560.9 116.2 V123.8 H556.1 M556.1 123.8 V109.0 H534.9 M513.4 123.3 H529.0 V119.9 M534.9 109.0 L532.5 114.3 L529.0 119.9 M749.6 277.9 L748.9 286.2 L744.2 298.9 M771.1 300.6 L756.5 304.9 M756.5 304.9 L744.2 298.9 M725.7 276.4 L734.1 287.3 L738.0 301.3 M744.2 298.9 L738.0 301.3 M716.9 301.4 L734.2 304.6 M734.2 304.6 H738.0 V301.3 M601.9 558.1 L591.9 553.4 M601.9 558.1 H611.6 V532.5 M591.9 553.4 H587.5 V540.9 M587.5 540.9 L603.7 527.6 M611.6 532.5 L610.1 529.4 L603.7 527.6 M576.9 535.0 L587.5 540.9 M577.3 562.0 L585.1 558.7 L591.9 553.4 M595.9 510.9 L598.3 512.8 M598.3 512.8 L602.9 520.2 L603.7 527.6 M602.9 559.3 H606.4 V574.1 M602.9 559.3 H628.1 V548.7 M623.0 578.2 L609.0 576.0 M623.0 578.2 L632.8 559.1 M609.0 576.0 H606.4 V574.1 M628.1 548.7 L632.8 559.1 M576.7 578.8 H585.9 V582.5 M585.9 582.5 L595.3 576.6 L606.4 574.1 M601.9 558.1 L602.9 559.3 M647.8 561.5 L632.8 559.1 M647.8 561.5 L644.9 578.4 M626.8 582.3 L644.9 578.4 M626.8 582.3 L623.0 578.2 M658.2 440.9 H669.0 V451.0 M658.2 440.9 L663.6 431.6 L669.3 423.4 M669.0 451.0 L678.2 449.5 L686.6 444.6 M669.3 423.4 L677.8 423.4 L686.6 424.0 M686.6 444.6 L690.9 435.3 M686.6 424.0 L688.9 429.6 L690.9 435.3 M649.6 440.6 L658.2 440.9 M667.3 464.9 L669.0 451.0 M667.3 464.9 V470.8 H649.2 M649.2 470.8 L648.4 467.6 L644.7 465.8 M665.3 418.5 H669.3 V423.4 M678.8 394.2 V395.0 H682.1 M689.8 416.9 L686.6 424.0 M647.8 479.8 L646.4 475.2 L649.2 470.8 M647.8 479.8 V492.7 H666.9 M667.3 464.9 L668.9 466.9 L672.9 470.2 M672.9 470.2 L667.4 482.7 L666.9 492.7 M690.4 556.6 H670.7 V555.2 M690.4 556.6 L684.7 534.3 M670.7 555.2 H669.7 V535.2 M669.7 535.2 L684.7 534.3 M611.6 532.5 L615.5 531.5 L621.9 532.8 M628.1 548.7 V542.0 H629.1 M621.9 532.8 L629.1 542.0 M647.8 561.5 L649.0 557.7 L653.8 558.7 M653.8 558.7 L648.1 537.3 M629.1 542.0 L648.1 537.3 M833.3 535.1 L834.1 558.0 M833.3 535.1 L861.4 535.3 L888.1 532.6 M834.1 558.0 L926.6 540.0 M888.1 532.6 V540.0 H926.6 M836.0 509.4 L862.2 521.1 L888.1 532.6 M830.7 533.2 V535.1 H833.3 M963.9 542.3 H926.6 V540.0 M963.9 542.3 L900.2 563.6 L840.0 580.1 M834.1 558.0 L832.8 559.3 M840.0 580.1 L832.8 559.3 M815.5 535.0 L819.3 560.1 M819.3 560.1 L832.8 559.3 M792.9 627.3 L795.7 645.3 M792.9 627.3 H809.7 V619.6 M809.7 619.6 L817.2 630.0 M817.2 630.0 L813.9 637.2 L814.9 647.3 M795.7 645.3 V649.0 H812.9 M814.9 647.3 L812.9 649.0 M815.6 669.3 H812.9 V649.0 M789.0 663.7 L789.5 650.4 M789.5 650.4 L792.1 649.4 L795.7 645.3 M839.4 645.7 L840.2 646.4 L839.4 645.7 M839.4 645.7 L814.9 647.3 M664.3 561.3 L670.7 555.2 M664.3 561.3 L667.9 578.0 M692.3 557.6 L686.7 567.8 L682.2 578.1 M692.3 557.6 L690.4 556.6 M682.2 578.1 V578.0 H667.9 M789.5 650.4 V647.8 H773.4 M792.9 627.3 L786.1 622.5 M786.1 622.5 L776.9 624.6 M776.9 624.6 L771.4 629.9 M771.4 629.9 L773.4 647.8 M776.9 367.7 V366.5 H784.4 M776.9 367.7 L774.5 352.3 L773.1 340.9 M784.4 366.5 L790.2 362.8 L795.1 354.0 M795.1 354.0 L789.8 343.1 M773.1 340.9 V343.1 H789.8 M813.1 358.3 L806.2 354.6 L795.1 354.0 M797.6 380.1 H784.4 V366.5 M798.5 329.3 L795.2 337.2 L789.8 343.1 M777.7 675.6 L773.0 676.1 L769.2 675.2 M773.4 647.8 H761.5 V655.3 M761.5 655.3 L758.3 661.8 L759.8 666.0 M759.8 666.0 L766.9 668.2 L769.2 675.2 M796.5 714.7 H781.2 V725.8 M791.8 748.0 V744.0 H781.9 M781.9 744.0 L782.9 735.9 L781.2 725.8 M783.5 772.8 H767.3 V769.6 M771.0 747.0 H781.9 V744.0 M771.0 747.0 L766.8 757.9 L764.0 766.2 M764.0 766.2 V769.6 H767.3 M784.8 799.5 L765.8 791.7 M767.3 769.6 L765.8 791.7 M775.0 834.4 L767.7 834.7 L763.1 835.6 M763.1 835.6 V900.5 H739.1 M763.1 835.6 H757.6 V831.2 M739.1 900.5 L734.1 878.8 M734.1 878.8 V833.1 H741.7 M741.7 833.1 L751.8 831.2 L757.6 831.2 M670.8 793.8 H659.2 V780.6 M670.8 793.8 H691.5 V778.9 M691.5 778.9 L691.4 776.4 L690.6 769.4 M690.6 769.4 H663.8 V764.2 M663.8 764.2 L659.2 780.6 M709.0 411.1 L715.2 417.2 L717.0 422.7 M690.9 435.3 V437.5 H705.5 M717.0 422.7 H705.5 V437.5 M233.4 239.7 H211.4 V231.4 M211.4 231.4 H208.7 V245.3 M215.9 223.3 L212.1 223.9 L211.1 229.0 M211.1 229.0 L189.6 200.9 M211.4 231.4 L210.9 229.6 M211.1 229.0 L210.9 229.6 M671.7 369.6 H687.3 V363.0 M691.1 388.9 L689.3 377.5 L692.3 368.1 M687.3 363.0 L687.9 367.4 L692.3 368.1 M662.0 347.5 L687.5 347.6 M687.3 363.0 H687.5 V347.6 M681.9 327.3 V346.4 H688.2 M687.5 347.6 V346.4 H688.2 M710.3 324.7 L714.0 331.3 M714.0 331.3 L709.6 341.4 M688.2 346.4 V341.4 H709.6 M620.2 160.5 L612.5 166.4 L605.9 171.7 M588.8 150.1 L587.7 156.9 M605.9 171.7 L597.1 163.4 L588.9 159.9 M587.7 156.9 H588.9 V159.9 M613.0 189.7 L608.7 185.4 L607.0 183.5 M613.0 189.7 L608.4 201.1 L605.6 207.6 M607.0 183.5 L588.8 185.5 M588.8 185.5 V206.9 H586.5 M605.6 207.6 L586.5 206.9 M637.7 185.9 L613.0 189.7 M605.9 171.7 L605.6 177.3 L607.0 183.5 M615.4 221.4 L608.1 213.8 L605.6 207.6 M588.9 159.9 L588.3 168.3 L584.7 181.1 M584.7 181.1 L588.8 185.5 M591.6 230.2 L581.7 209.6 M581.7 209.6 L582.7 206.3 L586.5 206.9 M563.6 219.0 L556.9 214.9 L545.8 207.4 M563.6 219.0 H574.4 V210.2 M574.4 210.2 L563.9 183.4 M545.8 207.4 H542.2 V201.6 M542.2 201.6 L561.9 182.1 M563.9 183.4 L561.3 183.3 L561.9 182.1 M530.0 231.1 L539.1 217.8 L545.8 207.4 M562.5 225.8 V219.0 H563.6 M581.7 209.6 H574.4 V210.2 M584.7 181.1 H563.9 V183.4 M540.0 200.8 L542.2 201.6 M714.0 331.3 L733.8 328.5 M734.2 304.6 L735.8 313.4 L735.7 326.5 M733.8 328.5 H735.7 V326.5 M700.1 529.0 V511.2 H709.6 M700.1 529.0 L691.8 528.9 M691.8 528.9 H682.6 V513.7 M709.6 511.2 L707.8 509.7 L707.9 508.7 M707.9 508.7 H692.6 V505.6 M682.6 513.7 H692.6 V505.6 M707.0 539.3 L705.3 533.1 L700.1 529.0 M692.3 557.6 L699.0 558.5 L702.6 557.7 M702.6 557.7 H706.7 V553.4 M684.7 534.3 L691.8 528.9 M686.4 472.5 H688.7 V487.8 M686.4 472.5 L690.9 466.6 L696.3 464.6 M688.7 487.8 L709.2 488.8 M696.3 464.6 L706.1 465.6 M706.1 465.6 L711.6 473.8 L713.6 483.3 M709.2 488.8 L713.6 483.3 M672.9 470.2 L686.4 472.5 M666.9 492.7 L668.3 496.1 M668.3 496.1 L676.7 492.6 L686.5 491.2 M686.5 491.2 H688.7 V487.8 M686.6 444.6 L696.3 464.6 M686.5 491.2 L692.6 505.6 M707.9 508.7 L710.8 497.2 L709.2 488.8 M705.5 437.5 L712.1 444.9 M712.1 444.9 L710.9 460.6 M710.9 460.6 L706.1 465.6 M647.8 479.8 L647.6 483.0 L645.6 482.1 M622.2 487.6 H625.2 V490.3 M645.6 482.1 L637.5 486.0 L625.2 490.3 M598.3 512.8 L628.3 506.9 M625.2 490.3 L628.3 506.9 M621.9 532.8 L631.5 510.6 M628.3 506.9 V510.6 H631.5 M665.3 531.0 L667.1 522.8 L670.8 512.1 M665.3 531.0 L652.0 532.3 M652.0 532.3 L646.3 522.0 L640.9 512.0 M666.0 503.8 L670.8 512.1 M666.0 503.8 L649.5 506.4 M649.5 506.4 L640.9 512.0 M669.7 535.2 L665.3 531.0 M682.6 513.7 H670.8 V512.1 M664.3 561.3 L653.8 558.7 M648.1 537.3 L647.7 533.1 L652.0 532.3 M631.5 510.6 V512.0 H640.9 M668.3 496.1 L666.0 503.8 M645.6 482.1 H649.5 V506.4 M830.5 610.5 H833.1 V626.4 M830.5 610.5 L844.4 602.0 M869.4 611.8 L844.4 602.0 M869.4 611.8 L836.0 628.9 M836.0 628.9 V626.4 H833.1 M809.7 619.6 L812.4 611.5 M817.2 630.0 L833.1 626.4 M812.4 611.5 L817.6 610.9 L818.1 607.8 M818.1 607.8 L830.5 610.5 M837.5 584.8 L827.5 583.6 L818.1 586.2 M837.5 584.8 L843.2 591.6 L844.4 602.0 M818.1 586.2 L820.6 599.4 L818.1 607.8 M1124.7 643.9 L995.7 626.4 L869.4 611.8 M840.0 580.1 L837.5 584.8 M839.4 645.7 L838.4 639.6 L836.0 628.9 M725.8 601.5 L725.1 591.1 L727.0 582.3 M725.8 601.5 L726.0 601.9 M726.0 601.9 L750.4 601.0 M731.0 579.5 L727.0 582.3 M731.0 579.5 H752.5 V586.2 M752.5 586.2 L750.4 601.0 M708.0 578.0 L727.0 582.3 M708.0 578.0 V557.7 H702.6 M734.3 562.0 L733.0 571.2 L731.0 579.5 M751.4 560.0 L761.9 580.6 M761.9 580.6 L752.5 586.2 M704.1 582.0 H708.7 V601.4 M704.1 582.0 L692.1 586.6 M692.1 586.6 L686.3 605.2 M708.7 601.4 V608.5 H700.2 M700.2 608.5 L689.4 608.0 M686.3 605.2 L689.4 608.0 M708.0 578.0 L704.1 582.0 M725.8 601.5 V601.4 H708.7 M682.2 578.1 H692.1 V586.6 M726.0 601.9 L727.3 620.4 M727.3 620.4 L721.4 624.9 L715.1 625.2 M715.1 625.2 H700.2 V608.5 M629.6 595.4 L628.5 588.2 L626.8 582.3 M629.6 595.4 L649.8 600.6 M644.9 578.4 L651.8 579.5 L654.9 585.0 M654.9 585.0 V600.6 H649.8 M667.9 578.0 L669.2 580.5 L667.1 579.4 M654.9 585.0 V579.4 H667.1 M686.3 605.2 H675.2 V604.8 M667.1 579.4 L670.5 591.8 L675.2 604.8 M715.1 763.7 H712.9 V788.4 M715.1 763.7 H738.5 V774.5 M712.9 788.4 V784.4 H737.7 M738.5 774.5 V784.4 H737.7 M585.9 582.5 V603.6 H589.4 M609.0 576.0 L604.3 603.2 M589.4 603.6 V603.2 H604.3 M563.9 584.1 L561.0 591.1 L560.6 599.6 M560.6 599.6 L587.6 605.4 M589.4 603.6 L587.6 605.4 M629.6 595.4 L627.7 598.6 M627.7 598.6 V606.7 H609.1 M604.3 603.2 L609.1 606.7 M539.0 578.3 L545.2 597.8 M560.6 599.6 L561.3 598.3 L560.5 599.8 M560.5 599.8 L545.2 597.8 M673.3 660.3 V647.6 H672.3 M673.3 660.3 V667.9 H659.0 M659.0 667.9 L649.5 663.0 L643.1 659.1 M643.1 659.1 V650.5 H642.1 M672.3 647.6 L660.5 650.3 L644.5 648.2 M642.1 650.5 V648.2 H644.5 M747.5 623.8 V623.9 H734.0 M747.5 623.8 L751.7 628.8 M751.7 628.8 L752.2 644.7 M734.0 623.9 L734.4 633.2 L731.5 646.6 M752.2 644.7 V649.2 H736.9 M736.9 649.2 L731.5 646.6 M754.4 609.9 L750.4 601.0 M754.4 609.9 H747.5 V623.8 M727.3 620.4 L734.0 623.9 M764.7 608.9 L776.9 624.6 M764.7 608.9 V609.9 H754.4 M771.4 629.9 L751.7 628.8 M761.5 655.3 H752.2 V644.7 M741.9 672.1 L751.8 668.2 L759.8 666.0 M741.9 672.1 L736.9 649.2 M699.2 649.6 L714.3 645.2 M699.2 649.6 V634.9 H688.2 M688.2 634.9 L688.3 633.9 M714.6 626.1 H714.3 V645.2 M714.6 626.1 L700.5 628.6 L688.8 633.2 M688.3 633.9 H688.8 V633.2 M673.3 660.3 L691.3 671.7 M691.3 671.7 L694.5 670.8 M672.4 647.5 L672.3 647.6 M672.4 647.5 L678.1 639.8 L688.2 634.9 M694.5 670.8 L699.2 649.6 M715.1 625.2 V626.1 H714.6 M721.5 650.6 H714.3 V645.2 M721.5 650.6 L731.5 646.6 M689.4 608.0 L688.8 633.2 M818.4 466.6 L815.6 463.3 L815.7 464.3 M832.7 441.0 L820.8 440.9 M820.8 440.9 H815.7 V464.3 M794.9 480.9 L796.5 472.5 L797.2 463.2 M815.7 464.3 V463.2 H797.2 M769.7 465.9 V482.5 H777.4 M769.7 465.9 H772.2 V460.0 M772.2 460.0 V458.9 H795.0 M797.2 463.2 L794.7 459.4 L795.0 458.9 M814.5 410.1 L810.4 415.1 M820.8 440.9 H810.7 V436.7 M810.4 415.1 V436.7 H810.7 M795.0 458.9 V442.9 H797.8 M810.7 436.7 L797.8 442.9 M741.9 672.1 L740.0 675.5 L736.3 677.1 M721.5 650.6 L720.9 662.7 L720.4 670.2 M736.3 677.1 H720.4 V670.2 M694.5 670.8 L701.7 670.9 L705.6 674.7 M720.4 670.2 V674.7 H705.6 M771.0 747.0 L764.4 743.9 L758.3 737.8 M764.0 766.2 L744.1 767.6 M744.1 767.6 L742.1 756.9 L741.1 748.4 M758.3 737.8 L741.1 748.4 M761.9 793.0 V786.4 H738.6 M761.9 793.0 L761.1 803.4 L756.3 812.7 M738.6 786.4 L736.5 797.0 L735.6 807.5 M735.6 807.5 L744.9 808.5 L755.3 813.5 M756.3 812.7 V813.5 H755.3 M744.1 767.6 L738.5 774.5 M765.8 791.7 L765.0 790.6 L761.9 793.0 M737.7 784.4 V786.4 H738.6 M782.6 811.3 L756.3 812.7 M757.6 831.2 H755.3 V813.5 M687.0 827.3 V811.3 H682.3 M687.0 827.3 L674.9 833.7 L661.6 835.3 M661.6 835.3 L659.4 830.9 M659.4 830.9 H672.2 V807.1 M682.3 811.3 L679.1 810.4 L672.2 807.1 M656.0 909.4 L656.6 916.5 M656.0 909.4 L659.6 870.7 L661.6 835.3 M656.6 916.5 L696.0 835.5 M696.0 835.5 L691.8 828.9 L687.0 827.3 M656.0 909.4 H632.4 V832.1 M646.5 822.9 V832.1 H632.4 M646.5 822.9 L659.4 830.9 M670.6 805.2 H645.5 V806.1 M670.6 805.2 H672.2 V807.1 M645.5 806.1 L646.1 813.1 L646.5 822.9 M670.6 805.2 L672.7 799.1 L670.8 793.8 M691.5 778.9 L694.5 782.5 L699.6 790.5 M694.9 803.0 L699.6 790.5 M694.9 803.0 L682.3 811.3 M632.4 832.1 L616.8 825.7 M612.2 832.2 L616.8 825.7 M750.4 393.1 L736.8 394.9 L727.5 394.4 M750.4 393.1 L753.4 400.2 L752.9 412.0 M727.5 394.4 H736.5 V415.4 M736.5 415.4 V412.0 H752.9 M714.9 396.2 H727.1 V394.2 M727.1 394.2 V394.4 H727.5 M717.0 422.7 L722.8 423.0 L731.6 425.8 M736.5 415.4 H731.6 V425.8 M544.7 705.5 L544.1 704.2 M692.3 368.1 L700.6 366.5 L707.8 367.9 M709.6 341.4 H715.5 V353.1 M715.5 353.1 L707.8 367.9 M727.1 394.2 L731.0 375.5 M709.7 391.9 L708.6 379.5 L709.6 370.7 M731.0 375.5 V370.7 H709.6 M709.6 370.7 H707.8 V367.9 M563.0 167.4 H558.6 V174.1 M563.0 167.4 H557.9 V138.3 M558.6 174.1 V168.6 H539.8 M539.8 168.6 H533.9 V157.3 M533.9 157.3 L535.8 151.2 L536.9 146.6 M536.9 146.6 L537.6 145.0 L540.8 142.0 M540.8 142.0 L549.7 140.4 L555.8 137.3 M557.9 138.3 L558.5 138.8 L555.8 137.3 M587.7 156.9 L575.2 164.1 L563.0 167.4 M561.9 182.1 V174.1 H558.6 M583.1 139.2 L557.9 138.3 M529.2 186.5 V168.6 H539.8 M518.7 160.1 V157.3 H533.9 M514.5 137.1 V146.6 H536.9 M529.0 119.9 L540.8 142.0 M556.1 123.8 L555.8 137.3 M733.8 328.5 H738.2 V344.1 M715.5 353.1 L729.3 357.6 M738.2 344.1 L733.0 348.8 L729.3 357.6 M731.0 375.5 L735.5 372.8 L735.8 369.1 M735.8 369.1 V357.6 H729.3 M754.7 388.8 L755.6 369.6 M754.7 388.8 L750.4 393.1 M755.6 369.6 V369.0 H755.0 M735.8 369.1 H755.0 V369.0 M754.1 323.8 L747.8 325.9 M754.1 323.8 L761.4 327.5 L765.8 328.9 M747.8 325.9 L754.7 350.1 M765.8 328.9 L769.4 334.1 M769.4 334.1 H770.5 V339.3 M770.5 339.3 L762.7 342.8 L755.7 350.8 M755.7 350.8 L753.6 350.5 L754.7 350.1 M756.5 304.9 V323.8 H754.1 M735.7 326.5 L747.8 325.9 M775.2 306.7 L765.8 328.9 M738.2 344.1 L745.0 348.9 L754.7 350.1 M792.8 316.6 L779.6 325.0 L769.4 334.1 M773.1 340.9 V339.3 H770.5 M772.9 370.4 H755.6 V369.6 M772.9 370.4 V367.7 H776.9 M755.0 369.0 L756.5 361.4 L755.7 350.8 M727.6 530.7 L727.3 518.3 M709.6 511.2 L722.8 513.6 M727.3 518.3 H722.8 V513.6 M751.8 516.2 L749.5 514.7 M727.3 518.3 V514.7 H749.5 M712.1 444.9 V439.4 H735.1 M710.9 460.6 L721.0 461.3 L729.0 460.6 M729.0 460.6 L731.0 449.7 L735.1 439.4 M731.6 425.8 L736.3 438.3 M735.1 439.4 L738.0 440.8 L736.3 438.3 M819.3 560.1 L818.0 562.8 L813.9 563.7 M818.1 586.2 L818.2 584.0 L815.6 584.3 M815.6 584.3 V563.7 H813.9 M794.0 551.2 L799.6 560.0 M799.6 560.0 V563.7 H813.9 M652.5 605.4 L658.5 605.6 L669.4 608.2 M652.5 605.4 L645.0 620.2 M669.4 608.2 L668.2 623.3 M668.2 623.3 V630.6 H660.2 M645.0 620.2 L653.0 630.7 M660.2 630.6 L653.0 630.7 M649.8 600.6 L652.5 605.4 M675.2 604.8 V608.2 H669.4 M627.7 598.6 V621.5 H632.1 M632.1 621.5 L645.0 620.2 M688.3 633.9 H668.2 V623.3 M672.4 647.5 L665.9 640.2 L660.2 630.6 M644.5 648.2 H653.0 V630.7 M609.1 606.7 L612.6 614.4 L611.1 618.2 M632.1 621.5 L631.1 621.0 L628.0 625.0 M611.1 618.2 H628.0 V625.0 M642.1 650.5 V641.4 H626.4 M626.4 641.4 L628.0 625.0 M545.2 597.8 V605.7 H526.5 M659.0 667.9 V688.4 H658.8 M643.1 659.1 L636.2 666.7 L630.4 673.8 M630.4 673.8 V689.4 H651.4 M651.4 689.4 L658.8 688.4 M691.3 671.7 L690.1 676.2 L684.5 683.5 M684.5 683.5 L663.6 691.8 M658.8 688.4 H663.6 V691.8 M544.7 705.5 L550.7 711.3 M529.6 739.5 L538.1 739.7 L544.1 742.9 M550.7 711.3 H544.1 V742.9 M544.8 764.5 H528.3 V770.2 M544.8 764.5 L548.5 754.2 M548.5 754.2 L544.1 742.9 M544.1 742.9 L545.4 743.3 L544.1 742.9 M544.1 704.2 H550.3 V687.7 M543.8 672.9 L548.6 675.6 M550.3 687.7 H548.6 V675.6 M560.4 713.2 H550.7 V711.3 M560.4 713.2 L563.7 717.9 L572.1 722.5 M544.1 742.9 L558.6 737.9 L571.2 731.6 M571.2 731.6 L573.0 727.3 L572.1 722.5 M645.5 806.1 L640.4 800.8 M616.8 825.7 H616.2 V823.2 M616.2 823.2 L625.3 806.7 M625.3 806.7 L640.4 800.8 M594.8 805.6 L606.2 787.6 M594.8 805.6 L597.8 810.1 L597.5 810.6 M597.5 810.6 L608.3 814.7 L616.2 823.2 M625.3 806.7 H606.2 V787.6 M659.2 780.6 L641.1 789.7 M641.1 789.7 H640.4 V800.8 M618.0 757.3 L617.5 766.5 L617.7 775.9 M618.0 757.3 L619.9 754.7 M619.9 754.7 L643.4 756.2 M634.7 782.1 L617.7 775.9 M634.7 782.1 L645.5 758.4 M645.5 758.4 L642.3 758.7 L643.4 756.2 M645.7 737.7 H618.7 V733.1 M645.7 737.7 L643.4 756.2 M618.7 733.1 L620.2 743.1 L619.9 754.7 M606.2 787.6 H606.3 V785.5 M606.3 785.5 L612.9 780.1 L617.7 775.9 M641.1 789.7 V782.1 H634.7 M663.4 763.7 L663.8 764.2 M663.4 763.7 L652.5 760.5 L645.5 758.4 M682.7 738.8 L692.7 766.8 M682.7 738.8 H689.7 V731.5 M689.7 731.5 L714.5 739.7 M714.5 739.7 L710.3 749.7 L709.3 758.4 M709.3 758.4 L692.7 766.8 M668.8 741.6 L682.7 738.8 M668.8 741.6 V763.7 H663.4 M690.6 769.4 H692.7 V766.8 M715.1 763.7 V758.4 H709.3 M719.0 736.4 L714.5 739.7 M719.0 736.4 V737.7 H725.8 M741.1 748.4 L732.4 743.7 L725.8 737.7 M712.9 788.4 L708.8 790.9 M699.6 790.5 L708.8 790.9 M796.5 389.1 L790.2 392.9 L784.1 396.1 M810.4 415.1 L804.1 412.8 L795.0 414.0 M795.0 414.0 L784.1 396.1 M754.7 388.8 L775.6 398.8 M772.9 370.4 V396.0 H780.4 M775.6 398.8 H780.4 V396.0 M784.1 396.1 L780.4 396.0 M734.7 808.3 L731.0 824.8 M734.7 808.3 L727.2 806.2 L718.2 806.1 M718.2 806.1 L708.1 815.0 M731.0 824.8 V835.0 H713.5 M708.1 815.0 L708.1 833.0 M713.5 835.0 H708.1 V833.0 M741.7 833.1 L731.0 824.8 M735.6 807.5 L734.7 808.5 L734.7 808.3 M708.8 790.9 L711.4 799.6 L718.2 806.1 M694.9 803.0 L708.1 815.0 M734.1 878.8 L723.6 858.4 L713.5 835.0 M696.0 835.5 L701.9 832.6 L708.1 833.0 M572.4 828.7 L566.5 914.7 M572.4 828.7 L588.5 828.9 M595.1 835.2 L589.5 830.2 L588.5 828.9 M595.1 835.2 L580.9 878.3 L567.1 921.5 M567.1 921.5 L567.0 919.8 L566.5 914.7 M597.5 810.6 L588.5 828.9 M612.2 832.2 H595.1 V835.2 M543.0 829.7 L555.1 872.0 L566.5 914.7 M543.0 829.7 H543.0 V829.7 M572.4 828.7 V826.9 H571.3 M571.3 826.9 L543.0 829.7 M540.3 813.4 V829.7 H543.0 M727.6 484.4 V469.4 H735.8 M727.6 484.4 L732.3 487.9 L733.3 492.2 M733.3 492.2 V494.9 H745.1 M735.8 469.4 L742.1 470.4 L747.4 468.1 M755.0 487.9 V471.7 H752.4 M755.0 487.9 L747.9 492.6 L745.1 494.9 M752.4 471.7 L747.4 468.1 M713.6 483.3 L718.4 483.6 L727.6 484.4 M729.0 460.6 L735.8 469.4 M722.8 513.6 L733.3 492.2 M749.5 514.7 L745.3 503.0 L745.1 494.9 M769.1 492.3 L755.0 487.9 M769.7 465.9 H752.4 V471.7 M736.3 438.3 L738.0 437.2 L743.3 440.0 M747.4 468.1 L748.1 456.1 L751.3 445.5 M751.3 445.5 H743.3 V440.0 M772.2 460.0 L765.4 445.0 M751.3 445.5 L765.4 445.0 M752.9 412.0 L757.3 415.9 L760.7 416.2 M743.3 440.0 L760.7 416.2 M788.7 578.5 H797.9 V588.1 M788.7 578.5 L773.4 578.6 M773.4 578.6 H770.1 V580.9 M770.1 580.9 H774.6 V599.3 M774.6 599.3 L787.1 605.6 M797.9 588.1 L795.3 600.3 M787.1 605.6 L791.1 601.5 L795.3 600.3 M815.6 584.3 V588.1 H797.9 M799.6 560.0 H788.7 V578.5 M774.4 557.5 L773.4 578.6 M761.9 580.6 L768.3 578.9 L770.1 580.9 M764.7 608.9 L771.4 604.8 L774.6 599.3 M786.1 622.5 L788.3 614.5 L787.1 605.6 M812.4 611.5 H795.3 V600.3 M526.5 606.6 L541.6 613.5 L551.9 619.8 M545.5 630.9 H551.9 V619.8 M560.5 599.8 H558.4 V616.5 M551.9 619.8 L558.4 616.5 M664.5 713.8 L648.7 718.5 M664.5 713.8 L666.2 726.4 L667.6 740.4 M648.7 718.5 L647.5 736.0 M667.6 740.4 L659.7 740.3 L647.5 736.0 M667.3 711.1 L663.6 691.8 M667.3 711.1 L667.7 713.6 L664.5 713.8 M639.9 713.6 L642.4 718.2 L648.7 718.5 M639.9 713.6 H637.6 V702.5 M637.6 702.5 H651.4 V689.4 M668.8 741.6 L667.6 740.4 M686.3 714.9 L689.7 731.5 M686.3 714.9 L667.3 711.1 M618.1 726.9 L617.7 731.1 M618.1 726.9 L639.9 713.6 M617.7 731.1 V733.1 H618.7 M645.7 737.7 V736.0 H647.5 M618.1 726.9 L612.4 716.5 M617.7 731.1 V736.0 H596.7 M596.7 736.0 L586.5 714.9 M586.5 714.9 L590.1 709.8 M612.4 716.5 L601.1 714.8 L590.1 709.8 M637.6 702.5 L619.7 692.7 M612.4 716.5 L618.2 706.8 L619.7 692.7 M587.6 605.4 L583.9 625.6 M611.1 618.2 L606.5 622.4 L602.6 627.0 M602.6 627.0 H583.9 V625.6 M619.7 692.7 L619.8 689.9 L618.7 690.4 M618.7 690.4 L606.1 692.9 L594.6 696.5 M590.1 709.8 L591.3 705.1 L589.5 704.8 M589.5 704.8 H594.6 V696.5 M560.4 713.2 L573.7 695.0 M586.5 714.9 L572.1 722.5 M589.5 704.8 V695.0 H573.7 M550.3 687.7 L572.8 692.8 M573.7 695.0 L572.8 692.8 M537.1 655.0 V643.6 H550.0 M550.0 643.6 L545.5 630.9 M543.8 672.9 H537.1 V655.0 M591.6 741.9 L576.6 739.9 M591.6 741.9 L595.8 749.3 L595.4 755.7 M576.6 739.9 H570.0 V757.5 M589.9 762.9 V755.7 H595.4 M589.9 762.9 L574.2 763.4 M574.2 763.4 L570.0 757.5 M596.7 736.0 H591.6 V741.9 M571.2 731.6 L576.6 739.9 M618.0 757.3 L595.4 755.7 M548.5 754.2 L570.0 757.5 M596.9 779.8 H606.3 V785.5 M596.9 779.8 L592.2 772.0 L589.9 762.9 M789.8 437.7 V422.2 H787.2 M789.8 437.7 L769.5 439.8 M787.2 422.2 V415.6 H767.8 M769.5 439.8 L766.0 429.2 L766.3 416.7 M767.8 415.6 L766.3 416.7 M797.8 442.9 H789.8 V437.7 M795.0 414.0 H787.2 V422.2 M765.4 445.0 V439.8 H769.5 M775.6 398.8 L767.8 415.6 M760.7 416.2 L766.3 416.7 M737.5 689.3 L739.1 689.0 L737.4 689.5 M737.5 689.3 L763.7 692.2 M737.4 689.5 L739.3 698.6 L742.1 708.2 M742.1 708.2 L752.6 717.0 M761.7 715.1 V718.0 H756.5 M761.7 715.1 L767.9 704.4 M767.9 704.4 L763.7 692.2 M752.6 717.0 V718.0 H756.5 M769.2 675.2 L763.7 692.2 M736.3 677.1 L737.5 689.3 M719.0 736.4 L718.5 718.3 M725.8 737.7 L752.6 717.0 M718.5 718.3 L742.1 708.2 M781.2 725.8 L772.9 720.4 L761.7 715.1 M758.3 737.8 L757.9 728.0 L756.5 718.0 M789.2 700.6 L780.0 703.5 L767.9 704.4 M714.4 712.1 V699.9 H715.4 M714.4 712.1 H688.7 V712.5 M691.1 700.8 L688.7 712.5 M691.1 700.8 L709.5 693.4 M709.5 693.4 L711.1 698.3 L715.4 699.9 M718.5 718.3 V712.1 H714.4 M737.4 689.5 V699.9 H715.4 M686.3 714.9 H688.7 V712.5 M684.5 683.5 L691.1 700.8 M705.6 674.7 L708.9 685.2 L709.5 693.4 M577.1 804.2 L572.2 786.0 M577.1 804.2 L570.9 811.3 M570.9 811.3 L562.1 810.3 L549.0 806.9 M549.0 806.9 L550.8 786.6 M550.8 786.6 L553.2 783.9 L553.6 783.1 M553.6 783.1 H569.0 V782.8 M569.0 782.8 L572.2 786.0 M594.8 805.6 L577.1 804.2 M596.9 779.8 L572.2 786.0 M571.3 826.9 H570.9 V811.3 M540.3 813.4 H549.0 V806.9 M523.7 788.3 L536.4 789.3 L550.8 786.6 M544.8 764.5 L553.6 783.1 M574.2 763.4 L569.0 782.8 M550.0 643.6 L560.2 646.1 M558.4 616.5 L570.7 625.5 M560.2 646.1 V625.5 H570.7 M583.9 625.6 H583.4 V626.1 M570.7 625.5 L577.8 624.0 L583.4 626.1 M594.6 696.5 L589.6 675.3 M572.8 692.8 L578.8 676.3 M578.8 676.3 L589.6 675.3 M548.6 675.6 L555.9 672.7 L565.5 666.5 M578.8 676.3 L572.6 671.3 L565.5 666.5 M560.2 646.1 L567.5 655.2 M565.5 666.5 V655.2 H567.5 M583.4 626.1 L585.5 647.6 M567.5 655.2 L575.1 651.0 L585.5 647.6 M594.4 671.4 L593.4 660.3 L596.0 654.2 M594.4 671.4 L605.2 675.4 L619.6 680.5 M623.5 676.1 L619.6 680.5 M623.5 676.1 L612.1 647.7 M596.0 654.2 L611.1 647.5 M612.1 647.7 L611.8 650.0 L611.1 647.5 M589.6 675.3 L594.4 671.4 M585.5 647.6 L596.0 654.2 M618.7 690.4 L619.6 680.5 M630.4 673.8 V676.1 H623.5 M626.4 641.4 H612.1 V647.7 M602.6 627.0 L611.1 647.5" stroke="#616668" stroke-width="1" shape-rendering="crispEdges"/>
<path d="M299.2 59.4 L301.4 57.2 L304.1 55.1 L304.9 56.3 L308.1 55.6 L310.7 55.4 L310.6 57.0 L312.0 59.6 L314.4 60.4 L314.8 61.9 L316.0 63.5 L316.5 65.3 L316.5 67.2 L318.4 69.1 L319.8 71.0 L322.4 72.0 L323.6 72.1 L322.3 74.3 L321.6 77.1 L320.7 80.7 L320.4 82.5 L320.5 84.6 L321.4 87.4 L323.2 88.4 L323.7 89.9 L323.6 92.8 L323.3 96.2 L321.0 93.7 L320.8 91.0 L319.4 88.5 L318.4 86.9 L316.3 84.7 L314.2 82.6 L315.2 79.6 L314.8 77.2 L314.2 75.5 L313.8 73.8 L312.4 71.4 L311.6 69.6 L311.1 67.2 L310.3 64.5 L308.5 63.6 L307.6 60.5 L305.2 62.2 L304.1 63.5 L302.3 60.9 L299.2 59.6 Z" fill="#2b4766" stroke="none" shape-rendering="crispEdges"/>
<path d="M368.2 261.5 L370.6 259.9 L371.7 260.0 L373.7 259.0 L375.8 258.2 L378.4 259.8 L379.8 260.4 L382.6 261.6 L384.6 261.9 L385.9 262.9 L388.3 265.6 L390.0 267.0 L391.1 268.3 L392.8 270.6 L394.7 272.0 L395.6 274.8 L396.8 276.2 L393.7 275.6 L392.6 274.2 L389.4 274.1 L387.8 272.3 L385.9 272.2 L384.7 270.2 L382.8 269.4 L381.2 268.9 L379.0 267.0 L376.4 265.2 L374.7 263.9 L373.7 263.0 L371.2 261.5 L368.5 260.9 Z" fill="#2b4766" stroke="none" shape-rendering="crispEdges"/>
<path d="M439.2 376.4 L439.5 373.4 L440.3 371.8 L442.3 370.7 L442.8 368.5 L444.5 366.1 L446.4 364.2 L447.4 362.7 L449.5 364.1 L451.4 365.4 L451.0 366.5 L448.5 369.2 L448.3 370.1 L446.3 372.1 L445.1 374.0 L444.2 374.9 L442.2 376.3 L440.2 376.9 L439.0 375.6 Z" fill="#2b4766" stroke="none" shape-rendering="crispEdges"/>
<path d="M604.9 309.3 L607.0 310.4 L607.8 313.0 L610.2 311.3 L611.3 309.8 L612.9 308.1 L614.4 307.7 L616.4 305.4 L618.5 303.7 L619.9 302.2 L619.9 300.5 L622.3 298.2 L623.0 297.7 L625.2 295.2 L625.8 295.1 L623.6 292.4 L622.3 290.2 L621.1 288.4 L619.1 286.4 L616.9 287.4 L616.0 287.3 L614.8 290.7 L613.0 293.8 L613.6 294.7 L613.3 298.0 L613.3 299.4 L612.5 302.1 L611.3 302.7 L608.2 305.0 L607.8 306.1 L604.2 308.8 Z" fill="#2b4766" stroke="none" shape-rendering="crispEdges"/>
<path d="M425.4 413.7 L426.3 415.5 L426.4 417.0 L426.0 419.3 L426.4 421.8 L425.5 422.6 L426.4 424.5 L428.7 427.2 L429.7 428.8 L431.1 431.0 L431.1 434.4 L428.7 432.4 L427.9 429.4 L426.1 428.1 L426.2 425.7 L425.3 423.2 L424.4 421.4 L425.1 420.0 L423.2 418.2 L425.0 415.6 L424.8 412.9 Z" fill="#2b4766" stroke="none" shape-rendering="crispEdges"/>
<path d="M526.8 501.5 L528.2 504.3 L529.5 506.4 L531.5 504.7 L533.2 503.4 L532.1 505.8 L533.1 508.1 L533.2 510.2 L532.5 512.4 L531.8 514.3 L531.9 516.9 L530.5 519.2 L529.9 521.0 L530.5 524.3 L531.5 526.5 L535.5 524.7 L534.2 528.1 L534.5 529.1 L532.4 531.6 L532.9 533.7 L532.9 536.2 L533.4 537.6 L531.1 536.5 L530.0 534.1 L527.9 532.6 L524.8 531.0 L527.4 528.6 L528.6 526.2 L527.3 524.0 L526.8 521.8 L525.9 518.7 L525.0 516.1 L525.5 513.7 L526.3 512.3 L527.1 511.1 L527.0 508.3 L526.9 506.0 L526.2 504.9 L527.4 502.5 Z" fill="#2b4766" stroke="none" shape-rendering="crispEdges"/>
<path d="M541.7 602.7 L541.5 603.6 L543.3 606.3 L543.6 609.5 L545.1 611.0 L544.0 613.6 L542.7 614.9 L544.2 616.4 L545.1 618.4 L547.9 620.7 L548.1 619.0 L549.7 616.9 L551.6 614.5 L553.5 615.0 L555.5 614.8 L557.1 614.2 L560.1 613.0 L562.3 612.8 L564.1 612.5 L562.4 610.1 L560.2 609.7 L559.1 610.3 L556.7 610.6 L557.0 608.8 L556.7 606.5 L557.6 603.4 L557.1 605.3 L555.3 605.9 L554.3 608.9 L552.6 609.6 L549.8 613.1 L549.2 610.8 L547.3 608.4 L546.0 608.1 L544.1 606.0 L543.2 603.4 L540.8 601.8 Z" fill="#2b4766" stroke="none" shape-rendering="crispEdges"/>
<path d="M129.1 652.9 L131.6 653.5 L133.3 653.8 L133.7 655.9 L135.0 657.6 L136.3 660.4 L134.3 662.2 L134.2 664.4 L133.0 665.5 L130.9 666.6 L129.2 668.1 L127.5 669.2 L126.0 667.5 L123.7 665.4 L121.7 664.8 L122.2 662.6 L121.8 660.0 L122.9 658.8 L123.5 656.1 L123.9 654.1 L126.5 653.6 L129.1 652.0 Z" fill="#2b4766" stroke="none" shape-rendering="crispEdges"/>
<path d="M145.6 697.8 L146.7 697.7 L149.6 697.0 L151.8 696.0 L153.1 697.2 L152.8 700.5 L153.9 701.7 L152.0 703.0 L151.3 704.8 L150.0 707.5 L148.8 707.6 L147.8 710.1 L146.2 712.3 L144.8 713.6 L143.1 710.9 L140.5 709.0 L142.3 707.9 L142.4 705.1 L145.7 703.5 L147.1 702.7 L146.0 699.6 L144.9 697.2 Z" fill="#2b4766" stroke="none" shape-rendering="crispEdges"/>
<path d="M43.8 681.0 L45.2 681.2 L48.1 681.9 L48.7 684.3 L49.7 685.1 L51.1 687.0 L49.8 688.1 L47.3 689.3 L45.7 687.7 L43.8 685.7 L43.2 683.2 L43.8 681.3 Z" fill="#2b4766" stroke="none" shape-rendering="crispEdges"/>
<path d="M58.3 685.3 L59.2 687.2 L61.3 689.0 L62.4 690.7 L64.1 692.2 L65.4 695.3 L65.8 696.4 L66.2 699.2 L65.7 701.6 L69.2 702.5 L70.9 702.5 L73.3 703.2 L75.4 704.7 L78.7 705.0 L81.0 706.1 L83.3 706.7 L83.1 707.6 L84.9 708.9 L83.1 710.3 L80.8 709.5 L78.4 710.3 L76.7 709.3 L73.9 708.8 L73.0 708.1 L70.0 706.9 L68.1 705.8 L66.1 705.2 L64.2 703.2 L62.2 702.0 L61.3 699.7 L59.7 697.7 L59.6 695.9 L57.8 694.3 L56.9 692.8 L57.6 690.7 L57.6 688.0 L58.3 685.8 Z" fill="#2b4766" stroke="none" shape-rendering="crispEdges"/>
<path d="M784.7 729.6 L785.3 727.8 L785.4 726.1 L786.3 724.6 L788.5 725.4 L788.6 728.6 L789.7 729.3 L789.8 733.5 L789.8 735.4 L790.8 738.1 L791.5 739.1 L793.3 740.8 L794.1 744.0 L794.3 745.0 L795.7 747.2 L796.1 749.8 L795.3 751.4 L796.2 753.7 L792.2 754.6 L790.6 751.9 L789.1 750.8 L788.1 747.3 L786.7 745.5 L787.1 743.2 L784.9 741.1 L785.6 738.7 L785.3 737.5 L784.9 734.3 L784.0 732.5 L783.4 730.6 Z" fill="#2b4766" stroke="none" shape-rendering="crispEdges"/>
<path d="M770.5 799.9 L771.3 798.3 L773.9 796.1 L775.5 796.6 L778.1 797.2 L780.1 797.0 L781.4 795.2 L783.6 797.3 L785.4 798.1 L785.5 799.9 L786.3 801.8 L786.5 804.6 L786.0 806.1 L783.3 805.7 L782.2 805.4 L780.7 805.7 L778.0 805.8 L776.4 806.3 L774.5 805.4 L771.8 805.9 L770.0 806.3 L770.6 804.1 L769.3 801.4 L770.7 800.5 Z" fill="#2b4766" stroke="none" shape-rendering="crispEdges"/>
<path d="M181.0 6.0 L191.4 18.0 L197.8 33.6 L200.4 46.5 L200.4 69.8 L200.4 90.5 L196.5 100.8 L188.8 111.0 L184.9 129.0 L178.4 144.8 L174.5 155.0 L165.5 173.0 L155.0 191.0 L147.4 201.7 L146.0 210.0 L148.0 215.0 L152.6 223.3" stroke="#8c7210" stroke-width="1" shape-rendering="crispEdges"/>
<path d="M200.4 69.8 L207.8 69.8 L220.7 63.4 L225.9 51.7 L227.0 33.6 L231.0 15.5 L241.4 6.5" stroke="#8c7210" stroke-width="1" shape-rendering="crispEdges"/>
<path d="M241.4 6.5 L247.8 18.0 L255.6 29.7 L262.0 40.0 L263.4 51.7 L272.4 59.5 L288.0 60.8 L298.3 55.6 L308.6 53.8 L319.0 60.8 L334.5 71.0 L350.0 81.5 L365.5 93.0 L378.4 104.7 L391.4 113.8 L404.3 124.0 L407.8 134.5 L425.9 157.7 L441.4 175.8 L447.8 188.8 L462.0 201.7 L475.0 218.0 L485.3 233.6 L503.4 240.0 L513.8 235.0 L521.5 238.8" stroke="#8c7210" stroke-width="1" shape-rendering="crispEdges"/>
<path d="M5.7 257.0 L25.9 255.6 L51.7 254.3 L77.6 245.3 L103.4 236.0 L129.3 225.9 L150.0 223.3 L163.0 224.6 L175.8 223.3 L191.4 214.0 L210.0 204.0 L220.7 192.7 L241.4 181.0 L269.8 170.7 L290.5 165.5 L311.2 161.6 L334.5 156.4 L355.0 148.7 L375.9 144.8 L391.4 141.0 L404.3 134.5 L407.8 132.0 L436.2 129.3 L462.0 133.0 L482.7 141.0 L493.0 135.8 L516.4 137.0 L529.3 147.4 L550.0 159.0 L568.0 156.4 L581.0 161.6 L596.5 159.0 L615.5 151.3 L631.0 150.0 L646.5 148.7 L659.5 142.2" stroke="#8c7210" stroke-width="1" shape-rendering="crispEdges"/>
<path d="M163.0 224.6 L164.0 220.0 L169.0 219.0 L175.0 221.0 L176.0 227.0 L173.0 232.0 L166.0 232.0 L163.0 228.0 L163.0 224.6" stroke="#8c7210" stroke-width="1" shape-rendering="crispEdges"/>
<path d="M410.0 99.6 L391.4 102.0 L378.4 111.0 L369.4 124.0 L366.8 139.6 L373.3 153.9 L386.2 163.0 L401.7 165.5 L415.5 161.6 L431.0 155.0 L436.2 134.5 L436.2 121.5 L431.0 108.6 L415.5 102.0 L400.0 98.0" stroke="#8c7210" stroke-width="1" shape-rendering="crispEdges"/>
<path d="M472.4 5.7 L471.0 23.3 L466.0 41.4 L454.3 53.0 L436.2 60.8 L428.4 75.0 L420.7 90.5 L413.0 106.0 L407.8 121.5 L405.0 132.0 L404.3 134.5 L401.7 155.0 L397.8 175.8 L396.5 196.5 L397.8 210.0 L399.0 220.7 L396.5 241.4 L394.0 259.5 L396.5 277.6 L395.2 298.3 L399.0 319.0 L400.4 339.6 L401.6 356.0 L403.8 362.3 L405.0 381.0 L404.7 387.0 L403.8 393.0 L407.8 400.0 L413.0 415.5 L422.0 433.6 L428.4 451.7 L435.0 464.6 L438.8 472.0 L433.6 485.3 L423.3 508.6 L413.0 524.0 L399.0 547.4 L386.2 563.0 L368.0 575.9 L350.0 586.2 L329.5 596.8 L316.5 600.7 L308.8 607.0 L306.2 618.8 L305.0 630.4" stroke="#8c7210" stroke-width="1" shape-rendering="crispEdges"/>
<path d="M587.5 5.7 L588.8 23.3 L596.5 38.8 L604.3 51.7 L600.4 72.4 L604.3 95.7 L591.4 111.2 L596.5 124.0 L610.3 139.6 L613.0 148.7 L596.5 159.0 L591.4 160.0 L575.9 181.0 L560.3 199.0 L552.6 213.0 L537.0 225.9 L521.5 238.8 L534.5 251.7 L539.6 272.4 L544.8 293.0 L555.0 308.6 L568.0 324.0 L578.4 339.6 L585.0 351.0 L599.0 370.7 L606.0 385.0 L607.8 400.0 L615.5 410.0 L625.9 420.7 L633.6 433.6 L631.0 451.7 L629.7 477.6 L629.7 498.3 L633.6 516.4 L641.4 534.5 L649.0 552.6 L653.0 570.7 L653.8 580.0 L659.5 602.7 L670.8 622.5 L685.0 639.5 L704.8 659.3 L713.3 673.5 L720.4 693.4 L730.3 713.0 L741.7 730.0 L747.3 750.0 L750.2 772.7 L754.4 791.0" stroke="#8c7210" stroke-width="1" shape-rendering="crispEdges"/>
<path d="M806.0 71.9 L786.2 78.9 L765.5 86.6 L744.8 95.7 L724.0 107.3 L703.4 117.7 L682.7 128.0 L667.2 137.0 L659.5 142.2" stroke="#8c7210" stroke-width="1" shape-rendering="crispEdges"/>
<path d="M659.5 142.2 L669.8 152.6 L673.7 163.0 L682.7 170.7 L685.3 183.6 L698.3 190.0 L716.4 188.8 L739.6 183.6 L760.3 179.7 L781.0 174.5 L796.5 172.7 L806.0 175.8" stroke="#8c7210" stroke-width="1" shape-rendering="crispEdges"/>
<path d="M716.4 190.0 L721.5 201.7 L734.5 214.2 L747.4 218.0 L757.7 233.6 L763.0 251.7 L769.4 277.6" stroke="#8c7210" stroke-width="1" shape-rendering="crispEdges"/>
<path d="M503.4 241.4 L495.7 262.0 L482.7 285.3 L467.2 308.6 L451.7 332.0 L431.0 347.4 L424.4 353.7 L415.0 361.7 L410.9 371.6 L405.0 381.0" stroke="#8c7210" stroke-width="1" shape-rendering="crispEdges"/>
<path d="M5.7 460.8 L25.9 462.0 L51.7 464.6 L77.6 471.0 L93.0 476.3 L113.8 473.7 L134.5 473.7 L148.7 478.9 L165.5 480.0 L186.2 477.6 L210.0 475.0 L225.9 475.0 L259.5 473.7 L280.2 467.2 L295.7 454.3 L308.6 438.8 L324.0 423.3 L339.6 407.3 L356.0 401.2 L367.3 399.3 L374.8 396.2 L383.0 389.9 L392.4 376.1 L397.5 371.0 L401.2 368.6 L406.0 367.5 L412.7 368.0 L423.2 366.0 L431.0 363.0 L451.7 364.0 L477.6 363.0 L498.3 359.0 L513.8 355.0 L534.5 351.3 L555.0 348.7 L575.9 350.0 L585.0 351.0 L600.0 353.9 L615.5 359.0 L638.8 364.0 L664.6 368.0 L690.5 369.4 L716.4 372.0 L744.8 373.3 L760.3 368.0 L781.0 357.7 L796.5 347.4 L806.0 339.6" stroke="#8c7210" stroke-width="1" shape-rendering="crispEdges"/>
<path d="M405.4 381.0 L397.5 384.9 L388.0 386.2 L383.0 389.9" stroke="#8c7210" stroke-width="1" shape-rendering="crispEdges"/>
<path d="M438.8 472.4 L459.5 472.4 L480.2 464.6 L498.3 455.6 L511.2 447.8 L519.0 436.2 L526.7 425.9 L537.0 415.5 L546.0 406.5 L550.0 400.0 L555.0 391.4 L565.5 375.9 L580.0 358.0 L585.0 351.0 L591.4 334.5 L604.3 326.7 L613.0 319.0 L638.8 307.3 L664.6 294.4 L685.3 282.7 L703.4 276.3 L721.5 266.0 L729.3 255.6 L744.8 247.8 L760.3 240.0 L781.0 231.0 L806.0 222.0" stroke="#8c7210" stroke-width="1" shape-rendering="crispEdges"/>
<path d="M585.0 343.0 L578.0 325.0 L573.3 308.6 L581.0 295.7" stroke="#8c7210" stroke-width="1" shape-rendering="crispEdges"/>
<path d="M585.0 341.0 L592.0 344.0 L595.0 351.0 L592.0 358.0 L585.0 361.0 L578.0 358.0 L575.0 351.0 L578.0 344.0 L585.0 341.0" stroke="#8c7210" stroke-width="1" shape-rendering="crispEdges"/>
<path d="M586.0 352.0 L586.0 381.0" stroke="#8c7210" stroke-width="1" shape-rendering="crispEdges"/>
<path d="M739.6 255.6 L744.8 264.6 L757.7 275.0 L775.9 285.3 L791.4 298.3 L806.0 308.6" stroke="#8c7210" stroke-width="1" shape-rendering="crispEdges"/>
<path d="M165.5 231.0 L169.4 257.0 L173.3 288.0 L172.0 313.8 L178.4 344.8 L183.6 370.7 L182.3 391.4 L178.4 400.0 L170.7 413.0 L163.0 428.4 L160.3 446.5 L155.0 464.6 L148.7 478.9 L139.6 498.3 L134.5 516.4 L130.6 542.0 L129.3 568.0 L128.0 594.0 L126.8 610.0 L126.8 624.6 L129.3 639.4 L134.2 648.0 L133.0 660.0 L133.0 673.9" stroke="#8c7210" stroke-width="1" shape-rendering="crispEdges"/>
<path d="M259.5 473.7 L251.7 488.0 L246.5 503.4 L236.2 519.0 L231.0 532.0 L218.0 550.0 L214.2 568.0 L210.3 586.0 L206.0 600.0 L200.0 622.0 L192.0 632.0 L186.0 646.8 L182.3 664.0 L172.4 676.4 L160.0 685.0" stroke="#8c7210" stroke-width="1" shape-rendering="crispEdges"/>
<path d="M6.0 660.3 L24.6 655.4 L44.3 649.3 L66.5 643.8 L81.3 645.6 L93.6 643.0 L110.8 640.6 L128.0 640.0 L147.8 640.6 L162.6 646.8 L177.3 653.0 L189.7 655.4 L200.0 653.0 L215.0 652.0 L236.0 648.0 L255.0 646.0 L270.0 644.6 L285.5 639.5 L303.6 630.4 L312.7 624.0 L334.6 626.5 L355.3 633.0 L365.7 638.2 L378.6 638.2 L391.5 627.8 L407.0 621.4 L430.3 618.8 L445.8 616.2 L455.5 621.4 L476.2 614.9 L496.9 616.2 L515.0 616.2 L533.0 624.0 L551.2 627.8 L569.3 635.6 L584.8 640.8 L605.5 639.5 L628.3 641.0 L656.7 648.0 L685.0 652.3 L704.8 660.8 L727.5 662.2 L753.0 658.0 L775.7 655.0 L787.0 653.7" stroke="#8c7210" stroke-width="1" shape-rendering="crispEdges"/>
<path d="M81.3 645.6 L91.0 655.4 L98.5 665.3 L110.8 671.4 L128.0 673.9 L140.4 678.8 L152.7 682.5 L160.0 685.0 L165.0 682.0" stroke="#8c7210" stroke-width="1" shape-rendering="crispEdges"/>
<path d="M6.0 616.0 L11.0 622.0 L13.5 632.0 L11.0 644.0 L14.8 659.0" stroke="#8c7210" stroke-width="1" shape-rendering="crispEdges"/>
<path d="M628.4 423.3 L638.8 428.4 L646.5 441.4 L664.6 451.7 L685.3 460.8 L708.6 466.0 L734.5 469.8 L760.3 475.0 L781.0 482.7 L799.0 486.6 L806.0 493.0" stroke="#8c7210" stroke-width="1" shape-rendering="crispEdges"/>
<path d="M806.0 534.5 L801.7 544.8 L799.0 565.5 L791.4 581.0 L786.2 594.0 L784.9 610.0 L784.0 620.0 L787.0 631.0 L781.4 645.0 L778.5 659.3 L784.0 667.8 L798.4 670.7 L804.0 682.0 L805.4 696.0" stroke="#8c7210" stroke-width="1" shape-rendering="crispEdges"/>
<path d="M600.0 378.4 L605.0 391.4 L613.0 410.0" stroke="#8c7210" stroke-width="1" shape-rendering="crispEdges"/>
<path d="M-10.0 706.0 L5.1 706.0 L8.1 704.0 L9.6 702.8 L12.2 701.5 L14.0 700.6 L16.6 700.3 L20.5 697.7 L22.5 699.5 L25.3 700.5 L27.1 701.4 L28.1 703.8 L30.2 705.9 L29.1 708.3 L27.9 709.0 L29.5 710.0 L32.3 709.4 L35.3 707.8 L36.3 708.6 L39.7 707.9 L40.9 706.9 L43.6 706.5 L45.6 705.9 L46.7 707.9 L46.7 711.2 L47.6 712.5 L45.8 715.9 L44.2 717.2 L45.1 719.1 L48.2 720.7 L48.6 722.7 L51.7 724.0 L54.7 723.9 L57.3 724.1 L58.8 725.1 L61.2 726.7 L64.0 727.9 L66.0 728.8 L68.5 728.5 L71.2 727.0 L71.4 729.1 L71.8 731.7 L71.0 734.8 L69.4 735.2 L68.6 737.8 L66.3 739.0 L65.4 741.2 L65.8 744.0 L68.0 745.7 L69.0 748.3 L72.0 751.3 L73.5 752.0 L75.3 750.3 L74.5 747.1 L76.4 745.4 L76.0 743.0 L78.5 743.4 L81.3 743.7 L83.8 743.0 L85.7 741.6 L86.6 745.0 L86.2 747.8 L87.9 749.8 L89.7 749.4 L93.9 748.6 L95.3 751.0 L96.5 752.3 L98.9 755.4 L101.4 754.9 L103.9 753.8 L106.6 753.0 L106.8 755.7 L107.9 758.0 L109.7 755.5 L110.3 754.5 L111.3 752.4 L113.6 749.9 L115.4 748.4 L117.7 746.9 L119.0 746.2 L121.0 745.0 L123.7 747.1 L125.7 747.1 L125.4 745.8 L127.4 743.5 L128.1 740.8 L130.3 744.0 L131.8 745.1 L133.8 748.2 L136.3 747.6 L138.4 745.4 L140.6 744.2 L142.7 745.7 L144.8 747.5 L145.8 748.1 L148.4 750.8 L148.6 747.9 L149.1 745.6 L149.5 742.2 L149.9 741.1 L149.2 737.4 L150.3 734.7 L149.2 733.7 L149.2 731.3 L148.8 727.9 L148.3 726.2 L150.5 722.6 L150.2 721.1 L150.5 717.6 L151.7 715.8 L154.1 717.6 L155.7 718.9 L157.6 720.0 L160.5 721.4 L161.6 722.7 L164.0 725.5 L164.4 726.7 L167.6 727.5 L169.1 729.9 L169.4 730.2 L171.2 731.5 L173.1 732.6 L176.3 734.4 L178.6 735.9 L180.8 736.9 L182.1 738.6 L184.6 740.2 L185.3 741.9 L187.5 743.9 L190.4 744.1 L191.1 747.0 L193.7 747.0 L195.6 748.1 L198.5 749.4 L200.4 751.3 L202.1 752.5 L203.4 753.3 L206.0 753.7 L207.5 756.6 L210.3 757.9 L212.4 758.1 L215.5 758.5 L217.3 758.5 L219.6 759.0 L222.5 758.5 L225.0 759.0 L228.0 759.2 L230.3 759.2 L232.2 758.7 L234.9 759.4 L238.0 759.6 L239.7 759.6 L241.2 759.5 L240.1 756.3 L238.5 754.7 L235.1 754.9 L233.1 752.8 L231.6 750.3 L230.5 748.9 L229.2 746.2 L228.2 744.7 L226.5 742.5 L224.9 743.1 L221.5 743.5 L219.7 744.3 L217.2 742.9 L214.6 741.7 L213.3 741.5 L211.5 740.4 L208.3 739.4 L206.5 737.8 L203.7 737.1 L202.7 734.2 L198.8 733.4 L197.4 733.4 L195.0 731.7 L193.4 730.5 L192.0 727.6 L190.2 725.7 L188.8 724.2 L186.7 722.9 L184.9 721.5 L184.8 719.2 L182.1 716.9 L185.0 715.1 L186.3 712.1 L188.4 709.9 L188.8 708.8 L191.0 706.2 L193.0 705.2 L194.1 703.5 L195.5 701.9 L196.4 700.4 L199.3 699.3 L200.5 697.3 L202.9 694.7 L203.4 692.1 L204.1 690.7 L205.2 686.5 L205.2 684.5 L206.7 681.2 L205.6 679.9 L204.6 676.3 L205.0 677.5 L203.3 680.4 L201.4 682.9 L200.6 683.2 L199.1 685.3 L197.4 688.2 L196.7 690.4 L196.6 692.5 L192.7 692.6 L188.8 693.6 L186.5 692.7 L184.5 691.2 L183.2 690.3 L180.7 688.9 L178.7 687.9 L177.0 685.9 L176.3 681.4 L178.8 680.2 L181.3 681.2 L183.0 681.3 L186.2 681.0 L187.9 678.5 L189.8 676.4 L191.6 675.6 L192.7 672.2 L193.8 671.1 L196.0 669.8 L198.9 668.0 L199.9 668.3 L203.0 667.9 L204.6 666.1 L208.1 664.6 L210.6 662.9 L211.6 660.9 L213.3 660.3 L215.6 659.0 L218.4 656.7 L213.8 655.0 L214.4 650.1 L216.6 651.3 L218.9 651.0 L220.0 652.4 L221.4 656.6 L224.4 654.4 L226.3 653.6 L229.4 652.3 L230.6 651.1 L233.2 651.5 L235.8 649.7 L237.8 648.6 L240.4 646.5 L241.9 646.9 L244.7 646.6 L247.3 646.7 L249.3 646.4 L253.5 646.2 L254.9 649.0 L256.7 650.2 L260.6 651.5 L262.9 650.4 L264.1 650.3 L266.4 649.5 L268.2 649.3 L270.4 651.2 L273.3 652.5 L275.0 652.5 L278.1 653.4 L280.1 655.2 L282.3 653.2 L284.0 651.0 L285.5 649.5 L287.5 648.6 L290.2 648.8 L293.6 648.1 L296.0 648.8 L298.0 650.5 L299.2 651.0 L301.7 652.8 L303.9 654.3 L304.0 652.2 L305.5 648.3 L305.2 646.9 L304.8 643.7 L306.6 641.8 L307.0 640.6 L306.9 636.5 L306.4 635.3 L307.7 631.8 L307.7 630.5 L308.1 627.7 L310.9 627.4 L311.1 624.4 L312.0 622.2 L314.9 624.3 L317.7 625.5 L318.7 627.9 L319.2 629.6 L320.0 633.4 L321.3 635.5 L321.2 637.8 L320.9 639.6 L321.2 642.1 L322.3 644.1 L322.1 647.7 L326.3 648.7 L328.0 651.8 L329.3 653.0 L330.0 655.0 L332.5 656.5 L333.3 658.1 L336.0 658.8 L337.3 658.0 L339.8 658.5 L342.7 657.2 L345.2 657.5 L347.9 656.7 L345.8 655.0 L344.3 654.3 L346.2 653.5 L348.2 653.2 L349.9 652.5 L353.5 653.4 L354.4 651.5 L357.4 650.4 L357.9 648.0 L358.3 649.5 L360.4 652.1 L361.4 654.4 L362.8 654.3 L364.2 652.7 L366.8 652.4 L368.8 651.8 L372.1 651.3 L372.8 649.8 L375.2 647.6 L375.8 644.8 L376.4 642.8 L376.4 640.6 L375.2 637.5 L374.3 635.8 L374.8 632.7 L379.4 634.2 L379.8 636.0 L380.3 639.4 L381.0 640.9 L382.7 639.2 L384.8 637.8 L386.4 635.6 L387.6 633.1 L388.1 630.3 L388.1 632.7 L388.9 634.8 L390.6 638.2 L391.9 639.2 L394.3 642.0 L396.4 643.2 L394.1 644.2 L391.4 644.9 L388.8 646.4 L386.9 647.0 L384.3 648.5 L381.1 650.6 L383.6 649.9 L385.2 649.2 L387.9 649.5 L390.7 649.8 L392.9 649.2 L394.7 648.7 L397.5 648.6 L398.7 648.1 L401.1 648.9 L404.7 648.7 L406.5 648.2 L408.1 648.2 L410.7 647.4 L412.1 647.0 L416.0 647.1 L417.8 647.2 L418.9 644.2 L420.3 641.3 L422.8 641.8 L425.8 640.5 L427.1 640.1 L430.2 641.5 L433.3 643.5 L435.8 643.1 L438.2 641.8 L439.8 641.9 L442.2 640.7 L443.2 639.8 L446.1 640.2 L447.6 639.6 L450.3 640.4 L452.6 642.2 L453.1 644.3 L452.5 646.9 L451.1 649.9 L448.4 649.4 L447.3 649.2 L445.1 650.2 L442.7 649.1 L440.8 648.5 L440.8 652.9 L442.4 653.7 L444.1 653.0 L445.6 654.1 L448.5 655.4 L450.2 655.5 L452.9 657.0 L454.7 657.4 L456.5 658.0 L458.9 659.3 L462.0 660.7 L463.5 661.5 L466.7 662.9 L467.3 660.5 L470.3 658.8 L471.2 658.7 L473.0 656.5 L475.7 656.2 L478.2 658.0 L480.7 657.5 L482.5 656.1 L486.1 654.9 L488.7 653.7 L490.3 653.6 L493.1 653.0 L496.2 652.9 L497.3 656.7 L493.8 657.1 L492.2 658.8 L489.3 658.5 L488.8 660.8 L487.4 663.7 L487.0 666.7 L487.6 668.5 L490.9 670.6 L492.9 671.7 L493.7 673.7 L495.7 675.0 L498.4 676.2 L500.3 677.5 L502.7 678.1 L504.4 680.4 L507.0 681.3 L507.6 683.1 L506.3 684.2 L504.2 685.5 L501.6 686.6 L503.6 688.7 L505.7 689.5 L507.8 692.3 L509.2 696.0 L509.2 698.2 L509.0 701.4 L509.8 702.6 L509.7 704.3 L511.4 707.2 L512.4 709.1 L514.5 706.8 L514.0 703.3 L513.4 700.1 L512.4 697.2 L514.3 699.6 L515.9 702.4 L516.3 704.3 L516.5 705.6 L517.5 708.7 L517.3 711.2 L519.3 709.8 L521.7 709.7 L523.6 708.9 L525.6 709.3 L529.3 710.2 L531.7 710.6 L533.3 710.8 L536.6 708.9 L538.0 706.3 L540.3 704.9 L542.5 703.8 L544.4 704.1 L547.2 703.6 L547.1 705.8 L549.4 708.7 L550.4 706.6 L553.4 706.9 L554.2 705.2 L556.7 704.2 L559.5 703.1 L560.8 702.1 L563.1 701.2 L564.3 699.2 L567.1 697.8 L568.9 696.1 L570.1 695.9 L572.9 695.8 L575.1 694.2 L577.0 693.8 L579.4 692.8 L581.6 691.5 L583.8 690.9 L585.3 689.7 L584.4 687.4 L583.5 685.7 L586.0 683.6 L587.8 682.2 L588.7 679.7 L591.0 679.8 L593.7 678.0 L595.4 676.9 L597.1 676.6 L600.3 674.5 L602.4 674.9 L605.4 674.4 L607.5 673.5 L610.3 674.3 L613.0 674.8 L615.4 677.0 L615.9 678.7 L617.9 679.5 L621.2 680.5 L622.0 681.2 L623.7 682.9 L626.3 684.6 L628.1 685.7 L629.7 686.3 L631.4 687.6 L633.1 689.3 L636.5 691.9 L638.1 693.0 L639.7 695.1 L640.0 696.5 L642.0 697.8 L642.8 700.8 L644.8 701.9 L645.1 704.3 L647.8 707.2 L648.5 709.0 L650.2 709.8 L651.9 712.1 L652.7 714.5 L653.5 716.2 L655.6 717.7 L657.3 718.3 L656.8 720.6 L658.0 722.5 L658.2 725.0 L660.2 726.7 L661.5 729.0 L663.4 729.3 L664.4 732.1 L666.5 732.9 L668.8 733.6 L668.8 735.8 L671.2 739.1 L672.9 741.5 L674.1 742.3 L675.4 744.3 L676.5 745.8 L679.2 747.1 L681.3 749.3 L682.4 749.9 L681.9 752.7 L683.3 754.6 L683.5 757.4 L683.8 759.8 L683.6 761.2 L686.8 760.7 L689.1 759.1 L690.0 756.8 L692.7 756.5 L695.7 758.2 L697.8 758.0 L700.2 758.5 L700.7 760.4 L702.1 763.8 L701.5 765.7 L702.9 767.0 L703.9 770.2 L704.8 772.2 L705.5 774.7 L707.9 777.0 L708.7 778.5 L710.4 779.9 L712.9 782.2 L712.7 784.7 L712.1 787.0 L713.1 789.9 L712.4 792.2 L712.0 830.0 L-10.0 830.0 Z" fill="#02426a" stroke="#000" stroke-width="1.3"/>
<path d="M12.3 718.0 L19.7 717.0 L29.6 720.7 L38.2 722.0 L34.5 728.0 L28.3 734.0 L22.0 728.0 L14.8 723.0 Z" fill="#5d504a" stroke="#000" stroke-width="1"/>
<path d="M205.0 677.0 L210.0 673.0 L218.0 671.5 L226.0 672.5 L229.0 680.0 L227.0 690.0 L222.0 700.0 L212.0 712.0 L203.0 722.0 L194.0 728.0 L186.0 722.0 L183.0 716.0 L190.0 708.0 L197.0 699.0 L202.0 690.0 L204.0 683.0 Z" fill="#5d504a" stroke="none"/>
<path d="M222.5 696.0 L222.3 695.4 L221.3 695.8 M215.6 682.0 L216.6 680.3 L215.8 682.2 L217.9 684.3 L216.3 682.1 M205.5 701.4 L207.4 702.7 L206.1 701.2 L204.0 700.2 L203.4 702.2 M199.8 698.8 L200.3 697.3 L199.0 696.9 M226.7 679.3 L225.3 677.7 L223.6 677.4 L225.0 679.4 M207.6 706.5 L208.2 706.9 L208.6 707.1 L206.6 708.4 M218.5 703.4 L219.8 702.9 L221.6 700.8 L221.4 699.3 L223.5 701.1 M208.4 708.6 L210.3 708.6 L211.8 709.4 L213.5 707.7 M186.1 720.2 L186.6 722.1 L187.0 723.8 M205.5 691.4 L206.8 691.7 L208.1 690.4 L210.2 689.7 L208.1 691.4 M196.8 701.7 L197.3 699.9 L196.4 701.1 L197.3 699.8 M217.9 701.2 L217.7 701.7 L217.5 700.8 L219.5 701.8 M215.6 680.3 L214.0 678.2 L216.2 680.0 L217.9 679.0 M196.5 711.0 L195.5 711.6 L195.5 713.3 M210.9 699.1 L209.2 698.2 L207.5 699.0 L208.5 698.1 M218.2 675.0 L219.9 673.5 L220.4 675.6 L220.6 675.9 M219.7 674.4 L218.0 673.3 L218.7 674.9 L217.0 672.8 L215.2 671.4 M222.1 686.7 L221.4 684.9 L222.0 683.4 L220.7 683.6 L220.7 683.5 M216.5 673.1 L218.5 672.1 L219.6 670.0 L218.0 671.7 L216.8 671.2 M212.0 684.7 L210.5 686.9 L211.8 684.9 M207.3 702.8 L206.7 703.9 L207.1 704.3 L206.5 706.3 M202.3 706.2 L200.4 704.7 L202.3 702.9 L203.4 704.2 L201.6 702.8 M209.8 679.6 L210.2 681.5 L208.1 680.3 L210.1 680.7 L209.1 682.6 M200.1 698.6 L202.1 697.2 L202.2 698.7 L201.6 699.1 L200.0 698.9 M217.7 677.1 L215.9 676.0 L217.1 677.5 M206.4 686.9 L205.2 689.0 L204.4 689.5 L202.7 690.2 L200.8 691.6 M194.6 708.7 L196.3 710.6 L198.0 710.9 L196.4 709.3 L196.9 710.7 M216.8 684.5 L217.6 686.2 L215.8 684.2 M202.3 714.9 L203.2 713.8 L203.5 715.3 L203.7 715.8 M199.9 714.3 L199.1 713.3 L197.0 714.6 L197.8 715.2 M206.6 718.0 L207.5 716.6 L209.6 717.3 L208.3 718.8 L209.5 720.8 M198.3 707.8 L196.9 709.0 L195.6 709.0 M185.9 717.9 L186.2 717.8 L185.0 715.9 L185.0 714.0 L183.0 714.7 M217.7 673.0 L219.2 674.7 L218.1 674.2 M202.4 710.8 L204.4 712.3 L205.3 711.2 M193.1 722.3 L191.5 724.0 L190.5 722.4 L189.8 721.5 M215.0 674.5 L215.6 675.0 L215.5 674.3 L217.5 673.9 M219.5 699.2 L218.6 701.3 L216.7 700.6 L218.2 700.2 L219.3 700.2 M220.9 698.0 L219.2 698.0 L220.5 697.4 L222.4 697.3 M207.5 707.8 L209.2 707.9 L208.8 707.2 M200.6 717.2 L200.5 716.6 L199.4 718.2 L199.6 717.7 M215.4 696.5 L214.0 698.1 L214.6 697.7 L214.8 698.2 L216.5 698.7 M197.6 718.2 L196.6 717.2 L197.1 716.7 M226.6 678.0 L228.2 679.7 L226.9 681.2 L225.0 681.8 M225.1 683.4 L225.4 685.5 L223.5 686.7 M207.8 685.5 L205.9 686.7 L207.4 684.7 L209.1 683.3 L210.5 683.8 M211.9 705.2 L212.5 705.9 L212.4 706.9 M207.3 714.7 L206.0 714.8 L208.2 714.2 M192.4 711.6 L192.8 709.7 L194.2 709.5 L194.6 709.9 M190.0 717.5 L189.3 718.0 L188.8 719.3 M226.1 673.8 L226.9 675.7 L225.5 676.4 M204.6 713.6 L206.1 714.4 L206.1 712.6 L207.8 710.7 M215.5 685.8 L217.6 684.4 L215.5 684.1 L214.8 684.1 M222.7 689.7 L222.8 690.3 L221.4 689.3 L219.2 688.5 L220.1 687.7 M194.3 721.6 L192.3 721.6 L192.5 720.7 L192.6 722.8 M213.4 672.8 L213.9 670.9 L216.0 671.7 L217.6 671.6 L217.8 671.5 M188.9 714.9 L189.6 714.4 L188.5 715.1 L189.5 716.0 L191.0 716.4 M206.1 683.0 L204.4 684.3 L202.3 683.4 L201.4 684.7 L200.8 686.4 M214.3 696.3 L213.9 694.8 L213.9 696.7 L215.6 695.6 L214.7 697.3 M198.0 701.1 L198.1 700.4 L195.9 699.8 L197.7 699.3 L199.1 698.2 M217.7 684.7 L217.3 682.7 L216.8 682.0 L215.1 684.2 M194.2 710.5 L196.1 709.6 L198.1 710.5 L198.4 709.1 M216.3 692.7 L216.9 691.6 L218.1 693.4 L219.3 694.2 M220.3 693.2 L218.3 695.2 L218.9 693.0 L218.1 693.6 M189.8 723.2 L188.0 721.1 L189.2 722.3 L190.1 723.5 L191.3 724.5 M226.6 678.1 L228.5 679.7 L227.0 679.5 M219.7 688.1 L219.2 686.9 L221.0 685.9 L221.0 686.5 M203.9 705.2 L201.8 703.4 L202.2 704.5 L201.0 706.5 L203.0 706.7 M218.7 678.1 L217.8 679.9 L216.5 681.5 L216.6 679.6 M195.9 709.4 L194.0 710.7 L195.6 712.9 L195.3 712.7 L194.8 714.1 M214.2 679.7 L214.4 680.2 L214.1 679.9 L212.5 680.4 M209.5 714.4 L211.2 715.0 L213.3 715.5 L212.1 715.5 L210.1 714.4 M199.1 701.4 L197.6 701.4 L196.7 703.0 L196.4 705.1 M216.2 689.0 L216.9 690.1 L219.0 690.0 L218.0 690.7 M201.1 711.7 L199.7 710.7 L200.6 712.5 L201.0 710.8 M208.3 695.2 L209.3 694.8 L207.1 696.3 M201.4 700.3 L202.4 702.5 L200.7 701.6 L199.7 701.4 L201.3 703.5 M211.8 672.9 L209.6 671.8 L211.1 673.3 L211.8 674.5 M217.6 685.1 L218.3 683.3 L220.4 684.6 L219.8 686.5 M203.3 696.3 L201.9 694.7 L201.6 695.0 M202.8 713.0 L201.1 715.1 L198.9 714.2 L197.0 715.7 M211.1 699.7 L212.3 699.7 L213.7 701.6 L211.9 700.0 L211.3 699.7 M222.1 673.3 L222.8 673.7 L221.2 671.8 L221.7 670.9 L222.9 669.3 M219.5 674.5 L219.4 676.5 L221.3 677.9 M217.7 700.9 L218.5 698.7 L218.8 700.8" stroke="#02426a" stroke-width="2.2" stroke-linecap="round"/>
<path d="M200.4 700.8 L201.9 702.2 L203.2 703.2 L203.1 704.8 L202.3 706.6 M204.8 686.9 L206.8 687.1 L205.4 688.3 L205.4 688.9 M221.6 697.5 L222.4 698.2 L221.4 696.3 M218.5 698.7 L216.7 698.2 L216.3 699.3 M214.0 672.6 L214.4 671.1 L214.8 672.6 M190.2 713.0 L188.1 712.3 L190.1 711.0 M222.0 697.2 L223.2 697.1 L222.7 696.1 M208.6 676.3 L208.0 677.7 L206.0 678.6 L204.3 680.7 L202.9 682.0 M196.6 702.7 L197.2 702.6 L198.8 702.7 L198.0 703.8 M192.7 726.9 L193.9 726.4 L193.8 724.9 L193.6 724.7 L193.4 725.3 M219.9 674.5 L218.5 675.4 L217.4 677.5 M189.1 717.1 L190.4 719.2 L192.0 718.8 M224.4 689.0 L223.6 687.0 L222.6 688.8 L222.9 687.1 M208.9 693.8 L208.0 693.8 L208.6 692.7 L210.3 694.0 L211.3 692.6 M213.3 673.1 L214.4 673.0 L215.5 672.9 L214.5 672.4 L215.3 673.4 M205.6 678.8 L207.6 678.2 L205.7 679.5 L207.1 678.8 M185.0 719.2 L183.7 717.7 L185.3 718.3 M219.2 690.9 L221.2 691.1 L220.4 689.7 L222.5 689.6 M215.3 680.2 L216.0 681.3 L217.8 682.6 L217.4 684.4 L215.3 685.7 M201.3 699.9 L202.8 699.6 L200.9 697.6 M205.6 677.0 L206.1 677.3 L207.4 678.7 M220.7 674.7 L221.5 672.6 L221.0 673.5 M191.3 712.3 L193.4 712.9 L191.5 714.5 L190.8 715.1 L192.6 715.2 M226.1 685.1 L225.2 682.9 L226.8 681.6 L225.9 683.6 L226.7 682.8 M193.8 717.4 L195.7 719.1 L196.7 718.9 L196.4 720.4 L196.3 720.0 M213.0 681.1 L214.8 679.2 L213.0 679.4 M205.9 711.7 L206.3 711.6 L208.1 712.3 L206.5 713.7 L205.2 711.7 M199.1 710.9 L200.9 710.3 L201.7 708.8 L200.3 710.7 L202.1 711.3 M197.1 714.1 L199.2 714.7 L201.0 712.6 L202.2 710.4 L200.2 708.2 M225.8 686.2 L225.9 687.1 L226.7 687.0 L227.7 685.9 M197.8 716.6 L196.8 718.7 L197.2 718.9 L196.7 718.0 L197.7 718.3 M210.3 713.0 L211.7 712.6 L209.7 714.3 M223.0 692.3 L222.5 691.4 L222.3 689.6 L220.4 689.8 M194.3 720.6 L195.9 722.4 L193.9 724.3 M213.4 679.2 L212.6 681.1 L212.8 682.3 L212.4 682.1 L212.0 681.6 M216.9 694.4 L219.1 695.0 L216.9 696.1 L216.4 694.1 L215.1 695.9 M212.0 703.5 L212.1 704.3 L213.4 706.3 L211.4 705.2 M218.2 704.1 L217.6 705.4 L219.1 707.3 M208.3 680.9 L208.8 681.6 L209.5 682.9 L208.8 680.8 M201.6 719.2 L199.6 720.9 L199.9 720.5 M202.0 712.4 L203.7 710.4 L203.0 709.4 L205.2 708.2 M186.2 720.3 L184.6 718.3 L186.7 717.7 M201.3 702.9 L202.0 704.3 L201.9 703.4 L200.5 704.5 L201.4 704.6 M225.4 686.8 L224.0 688.7 L224.5 688.2 L225.5 689.6 M200.8 712.1 L198.8 712.7 L199.3 711.8 L198.6 712.1 M221.9 672.6 L223.4 673.3 L223.7 673.8 L224.2 673.6 M216.0 697.1 L217.0 696.0 L216.0 695.4 L215.7 694.1 M212.3 688.9 L214.1 690.3 L214.7 690.0 M216.8 696.8 L215.1 696.7 L216.1 697.0 L214.7 696.6 L213.1 695.1 M188.5 715.2 L190.3 715.3 L190.6 716.8 L191.5 716.0 M212.7 705.3 L214.1 706.7 L214.3 708.3 M226.1 687.7 L224.9 688.7 L222.9 687.4 L221.3 689.4 M214.3 675.5 L213.1 674.4 L214.8 673.1 M213.8 695.7 L214.3 694.1 L212.7 696.3 L211.9 697.8 M202.7 714.6 L200.7 714.8 L199.6 716.0 M227.5 679.6 L228.1 678.4 L227.3 679.4 L226.8 679.2 L227.4 681.1 M198.2 707.7 L197.0 707.7 L197.0 707.0 M200.3 694.8 L199.3 696.0 L201.1 697.3 L203.0 696.4 L202.0 695.8 M206.4 678.1 L208.6 679.7 L209.3 677.7 L210.9 677.1 M220.8 678.8 L218.7 679.0 L217.7 679.5 L215.8 678.8 L216.1 679.4 M212.0 681.2 L211.2 682.9 L209.0 683.7 L208.6 685.3 M191.5 717.3 L190.7 718.6 L192.5 719.9 L190.8 719.0 L189.5 717.5 M207.0 685.0 L205.3 683.4 L205.0 683.0 M214.0 692.7 L212.5 692.2 L211.4 694.3 L210.2 694.9 L212.4 695.6 M199.4 715.1 L201.4 713.6 L200.0 711.7 L202.0 710.9 M212.2 682.9 L212.5 683.6 L213.2 685.4 L213.3 684.5 L214.6 685.3 M199.6 711.9 L200.4 711.3 L202.0 710.9 L201.3 711.9 L199.8 712.2 M202.5 697.3 L202.7 697.8 L202.7 696.0 L202.2 695.0 M212.4 681.0 L212.6 682.0 L210.7 683.6 L210.2 683.7 M210.1 687.9 L208.3 688.7 L207.0 688.1 M195.8 715.4 L194.1 716.2 L193.2 718.0 L191.9 719.1 L193.5 718.8 M207.3 708.1 L205.5 706.3 L207.6 706.7 L209.5 706.5 L210.9 707.9 M188.9 716.8 L188.7 714.7 L190.1 716.1 L189.0 717.3 L191.1 717.5 M211.4 700.1 L210.6 700.8 L210.2 698.7 L211.3 698.9 M217.5 684.6 L219.6 682.5 L219.5 681.3 L220.4 680.9 L220.7 680.0 M214.2 689.1 L215.4 689.7 L215.5 689.2 L217.6 691.1 L218.3 691.3 M197.2 714.0 L196.8 713.3 L196.7 715.5 M213.5 704.2 L214.2 703.5 L216.2 702.7 M211.0 688.5 L210.7 687.9 L212.2 687.8 L212.8 688.5 M214.8 677.8 L214.0 679.6 L215.4 681.4 L215.6 679.9 L214.7 680.2 M207.6 716.3 L206.4 718.3 L204.4 716.9 L202.7 714.8 M208.0 676.0 L209.8 677.0 L207.9 676.8 L210.1 676.3 M216.2 689.3 L216.7 689.2 L217.3 690.8 L218.9 688.7 M214.0 680.0 L214.9 678.1 L214.7 677.9 M203.2 705.7 L203.2 703.6 L203.1 705.3 L201.1 705.6 M209.8 706.6 L209.9 706.4 L210.2 706.2 L210.8 707.0 L209.4 705.1 M215.6 681.6 L213.7 680.4 L211.6 679.0 M207.8 687.7 L208.0 686.2 L206.1 686.2 L208.1 684.9 L206.7 683.1 M195.8 705.2 L195.3 706.4 L195.4 704.8 L194.0 705.8 M220.7 682.3 L221.6 683.5 L222.7 684.3 L220.6 684.0 L222.0 683.4 M226.2 689.9 L227.4 689.6 L225.2 690.3 L227.4 691.5 M210.2 677.6 L210.5 677.7 L208.9 679.8 L207.3 677.9 L207.6 676.0 M214.7 699.8 L214.4 699.1 L212.7 697.4 M202.3 690.5 L203.2 689.1 L202.3 687.9 L203.6 685.7 L204.2 685.4 M200.5 708.7 L199.7 706.5 L199.9 707.2 L200.1 708.4 L199.1 708.8 M211.0 711.8 L211.3 712.4 L211.6 711.5 M194.5 708.2 L194.7 708.9 L193.4 710.3 L191.6 710.7 M215.1 698.0 L213.9 699.5 L213.6 700.2 L211.8 701.2 L212.1 701.5 M214.1 681.5 L215.3 680.4 L217.0 679.6 L218.4 679.2 M214.4 681.2 L212.3 680.8 L210.4 678.7 L209.2 678.3 M204.9 692.1 L205.4 693.5 L206.0 692.1 L207.2 690.6 L206.2 689.2 M194.9 704.3 L193.8 704.6 L195.5 702.8 L194.1 702.4 M200.3 697.5 L200.4 696.8 L202.3 696.9 L204.4 696.6 M205.2 699.1 L203.4 701.0 L204.7 702.1 L204.1 703.3 M204.1 715.0 L204.4 714.7 L204.0 716.3 M196.7 725.3 L195.6 725.9 L193.6 724.9 L191.5 723.1 L191.7 722.5 M197.3 710.8 L195.8 709.9 L193.7 709.3 L192.4 711.1 M210.4 711.6 L210.6 711.9 L209.2 713.1 L208.5 715.0 L207.1 714.5 M199.1 709.7 L201.3 708.2 L201.2 709.4 M212.1 700.5 L213.9 699.5 L215.3 698.5 L217.2 699.5 M210.7 692.6 L211.8 692.0 L210.1 692.9 M194.4 720.1 L196.1 719.0 L195.7 718.1 M222.7 676.3 L223.6 675.5 L224.0 674.3 L224.2 675.2 M221.7 679.8 L221.6 679.2 L220.8 679.2 M209.1 689.7 L208.9 689.2 L207.9 690.5 M211.9 675.1 L210.0 676.4 L209.7 676.5 L211.5 677.0 M213.4 704.9 L212.7 707.0 L213.4 706.0 L211.7 706.4 M223.5 695.1 L224.8 697.3 L226.7 699.2 L225.8 699.8 L223.6 699.5 M195.1 714.2 L196.7 714.5 L197.6 713.5 M219.4 678.9 L219.1 677.7 L219.1 678.2 M210.2 713.1 L208.2 712.6 L207.0 710.8 L208.0 709.7 M209.9 707.0 L209.0 708.2 L207.0 707.2 M205.9 677.6 L207.6 677.9 L209.1 676.1 M192.2 722.1 L190.7 721.8 L188.5 723.6 L190.7 722.6 M216.3 692.5 L215.8 690.4 L214.2 691.8 M220.9 688.7 L222.6 688.5 L223.9 689.9 L224.0 690.0 L222.9 690.2 M213.9 708.1 L213.4 707.8 L212.1 709.1 M223.8 689.7 L223.1 690.5 L221.2 691.5 L220.2 690.8 L218.2 690.1 M209.1 705.1 L209.0 703.2 L207.8 702.9 L208.9 702.3 L209.0 701.1 M223.9 674.0 L224.4 674.3 L223.0 675.4 L223.3 674.5 M226.9 690.1 L228.1 690.1 L229.4 690.8 M201.2 702.3 L199.2 700.9 L198.9 699.7 M195.8 717.3 L195.4 717.0 L194.7 715.7 L196.3 716.5 L196.1 715.8 M204.5 713.5 L204.2 712.4 L205.8 712.3 M216.9 698.6 L216.9 697.1 L217.2 697.5 L219.3 699.5 L219.2 700.5 M213.9 674.7 L212.5 676.4 L211.6 676.2 L211.6 674.7 L210.8 676.4 M211.1 694.9 L212.7 696.0 L212.0 696.7 L214.1 697.4 M206.9 706.9 L206.7 705.5 L206.6 705.6 M203.5 692.3 L205.0 691.6 L203.7 691.5 L205.1 689.7 M193.1 713.4 L192.9 711.4 L193.6 711.3 M209.3 687.2 L209.2 689.3 L207.2 689.0 M227.0 684.7 L226.7 686.5 L227.9 687.5 M218.6 693.9 L220.2 692.1 L218.1 691.3 M219.0 678.5 L216.8 676.9 L217.9 675.3 M199.7 710.3 L201.7 708.9 L202.4 708.1 L201.3 707.2 L199.9 706.9 M202.8 704.4 L204.6 704.8 L202.8 706.1 M200.1 700.7 L202.0 701.4 L201.3 701.0 L200.6 699.8 M193.1 706.8 L194.8 707.4 L196.2 707.0 L194.5 706.2 M209.0 714.6 L207.9 716.2 L206.5 715.0 L205.9 713.5 M216.0 696.1 L215.9 694.1 L216.3 696.2 L217.2 695.1 M222.1 694.5 L220.7 693.8 L220.9 695.0 L221.4 693.1 L220.0 691.1 M196.3 706.6 L194.2 705.3 L195.8 704.3 L195.2 705.3 M207.6 692.3 L208.1 690.4 L208.2 688.5 L208.8 690.5 L208.8 690.6 M215.5 702.4 L214.2 700.2 L215.8 698.2 M197.4 719.6 L196.0 719.0 L196.1 718.5 M211.3 699.9 L210.8 702.1 L209.8 702.9 L211.9 702.6 M218.4 687.5 L217.2 689.7 L216.4 691.9 L217.1 691.0 M218.3 700.6 L220.2 699.3 L222.1 698.8 L223.2 697.1 L221.9 696.6 M214.3 679.8 L212.9 681.8 L213.3 681.9 L214.8 683.5 L213.5 684.3 M198.6 703.3 L198.6 702.0 L198.3 700.7 L197.3 700.1 L199.0 699.4 M211.6 676.1 L210.8 674.1 L212.6 672.4 L211.0 674.4 L209.1 674.4 M215.5 684.5 L217.4 683.0 L215.8 684.1 L214.1 683.8 L214.8 682.7 M210.2 711.2 L209.7 712.3 L211.3 713.2 L210.7 713.8 L209.6 714.6 M197.4 714.6 L197.1 713.3 L197.8 713.0 M219.2 681.7 L221.2 683.4 L219.4 684.1 L217.5 681.9 M187.8 718.3 L189.1 719.5 L187.1 718.8 M191.5 723.7 L190.1 723.3 L191.8 724.2 L192.2 725.5 L190.1 723.6 M203.3 686.9 L204.5 685.9 L202.7 687.5 M201.6 705.0 L202.2 705.8 L203.6 705.2 L203.7 705.2 L201.6 704.0 M219.5 694.9 L221.2 692.9 L220.1 691.5" stroke="#000" stroke-width="1.35" stroke-linecap="round"/>
<path d="M153.2 726.4 L151.2 728.4 L152.0 726.9 M163.7 737.0 L163.2 736.6 L164.1 735.5 L165.7 737.4 L166.8 737.4 M158.6 726.8 L158.0 727.2 L156.6 726.8 M187.1 746.5 L186.6 746.2 L187.9 746.6 L189.7 746.6 L191.1 748.1 M186.5 748.0 L185.5 748.9 L185.0 749.3 L186.0 748.4 L186.4 748.4 M157.1 738.9 L158.4 739.6 L157.3 741.0 L157.1 742.1 M171.7 747.1 L173.7 748.1 L173.2 750.0 L172.0 750.9 L173.0 750.3 M152.3 731.4 L153.4 730.8 L152.1 732.0 L151.5 733.3 M165.2 735.6 L164.1 734.3 L165.5 733.5 M181.4 749.3 L181.6 748.8 L181.3 749.7 L181.2 751.2 M156.8 734.9 L157.3 735.8 L155.8 736.3 L154.2 736.2 L156.3 737.7 M163.8 743.8 L163.5 745.8 L163.0 745.0 L162.5 746.3 L161.7 748.4 M164.3 742.6 L163.0 741.8 L163.7 741.0 L163.8 740.3 L162.0 738.4 M159.8 728.3 L158.2 727.8 L156.6 727.1 L155.3 727.5 M153.4 728.3 L151.8 730.3 L153.2 731.0 L151.9 733.0 L149.8 732.7 M186.0 751.1 L187.9 752.6 L187.9 753.5 L186.1 752.9 L188.2 754.0 M159.7 724.5 L159.8 724.5 L158.1 725.9 L160.1 726.3 M169.2 739.6 L168.0 738.0 L170.1 736.6 M189.2 748.9 L191.4 747.2 L193.1 748.8 L191.9 747.9 M167.8 746.8 L169.1 746.8 L168.9 745.8 L169.4 747.5 L171.5 745.4 M192.0 750.2 L191.5 749.9 L193.3 747.8 M177.7 743.1 L178.8 744.9 L179.8 746.7 L177.8 747.5 M189.1 747.9 L191.2 745.9 L190.0 744.1 L190.8 744.0 M174.0 735.6 L172.5 735.4 L170.6 734.0 L170.8 734.8 M163.2 739.1 L165.4 739.2 L163.8 739.6 L163.1 739.2 L164.1 737.2 M176.7 749.1 L176.4 750.7 L175.5 749.8 L177.1 749.3 L177.2 750.6 M161.9 735.1 L162.5 736.5 L162.9 735.2 L162.2 733.2 M176.7 740.6 L178.2 739.0 L177.3 737.2 M154.5 732.1 L155.6 732.3 L155.2 733.2 L153.8 733.0 M187.5 746.0 L188.3 743.8 L187.6 741.9 L187.7 743.7 L189.1 743.5 M157.3 735.0 L155.1 733.5 L155.6 732.8 L156.4 732.6 L157.4 731.2 M161.2 750.0 L160.4 749.2 L160.2 751.1 L159.5 752.9 L161.3 752.5 M163.9 729.2 L162.1 728.4 L160.5 730.2 M164.5 743.7 L163.3 743.4 L162.1 741.3 L162.3 743.4 M180.6 749.9 L182.1 748.4 L183.2 748.1 L181.5 749.1 M154.1 722.8 L152.0 724.9 L150.8 724.1 L150.0 722.9 L150.0 721.0 M187.4 743.4 L185.4 742.6 L186.8 740.7 L186.3 741.9 M159.5 740.0 L161.2 738.7 L160.1 737.5 M187.5 744.1 L185.8 743.5 L184.8 745.6 L184.0 746.6 L182.7 744.9 M185.8 742.2 L184.3 741.8 L183.9 743.1 L184.9 743.1 L186.4 744.2 M171.4 746.0 L172.8 747.0 L174.7 748.4 L173.3 748.8 M184.5 751.1 L183.8 752.4 L181.6 752.6 L182.2 751.6 L181.7 753.3 M173.3 742.0 L173.7 742.0 L172.7 741.3 L174.6 741.8 L176.1 741.2 M163.4 741.3 L163.2 742.7 L164.7 743.2 M176.3 738.9 L176.4 739.4 L174.8 741.6 L175.5 742.1 M162.6 726.0 L163.5 727.0 L165.6 725.2 M164.8 749.4 L165.4 747.3 L166.5 746.5 L166.3 746.9 M163.2 734.8 L165.2 733.6 L163.7 735.7 M170.8 738.0 L168.7 737.6 L169.3 736.3 M157.1 721.7 L156.0 721.8 L157.8 720.1 M158.3 724.5 L157.9 724.3 L158.8 722.7 M161.8 726.7 L160.1 726.4 L159.2 727.4 L157.7 726.4 M175.0 735.6 L176.8 734.5 L176.4 736.1 L176.3 734.8 L175.4 734.2 M174.2 740.9 L174.9 741.2 L176.9 741.0 L178.5 741.4 L176.5 739.5 M160.7 748.2 L160.1 746.1 L162.1 744.7 M189.2 750.1 L190.3 749.3 L191.2 751.5 M166.9 729.9 L165.6 731.4 L166.4 731.7 L166.9 731.8 M160.2 741.5 L160.6 741.1 L159.4 743.2 L160.2 745.1 M154.4 719.9 L155.6 720.1 L155.2 722.2 L154.1 720.3 M173.0 737.9 L174.3 736.8 L173.0 734.6 L171.8 732.5 M163.5 729.4 L164.1 727.6 L166.2 729.0 L168.2 728.3 M162.9 733.6 L163.5 735.4 L163.4 733.6 L162.3 735.5 M166.3 736.6 L168.1 738.1 L168.0 738.4 L166.1 737.6 L165.5 738.7 M171.1 732.9 L169.8 734.0 L169.1 735.9 L167.8 735.7 L166.7 735.5 M161.1 726.1 L162.4 727.1 L161.3 727.6 L163.3 728.4 M175.8 746.6 L176.7 747.6 L175.1 747.6 L173.1 747.6 M155.2 733.7 L153.4 735.0 L152.3 733.8 L153.1 732.0 M167.5 741.7 L169.2 743.3 L168.6 743.4 L170.0 742.1 L169.5 741.0 M164.5 744.8 L166.0 742.8 L168.1 741.2 L168.2 740.4 M161.9 748.0 L160.8 747.8 L159.8 748.7 M162.2 728.6 L161.8 728.6 L162.3 727.9 L161.2 729.8 M170.9 731.7 L169.6 732.5 L169.1 733.2 L167.0 733.6 L166.5 732.4 M162.9 732.1 L163.2 730.1 L164.9 732.3 L164.6 734.1 M160.4 728.2 L162.1 727.6 L161.4 729.3 M175.2 736.5 L173.7 737.6 L174.9 739.3 M168.5 732.7 L169.9 730.6 L170.2 732.2 L172.2 734.0 M171.3 747.6 L172.2 747.7 L174.0 746.5 L173.3 746.2 L173.1 747.9 M157.9 741.9 L157.8 743.6 L157.3 744.7 M163.1 734.7 L162.4 734.5 L163.8 732.4 M180.1 749.1 L181.2 750.2 L182.6 748.5 M163.9 740.2 L165.9 739.8 L166.3 740.2 L167.5 741.9 L165.7 743.3 M169.5 742.0 L168.4 740.5 L167.1 742.3 L165.3 744.2 L167.0 744.9 M158.4 735.2 L156.9 734.1 L154.7 736.2 L155.1 735.2 L153.5 736.5 M184.2 745.0 L183.9 745.4 L184.3 745.5 L182.5 746.5 M189.4 747.4 L187.7 747.4 L185.7 747.5 M153.8 717.5 L155.5 717.5 L154.5 716.0 M169.2 746.8 L167.7 748.6 L167.8 749.9 L168.0 751.1 M159.3 721.6 L158.1 723.1 L159.8 721.0 M173.0 744.8 L174.9 743.4 L175.4 744.9 M156.7 729.6 L154.9 729.2 L154.3 730.5 L154.2 732.4 L154.4 731.0 M169.4 744.0 L170.1 745.8 L171.0 746.1 L169.3 748.1 M158.1 724.9 L158.7 723.7 L160.7 723.2 M155.7 722.9 L157.6 724.1 L156.8 722.9 L154.8 722.2 L156.8 720.9 M169.7 744.5 L170.2 743.2 L170.6 741.5 L171.5 743.6 M166.4 732.1 L166.2 730.2 L168.0 730.3 L169.3 729.7 L171.3 731.4 M179.1 748.7 L179.0 750.4 L179.4 748.7 L178.7 750.8 M162.9 748.4 L160.8 746.5 L162.0 747.8 L162.4 749.3 L162.4 751.2 M159.5 733.9 L159.3 735.8 L161.2 737.6 L159.3 739.0 M160.8 739.5 L158.6 739.1 L156.7 739.7 L155.4 740.6 L155.8 739.7 M172.5 740.5 L172.4 742.0 L170.4 741.8 M189.0 746.1 L187.7 745.1 L188.7 744.1 L190.5 742.0 M162.1 737.9 L163.2 738.5 L164.0 736.3 L162.5 737.4 M160.1 749.4 L161.4 751.2 L162.2 753.2 L161.3 752.9 M173.5 746.9 L171.7 745.5 L172.5 746.7 L172.4 748.5 L174.4 747.5 M170.7 741.8 L170.9 739.9 L172.9 740.0 M176.0 741.2 L173.8 740.3 L176.0 738.8 L174.7 739.4 L176.7 737.5 M173.8 742.9 L176.0 744.8 L175.1 743.9 L175.6 742.9 M159.4 721.7 L158.7 720.9 L156.9 722.0 L156.9 721.7 L156.0 720.3 M156.0 741.2 L154.2 741.5 L156.4 740.5 L157.9 740.9 L156.5 739.6 M161.9 743.6 L163.7 744.9 L161.7 743.4 L160.9 742.0 M160.6 730.8 L160.9 730.1 L160.3 729.9 L158.4 730.5 M185.1 742.4 L183.3 742.5 L181.3 742.6 M176.0 741.3 L176.6 740.1 L174.8 738.6 L176.5 738.0 M190.0 747.0 L192.1 747.9 L193.3 746.9 M163.3 729.8 L162.8 729.4 L161.2 731.1 L160.7 730.9 M168.0 747.2 L168.0 745.9 L167.3 745.7 M166.2 736.7 L167.1 737.5 L167.9 738.7 M175.2 737.2 L175.8 737.6 L173.6 735.4 M183.4 741.1 L185.4 742.0 L183.7 743.0 M168.4 736.5 L169.4 737.3 L169.2 737.3 L171.0 736.3 L171.4 737.3 M168.3 731.7 L169.2 729.9 L168.8 730.4 M159.1 729.2 L159.0 730.9 L157.7 729.8 L156.1 729.3 L155.9 729.1 M155.9 719.5 L154.1 718.8 L152.9 718.9 L152.8 719.4 M178.1 738.3 L179.8 736.3 L179.6 734.9 L179.4 736.4 L179.7 736.6 M170.4 732.0 L170.5 732.6 L171.3 731.4 L171.8 730.3 M175.7 741.5 L174.9 741.8 L173.6 741.3 L172.1 742.4 L174.1 743.3 M154.8 736.8 L154.9 736.4 L154.6 734.5 L152.7 736.5 M171.2 743.8 L169.1 741.9 L168.9 743.6 L167.9 745.3 L166.0 744.4 M174.5 744.4 L172.6 746.1 L173.7 744.4 L172.3 746.5 M160.2 729.3 L160.5 728.0 L160.8 727.5 L161.1 725.4 L162.9 724.0" stroke="#000" stroke-width="1.35" stroke-linecap="round"/>
<path d="M78.8 742.9 L79.4 744.1 L80.9 745.9 M101.8 753.5 L102.0 754.9 L103.1 753.5 L100.9 754.7 L103.0 755.6 M86.8 752.3 L84.8 750.6 L86.5 750.1 L88.5 751.2 L89.7 753.1 M72.2 758.0 L70.5 757.9 L70.6 757.1 L68.6 756.8 M68.6 728.5 L70.2 726.8 L68.5 726.7 M77.8 752.8 L78.5 750.7 L79.8 752.4 M96.2 754.8 L95.4 756.6 L93.6 755.8 L92.3 756.9 L93.8 757.9 M76.0 755.3 L75.5 756.1 L75.2 757.5 M70.3 727.9 L70.6 726.8 L69.1 726.8 L69.4 726.7 L69.4 725.9 M137.6 748.0 L135.9 746.4 L136.5 748.5 L138.0 749.9 M111.3 752.0 L111.1 752.5 L109.6 750.8 L107.8 752.8 M70.1 742.2 L69.0 743.2 L67.4 743.9 L65.6 743.7 M92.6 758.7 L93.3 758.5 L93.4 758.7 L91.3 760.4 L90.7 760.6 M60.7 728.6 L60.3 727.7 L61.7 729.0 L63.0 728.2 L61.5 727.6 M117.4 759.3 L118.9 759.3 L116.8 757.8 L118.6 755.8 M64.7 758.0 L66.9 755.9 L68.4 757.3 L70.5 757.4 L71.4 758.9 M126.8 759.0 L124.9 758.2 L123.0 759.3 L121.9 758.6 L122.6 760.1 M136.3 754.5 L137.8 755.9 L137.5 756.4 L136.5 757.0 M92.7 751.8 L93.1 753.1 L94.3 752.8 L93.9 753.4 M68.9 733.3 L67.8 734.8 L67.0 735.5 L65.5 737.2 M77.6 757.4 L77.7 755.7 L78.4 753.7 L78.4 755.1 M142.6 750.9 L144.1 751.6 L143.3 752.1 L144.9 750.2 L147.1 752.2 M129.2 749.3 L129.4 749.5 L128.2 750.0 M77.3 758.7 L76.5 758.4 L77.2 758.1 L78.0 756.2 M78.1 747.6 L77.8 747.8 L77.1 748.1 L76.9 747.8 L76.8 748.8 M69.8 741.6 L70.6 743.6 L72.6 743.4 L73.1 742.6 M70.0 758.6 L70.6 759.0 L70.1 759.5 L68.3 760.0 M148.0 755.5 L149.2 755.4 L151.2 756.7 L151.7 758.4 M84.0 757.6 L82.6 756.7 L83.0 757.8 M123.5 749.1 L121.5 747.6 L122.2 747.2 L124.1 746.9 L124.5 746.8 M79.2 755.3 L81.4 753.3 L79.5 754.8 M64.1 729.9 L64.5 728.3 L63.2 730.2 M132.0 751.9 L131.5 752.1 L130.1 752.3 L130.2 752.7 L129.9 754.8 M61.1 759.7 L59.2 758.3 L57.8 758.2 L59.0 758.0 M124.1 756.2 L123.5 756.6 L122.9 755.3 L121.7 754.3 M114.5 750.3 L113.9 749.8 L116.0 751.0 M109.1 759.7 L109.9 759.8 L108.0 758.1 M125.7 757.3 L125.7 755.4 L127.1 754.4 L128.7 753.5 M75.9 757.0 L75.4 758.1 L73.3 757.5 L74.6 755.4 M65.2 743.5 L64.8 745.2 L66.5 747.0 L66.3 745.7 M101.1 749.5 L99.4 748.4 L98.9 750.3 L100.8 749.1 M135.8 759.7 L137.3 758.4 L137.1 757.8 M90.5 750.9 L89.9 751.6 L90.5 751.4 M70.9 729.7 L70.6 729.9 L68.7 730.5 L70.4 729.0 M133.3 757.5 L131.1 756.1 L132.0 754.3 M100.3 757.5 L102.1 759.1 L102.0 759.9 M125.9 754.8 L127.9 753.2 L125.8 755.4 M87.0 750.8 L85.3 750.2 L85.6 748.5 L84.2 748.7 M89.7 748.7 L90.0 748.9 L88.0 749.1 L86.0 750.3 L85.7 749.7 M134.0 759.4 L133.4 759.9 L135.1 759.3 M83.6 745.1 L83.2 744.8 L81.5 742.8 L82.7 744.9 L84.2 745.6 M85.3 750.5 L86.3 751.3 L86.6 753.0 M102.1 751.2 L103.9 752.2 L104.4 753.1 M108.6 754.6 L106.5 755.5 L104.4 756.1 M78.2 750.0 L76.4 751.7 L78.2 750.1 L78.2 751.6 L80.1 751.0 M79.7 749.3 L80.4 749.4 L80.4 747.8 L80.4 748.0 L81.2 747.9 M63.0 755.7 L64.3 755.3 L64.1 754.3 L66.3 753.1 M132.5 751.1 L134.3 752.9 L135.4 753.1 L134.6 751.1 M64.5 745.4 L63.1 744.2 L62.6 744.7 L61.8 742.6 L60.2 744.7 M65.6 743.5 L63.8 741.6 L65.5 739.5 L64.2 740.3 L64.7 739.3 M81.9 751.9 L80.9 749.9 L81.9 750.0 L81.6 749.2 M135.5 757.4 L133.5 756.8 L133.5 756.7 L134.0 756.9 M65.7 729.6 L64.5 729.7 L64.1 728.2 M78.9 744.1 L80.5 744.0 L78.3 745.8 M83.9 754.2 L83.1 756.4 L82.7 757.2 L81.5 757.0 M139.9 751.1 L141.3 752.5 L142.6 753.8 L144.8 751.7 M84.5 744.0 L83.8 745.0 L82.6 744.1 L80.8 745.0 L79.4 743.3 M81.0 749.4 L80.8 747.9 L81.7 745.9 L83.5 745.7 M96.7 748.9 L97.0 749.2 L97.5 750.3 L97.0 752.3 M141.3 757.3 L141.8 757.5 L139.9 756.0 L141.7 754.1 M70.4 730.5 L72.2 730.3 L71.8 728.6 L73.4 726.5 L73.3 728.5 M112.4 759.7 L113.7 760.7 L115.5 762.4 L115.7 763.1 L115.0 762.3 M126.5 747.3 L126.0 748.4 L125.5 746.3 M98.0 748.7 L97.9 749.7 L98.5 749.7 L97.3 750.5 M145.0 752.5 L145.5 754.3 L144.7 754.1 M94.1 759.9 L95.9 758.0 L95.2 757.6 L96.3 756.7 M137.7 752.3 L135.8 754.4 L135.8 753.7 L136.9 752.1 L136.1 750.6 M133.7 751.3 L135.6 750.9 L135.7 751.5 M97.5 749.5 L98.0 748.2 L96.5 747.8 L95.3 749.4 M95.7 759.9 L96.9 759.1 L98.6 757.5 L97.3 755.6 L95.9 756.3 M116.4 748.1 L118.6 747.3 L120.6 749.1 L121.9 750.6 M107.1 752.0 L107.4 750.0 L106.3 749.8 L104.7 749.3 L105.8 751.4 M71.4 756.9 L73.4 755.4 L75.4 754.1 L77.0 753.1 M71.4 753.0 L72.7 751.7 L74.1 751.7 L76.2 753.8 L77.3 753.5 M70.2 751.2 L68.2 750.7 L68.0 751.6 L66.1 751.8 M80.4 749.2 L80.5 747.2 L81.2 747.2 M128.4 742.4 L126.7 741.2 L128.6 740.5 L127.5 739.4 L125.6 739.0 M83.7 758.2 L83.5 756.9 L84.3 758.0 M129.5 750.9 L129.1 752.3 L127.5 752.8 M109.8 756.2 L108.4 756.8 L106.5 758.4 M77.3 749.2 L76.0 750.9 L77.6 749.0 M84.3 750.7 L83.8 751.2 L84.9 751.6 M118.6 757.7 L118.3 756.2 L118.5 755.0 L119.8 754.6 M71.6 754.2 L70.6 754.7 L69.9 753.0 L69.8 752.5 M70.8 749.2 L69.2 749.0 L70.2 750.2 L71.2 750.3 M89.5 758.1 L91.5 757.8 L90.0 758.1 L88.2 757.7 M84.5 744.4 L86.2 745.1 L86.2 744.1 L86.4 745.2 L87.4 745.4 M123.8 759.2 L124.6 757.8 L124.7 757.8 M78.2 755.0 L76.2 754.1 L77.2 753.6 L75.5 755.3 M96.0 746.6 L97.7 748.6 L97.6 750.4 M146.1 756.7 L147.5 757.7 L149.3 757.2 L147.3 756.3 M62.9 727.3 L62.0 729.0 L61.8 729.6 L64.0 730.6 L65.6 731.7 M126.4 747.1 L126.9 747.5 L126.0 747.4 M124.9 752.5 L125.5 752.5 L127.4 752.4 L126.6 750.9 M135.9 745.5 L135.1 746.8 L136.0 745.5 L135.0 744.5 M67.3 733.7 L67.1 732.5 L69.1 730.8 L70.9 730.2 L70.1 730.8 M94.2 757.3 L95.8 755.7 L93.7 753.7 M132.2 756.0 L132.7 757.7 L132.6 757.6 L134.5 757.8 M128.4 753.3 L127.7 753.9 L126.5 752.0 M83.5 755.6 L83.7 753.9 L82.6 753.4 M126.5 743.8 L125.7 742.3 L125.1 742.8 L125.3 743.0 M119.1 749.0 L120.9 746.9 L122.9 747.7 M85.4 756.4 L84.4 754.2 L83.0 755.0 L80.9 753.9 L80.7 755.3 M84.0 758.9 L85.8 759.8 L87.7 758.2 L89.6 756.2 M66.9 740.9 L66.1 741.7 L64.7 741.2 L64.4 742.9 M68.8 744.2 L67.2 744.2 L65.5 742.1 M117.8 756.2 L119.5 757.7 L118.3 757.1 M71.2 729.0 L70.1 728.8 L70.5 728.3 M64.3 732.3 L65.7 732.3 L64.2 731.8 M135.5 759.4 L136.7 758.3 L134.9 759.1 L136.7 759.6" stroke="#000" stroke-width="1.35" stroke-linecap="round"/>
<path d="M224.7 758.0 L225.9 758.3 L225.7 756.9 L223.9 755.7 L225.4 755.4 M220.8 752.9 L218.9 752.0 L217.9 753.5 L218.5 751.8 M209.7 748.0 L211.3 747.7 L212.7 748.7 M208.8 751.3 L208.6 751.9 L210.5 750.3 L212.0 751.2 L214.0 753.0 M211.6 754.7 L213.3 753.1 L212.1 754.9 L210.4 756.8 M213.4 751.7 L211.8 753.8 L209.7 755.6 M223.9 751.2 L223.4 751.1 L223.0 750.2 M229.8 756.6 L229.9 756.6 L228.2 757.9 M227.8 754.4 L228.9 753.5 L228.9 755.1 L230.0 754.3 M225.8 752.7 L226.5 753.0 L225.3 752.1 L223.2 750.4 M225.2 752.3 L224.2 753.2 L224.6 751.9 L226.2 750.6 M205.1 749.4 L203.2 750.9 L201.2 748.9 M220.5 753.2 L219.6 752.5 L219.5 752.0 L218.8 752.1 M211.4 754.8 L211.9 756.0 L210.7 756.9 L211.5 758.1 M218.8 749.8 L218.6 749.6 L219.4 748.0 L217.7 746.4 M228.5 757.3 L226.7 756.4 L228.7 755.0 M217.3 752.2 L217.8 753.4 L216.5 752.3 L217.1 751.9 M210.8 742.3 L210.7 743.8 L209.4 742.2 M223.6 758.7 L223.9 760.7 L223.8 762.8 M223.7 755.7 L223.1 753.6 L224.6 753.2 L222.8 752.2 M211.4 744.3 L212.2 742.3 L212.8 740.9 L210.9 740.1 L210.6 739.6 M217.7 748.9 L216.4 749.6 L214.3 747.6 M219.2 757.7 L220.4 757.5 L221.1 757.1 L222.1 755.8 M212.6 752.2 L211.6 750.4 L211.7 752.3 L213.5 750.6 M207.8 753.3 L205.6 753.8 L206.2 754.2 L204.4 752.9 L205.6 753.3 M212.8 742.2 L213.9 743.7 L212.8 742.0 L211.5 743.3 L211.1 743.4 M222.6 755.3 L224.5 753.1 L226.0 752.6 L226.9 752.4 L227.8 753.6 M227.1 748.1 L229.1 749.0 L229.6 747.0 L231.7 747.2 M224.5 755.4 L223.4 755.0 L223.6 753.0 L223.5 754.3 M210.9 742.5 L210.5 741.9 L208.5 742.9 L209.6 744.8 L207.7 746.9 M212.3 748.6 L213.0 750.2 L212.5 749.3 M220.7 748.4 L220.9 748.1 L219.6 748.8 L221.3 749.2 M217.6 753.3 L218.7 751.3 L218.5 752.2 M229.2 755.1 L227.2 757.2 L228.8 758.3 L227.0 758.8 M208.7 751.5 L210.1 751.4 L208.1 750.9 L208.0 751.7 M228.0 755.6 L225.9 755.5 L224.7 755.6 L223.1 754.8 L222.8 756.5 M209.3 749.3 L210.3 748.5 L209.7 747.0 M227.8 757.7 L227.1 756.5 L225.5 758.2 M225.1 749.1 L225.9 748.5 L224.7 749.8 L226.8 751.4 L225.8 752.0 M225.8 756.6 L225.5 758.7 L224.5 759.4 L224.0 757.8 M222.0 757.1 L220.6 757.7 L219.0 758.5 M207.1 741.6 L205.4 740.5 L206.2 738.7 L206.8 738.7 L207.8 737.0 M215.3 744.3 L217.3 744.1 L216.4 742.9 L217.4 741.9 L218.5 740.5 M220.9 755.3 L219.7 754.7 L218.7 753.8 M225.1 748.1 L225.4 749.3 L225.9 749.5 M210.6 742.0 L212.7 743.6 L210.9 741.9 M214.8 746.6 L212.8 748.6 L214.4 747.4 L215.1 748.1 M213.8 748.6 L213.1 750.7 L212.4 749.6 L213.2 751.3 L212.9 750.7 M210.0 747.7 L208.8 747.3 L208.8 749.5 M215.4 755.6 L213.4 757.3 L211.3 755.2" stroke="#000" stroke-width="1.35" stroke-linecap="round"/>
<path d="M23.3 711.7 L22.9 713.5 L23.9 712.5 L23.9 712.7 M33.7 711.1 L35.4 713.0 L36.0 713.5 L34.8 713.5 L36.2 715.0 M39.7 704.6 L40.2 706.0 L38.7 706.6 M40.0 715.1 L40.2 716.8 L38.5 714.8 L40.5 713.8 L40.2 712.8 M38.2 721.0 L37.6 723.1 L38.6 724.8 L40.5 725.0 M23.0 702.4 L21.2 701.7 L21.5 700.2 L22.1 698.3 M35.5 706.7 L36.5 706.7 L34.8 704.9 L34.4 707.1 L33.6 706.6 M26.9 707.0 L28.8 706.5 L29.5 705.9 L27.8 705.7 L27.6 703.7 M41.2 704.9 L40.2 705.8 L42.0 707.9 L44.2 708.3 M34.0 708.4 L32.6 708.6 L32.8 710.5 L34.3 711.2 L35.1 710.2 M36.2 714.4 L35.5 714.9 L37.1 716.8 L38.0 718.6 M57.5 727.5 L58.5 726.2 L56.6 725.8 L57.9 726.3 M18.6 705.1 L19.4 706.8 L19.7 707.7 L18.6 709.1 M36.4 709.9 L37.8 711.7 L39.7 710.5 L38.1 711.7 M27.6 705.7 L28.1 703.8 L29.3 702.8 L29.1 704.6 L27.0 704.7 M10.1 710.5 L8.0 708.4 L7.2 707.8 L9.4 709.2 L10.0 707.7 M45.6 709.2 L44.8 708.6 L45.2 707.8 L47.2 707.3 M29.8 709.4 L27.7 709.3 L28.6 709.2 M17.1 708.7 L19.3 710.8 L20.5 708.9 M58.6 731.5 L58.4 730.8 L57.4 729.0 M12.5 709.6 L12.5 709.3 L10.4 710.9 M19.3 704.4 L21.2 703.1 L20.5 705.2 M31.1 711.3 L31.5 709.8 L33.7 711.3 L33.1 713.5 L32.3 713.2 M8.6 711.8 L10.5 711.7 L11.9 709.7 L9.9 708.0 L8.0 708.0 M8.5 706.1 L6.8 707.8 L7.4 706.4 L5.3 704.8 M14.4 706.1 L12.7 705.7 L14.3 704.7 M41.4 710.2 L40.4 708.2 L38.6 710.1 M41.1 709.7 L43.3 711.8 L43.6 710.5 L43.2 709.8 M30.7 705.5 L32.5 707.5 L31.1 705.4 L30.9 707.2 M11.8 705.4 L13.0 704.9 L12.4 705.8 L10.4 706.6 M46.1 718.5 L47.0 720.7 L48.4 721.5 M31.5 702.6 L31.4 701.2 L30.4 700.3 L29.6 701.2 L27.5 702.1 M44.5 710.9 L43.3 709.5 L43.1 710.6 L43.0 710.7 L43.5 710.5 M20.9 711.6 L19.3 713.3 L17.6 714.9 L16.0 716.7 L15.4 716.8 M36.9 719.1 L35.3 718.3 L35.6 720.1 M40.5 712.4 L40.4 713.1 L42.2 713.2 L43.6 711.6 M46.7 717.5 L48.7 719.1 L47.0 720.8 L48.0 722.1 M8.2 708.3 L8.0 708.8 L7.1 707.1 L6.0 709.3 L4.8 708.1 M42.7 712.8 L42.5 710.7 L43.6 712.0 M9.0 706.8 L10.5 706.7 L10.3 706.2 L9.8 706.0" stroke="#000" stroke-width="1.35" stroke-linecap="round"/>
<path d="M249.4 677.8 L253.8 685.7 L254.3 694.5 L251.0 703.0 L246.0 712.0 L238.8 717.0 L235.3 724.0 L226.5 729.6" stroke="#000" stroke-width="1.3" stroke-dasharray="5 2 2 3 7 2"/>
<path d="M230.0 662.0 L236.0 661.5" stroke="#000" stroke-width="1.2"/>
<path d="M241.0 663.0 L250.0 664.5" stroke="#000" stroke-width="1.2"/>
<path d="M258.0 661.5 L268.0 663.5" stroke="#000" stroke-width="1.2"/>
<path d="M274.0 664.0 L285.0 664.0" stroke="#000" stroke-width="1.2"/>
<path d="M312.7 664.0 L325.6 661.5 L333.4 658.9" stroke="#000" stroke-width="1.2"/>
<path d="M335.0 658.0 L360.0 653.0 L400.0 648.6 L440.0 649.5 L470.0 663.0 L500.0 683.0" stroke="#000" stroke-width="1.2"/>
<path d="M524.0 712.5 L530.0 716.0 L535.4 718.8 L541.0 717.5 L547.1 715.2 L553.0 711.5" stroke="#000" stroke-width="1.2"/>
<path d="M556.0 709.5 L560.5 706.9 L566.0 702.0 L570.5 698.5" stroke="#000" stroke-width="1.2"/>
<path d="M806.0 572.0 L803.0 574.0 L801.5 580.0 L803.0 588.0 L800.5 596.0 L802.5 604.0 L800.0 612.0 L802.0 622.0 L800.5 632.0 L802.5 642.0 L801.0 650.0 L806.0 654.0 Z" fill="#02426a" stroke="#000" stroke-width="1"/>
<path d="M803.4 583.1 L801.9 585.0 l-0.2 1.6 M801.9 585.0 L800.3 585.4 l-1.4 -2.5 M800.3 585.4 L798.8 586.6 l-1.5 2.3 M798.8 586.6 L797.3 586.0 l-1.1 0.8 M797.3 586.0 M804.2 617.1 L802.2 616.6 l-1.0 -2.1 M802.2 616.6 L800.2 615.6 L798.2 617.6 l-1.9 -1.8 M798.2 617.6 L796.1 618.7 M804.3 564.2 L803.6 564.5 L803.0 566.7 l0.4 2.2 M803.0 566.7 L802.3 568.6 l-0.6 2.9 M802.3 568.6 L801.6 568.5 M803.7 613.9 L801.0 612.4 l-1.7 -1.5 M801.0 612.4 L798.3 614.5 L795.6 616.0 L792.9 616.8 M803.3 650.0 L801.0 648.8 l-1.9 0.3 M801.0 648.8 L798.8 650.2 l-1.4 -0.8 M798.8 650.2 L796.5 649.5 L794.3 649.3 M804.2 608.9 L800.2 610.9 l0.5 -0.9 M800.2 610.9 L796.1 609.6 l-0.5 2.8 M796.1 609.6 L792.0 609.5 l0.6 -2.3 M792.0 609.5 L788.0 609.7 M804.7 610.9 L801.0 609.4 L797.4 609.3 L793.7 610.8 l-1.4 -0.3 M793.7 610.8 L790.1 611.9 l-0.9 2.5 M790.1 611.9 M804.8 652.6 L802.6 652.2 l-0.4 1.0 M802.6 652.2 L800.3 654.0 L798.1 655.4 L795.9 656.5 M803.1 634.9 L801.1 633.6 l-1.3 -0.8 M801.1 633.6 L799.1 635.1 l-0.7 1.9 M799.1 635.1 L797.2 634.5 l-1.3 -2.5 M797.2 634.5 L795.2 636.0 l-1.4 1.9 M795.2 636.0 M804.2 639.0 L801.1 637.6 L798.0 638.2 l0.5 1.0 M798.0 638.2 L794.9 640.3 l-0.3 -0.2 M794.9 640.3 L791.8 641.2 l-1.9 0.3 M791.8 641.2 M803.3 596.6 L800.8 596.6 L798.3 597.0 L795.8 598.4 l-1.4 0.6 M795.8 598.4 L793.3 599.7 M805.3 656.4 L804.1 656.4 l-0.9 -0.1 M804.1 656.4 L802.8 656.9 l-1.6 -1.2 M802.8 656.9 L801.6 655.8 l0.0 0.6 M801.6 655.8 L800.3 658.0 M804.1 614.1 L800.7 614.9 L797.3 615.6 l0.3 0.6 M797.3 615.6 L793.8 615.1 l-1.8 -0.9 M793.8 615.1 L790.4 613.6 l-1.8 -1.3 M790.4 613.6 M804.2 595.1 L800.9 595.9 l0.7 1.4 M800.9 595.9 L797.5 596.2 L794.1 596.5 l-0.1 2.9 M794.1 596.5 L790.7 597.8 l-1.6 2.6 M790.7 597.8 M803.8 648.5 L801.5 647.4 L799.3 646.5 l-0.8 -3.0 M799.3 646.5 L797.1 648.1 l0.2 0.5 M797.1 648.1 L794.8 649.5 M804.9 653.3 L803.4 653.0 L801.9 652.6 L800.4 651.3 l-0.7 -2.2 M800.4 651.3 L798.8 650.5 M805.3 597.4 L801.7 598.0 L798.1 599.7 L794.4 599.2 l-0.4 1.2 M794.4 599.2 L790.8 600.6 l-0.1 2.6 M790.8 600.6 M805.1 586.5 L802.9 587.1 L800.8 587.7 L798.6 588.6 l-1.1 -0.9 M798.6 588.6 L796.4 590.0 l-1.6 -1.7 M796.4 590.0 M804.9 625.5 L803.1 625.2 l-0.7 1.9 M803.1 625.2 L801.4 625.3 l-1.9 -1.3 M801.4 625.3 L799.7 624.0 l0.6 1.3 M799.7 624.0 L797.9 625.5 l-0.9 2.5 M797.9 625.5 M803.2 603.2 L799.1 601.6 l-0.3 -0.9 M799.1 601.6 L795.0 601.4 l-1.3 -2.8 M795.0 601.4 L791.0 602.6 L786.9 601.2 M805.9 613.7 L804.5 614.1 l-1.1 -1.4 M804.5 614.1 L803.0 616.2 l-1.1 2.6 M803.0 616.2 L801.6 618.3 L800.1 617.2 M803.6 603.9 L800.3 604.8 L796.9 606.3 l-0.5 -2.4 M796.9 606.3 L793.5 606.1 L790.1 605.3 M805.4 638.6 L802.6 639.5 L799.9 639.4 L797.1 641.0 l-1.3 -0.8 M797.1 641.0 L794.3 641.9 l0.6 -1.2 M794.3 641.9 M805.0 634.6 L802.7 636.3 l-0.1 -0.9 M802.7 636.3 L800.4 636.5 l-0.4 -0.3 M800.4 636.5 L798.1 636.0 l-1.0 -1.2 M798.1 636.0 L795.8 635.8 M803.3 647.1 L801.6 648.9 L800.0 651.1 l0.3 0.5 M800.0 651.1 L798.3 651.4 L796.7 653.0 M804.9 594.7 L802.0 593.3 L799.1 593.9 l-0.1 2.7 M799.1 593.9 L796.3 595.3 L793.4 594.5 M803.3 598.8 L800.6 599.7 L798.0 598.4 l-1.5 -2.7 M798.0 598.4 L795.3 598.1 L792.6 597.4 l0.8 -0.0 M792.6 597.4 M803.9 606.8 L800.2 606.1 l-0.7 2.1 M800.2 606.1 L796.5 608.0 l0.1 -0.3 M796.5 608.0 L792.9 609.7 l-1.2 -2.9 M792.9 609.7 L789.2 611.5 l-1.2 -1.5 M789.2 611.5 M805.8 649.6 L804.4 650.6 l-0.3 -0.5 M804.4 650.6 L803.0 649.0 L801.6 648.7 l0.9 2.0 M801.6 648.7 L800.2 648.9 l-2.0 1.4 M800.2 648.9 M804.5 587.3 L801.7 588.6 l-1.7 1.6 M801.7 588.6 L799.0 587.2 l-1.9 -1.8 M799.0 587.2 L796.3 586.3 L793.6 587.5 l-0.2 -0.0 M793.6 587.5 M804.9 570.7 L802.7 569.5 l-0.9 -3.0 M802.7 569.5 L800.5 570.9 l-0.1 0.2 M800.5 570.9 L798.3 572.3 L796.1 572.2 l-0.7 -3.0 M796.1 572.2 M803.5 569.4 L801.8 570.8 L800.1 571.2 L798.4 573.2 L796.7 572.6 M805.4 606.7 L802.9 607.4 L800.4 609.2 L797.9 610.7 L795.5 609.4 l0.1 1.5 M795.5 609.4 M806.0 626.4 L803.0 628.5 l0.1 -1.8 M803.0 628.5 L799.9 629.8 L796.9 629.0 L793.8 628.6" stroke="#000" stroke-width="1.4"/>
<path d="M801.6 644.6 L799.5 644.7 L796.7 645.1 L790.6 646.4 L790.1 649.2 L788.0 651.1 L786.5 654.5 L785.4 656.9 L785.6 659.6 L786.5 663.0 L787.1 666.7 L785.3 667.9 L783.1 670.5 L781.5 671.4 L782.9 674.3 L783.8 676.9 L785.0 680.0 L786.8 681.4 L787.7 683.8 L790.0 685.5 L792.8 687.3 L791.8 689.9 L792.1 692.5 L791.0 695.9 L790.6 697.6 L791.8 700.5 L793.2 703.9 L794.5 707.0 L793.2 710.0 L791.1 711.5 L789.8 714.2 L788.9 716.5 L786.4 719.1 L786.4 721.7 L785.1 724.4 L785.2 727.4 L784.3 730.2 L784.1 733.2 L785.5 735.8 L785.0 737.9 L784.9 740.9 L786.8 743.9 L788.5 746.6 L789.6 748.6 L791.1 750.4 L792.2 753.5" stroke="#000" stroke-width="2.4"/>
<path d="M801.6 644.6 L799.5 644.7 L796.7 645.1 L790.6 646.4 L790.1 649.2 L788.0 651.1 L786.5 654.5 L785.4 656.9 L785.6 659.6 L786.5 663.0 L787.1 666.7 L785.3 667.9 L783.1 670.5 L781.5 671.4 L782.9 674.3 L783.8 676.9 L785.0 680.0 L786.8 681.4 L787.7 683.8 L790.0 685.5 L792.8 687.3 L791.8 689.9 L792.1 692.5 L791.0 695.9 L790.6 697.6 L791.8 700.5 L793.2 703.9 L794.5 707.0" stroke="#02426a" stroke-width="1.1"/>
<path d="M6.0 105.3 L155.0 105.3 L156.5 112.5 L161.0 115.0 L160.3 121.5 L156.5 128.0 L148.7 134.5 L142.0 142.0 L137.8 149.0 L186.7 149.0" stroke="#000" stroke-width="1" shape-rendering="crispEdges"/>
<path d="M209.0 104.7 L264.6 105.2 L311.0 105.2 L313.0 89.0 L310.0 88.7 L325.0 91.5 L400.0 91.0 L451.7 92.6 L503.4 93.9 L555.0 95.2 L610.0 96.8 L636.0 97.0 L703.4 96.2 L765.5 95.2 L787.5 94.6 L806.0 97.7" stroke="#000" stroke-width="1" shape-rendering="crispEdges"/>
<path d="M636.0 97.0 L637.8 94.9 L641.6 92.7 L643.3 91.0 L646.1 90.4 L648.7 88.5 L650.9 87.3 L654.1 85.5 L657.8 86.3 L661.4 86.0 L664.5 84.4 L666.9 84.5 L669.7 84.3 L674.0 83.7 L676.3 82.1 L677.8 78.5 L679.7 74.9 L683.2 73.5 L686.8 73.3 L690.0 71.5 L692.8 71.1 L695.5 69.6 L697.1 67.0 L698.2 63.8 L698.9 61.4 L701.4 59.8 L703.8 57.3 L705.7 56.2 L706.7 51.5 L708.1 48.0 L712.3 46.0 L715.2 45.3 L717.9 42.8 L721.2 41.7 L724.1 40.2 L727.4 39.2 L729.1 36.7 L733.4 35.5 L735.5 33.4 L739.0 33.3 L742.5 30.7 L745.4 29.1 L747.1 27.2 L750.0 25.2 L752.5 23.0 L755.8 20.2 L757.5 19.1 L760.6 16.7 L764.8 13.4 L762.1 10.8 L758.2 10.9 L755.1 10.9 L750.5 9.0 L748.7 5.7" stroke="#000" stroke-width="1" shape-rendering="crispEdges"/>
<path d="M764.0 14.2 L765.2 17.5 L765.4 20.3 L766.4 22.9 L768.9 26.5 L771.3 28.4 L774.8 31.5 L776.1 33.9 L779.4 35.5 L781.5 37.3 L783.5 39.9 L786.6 40.8 L789.9 41.3 L793.0 39.6 L795.5 39.0 L799.7 39.6 L801.5 36.0 L803.0 34.2 L806.0 32.3" stroke="#000" stroke-width="1" shape-rendering="crispEdges"/>
<path d="M787.5 94.6 L785.1 97.6 L783.6 99.8 L781.7 103.1 L782.6 106.6 L782.3 110.3 L781.6 113.4 L781.9 117.2 L778.3 118.2 L775.9 117.3 L773.9 119.7 L770.2 121.9 L768.4 124.1 L765.1 127.4 L763.6 130.1 L762.3 132.1 L759.7 134.8 L758.5 139.0 L754.5 137.0 L751.7 135.8 L747.3 136.6 L743.8 137.2 L741.8 138.1 L737.4 139.5 L734.3 140.4 L731.7 142.7 L730.8 143.5 L728.5 146.1 L726.1 149.0 L723.3 151.9 L721.0 150.8 L716.2 150.3 L714.9 146.9 L713.7 142.9 L711.8 144.9 L707.9 145.9 L705.9 147.7 L703.8 149.2 L699.0 150.9 L697.0 153.7 L693.6 155.5 L691.7 158.5 L691.4 161.6 L690.3 165.1 L686.3 167.3 L683.9 167.2 L679.5 169.0 L678.0 171.0 L674.8 172.2 L672.5 174.9 L670.7 174.9 L666.4 176.7 L663.6 179.5 L659.3 180.7 L656.1 183.3 L655.0 185.1 L652.4 185.0 L649.7 186.7 L646.8 188.0 L643.6 188.0 L640.5 187.9 L637.4 186.7 L633.9 188.1 L631.1 188.0 L627.1 190.2 L623.4 191.3 L621.3 193.6 L618.0 196.0 L614.0 197.7 L610.9 199.8 L610.8 204.5 L609.5 208.1 L609.7 212.1 L606.1 213.3 L602.7 214.4 L600.3 214.7 L595.7 215.2 L593.8 216.0 L590.7 216.4 L589.4 220.6 L589.3 223.1 L589.8 225.9 L588.1 229.5 L588.5 232.4 L588.2 235.9 L588.3 238.8" stroke="#000" stroke-width="1" shape-rendering="crispEdges"/>
<path d="M143.5 238.8 L299.6 238.3 L492.6 238.8 L588.3 238.8 L678.9 238.3" stroke="#000" stroke-width="1" shape-rendering="crispEdges"/>
<path d="M299.6 238.0 L306.5 247.0 L307.3 248.0 L291.8 400.0 L285.3 451.7 L280.2 506.0 L280.7 544.8 L282.7 586.0 L283.3 610.0 L285.0 649.8" stroke="#000" stroke-width="1" shape-rendering="crispEdges"/>
<path d="M492.6 238.8 L497.0 264.6 L503.4 303.4 L511.2 347.4 L516.4 381.0 L520.3 400.0 L524.0 420.7 L529.3 438.8 L534.5 454.3 L539.6 464.6 L537.0 476.3 L546.0 482.7 L537.0 488.0 L533.2 495.7 L533.2 506.0 L532.0 520.0 L533.2 538.4 L534.5 550.0 L530.6 563.0 L529.3 575.9 L534.5 586.2 L537.0 594.0 L541.0 604.3 L542.0 614.9 L547.3 620.0" stroke="#000" stroke-width="1" shape-rendering="crispEdges"/>
<path d="M678.9 238.3 L690.5 233.6 L703.4 231.0 L711.2 225.9 L721.5 223.3 L731.9 220.7 L744.8 220.2 L770.7 221.2 L806.0 223.3" stroke="#000" stroke-width="1" shape-rendering="crispEdges"/>
<path d="M678.9 238.3 L676.6 240.9 L674.1 241.9 L672.1 244.9 L670.6 246.1 L666.4 249.3 L665.0 252.8 L662.5 255.6 L661.3 258.8 L661.7 261.8 L659.9 264.3 L663.7 266.9 L666.2 270.1 L668.9 272.4 L671.5 274.0 L675.7 277.0 L677.3 277.4 L680.8 280.8 L683.1 281.2 L685.9 284.7 L689.7 283.9 L694.0 283.5 L695.6 286.4 L697.7 290.7 L699.7 294.3 L701.6 297.8 L702.8 300.4 L705.5 304.9 L706.1 308.2 L708.0 311.3 L708.6 313.1 L710.4 317.2 L711.6 319.0 L712.6 321.2 L714.2 324.9 L717.3 327.4 L719.3 329.4 L721.2 331.5 L724.5 333.7 L727.3 336.3 L728.8 339.1 L731.7 341.4 L734.5 343.4 L737.0 345.6 L738.5 346.9 L741.8 350.5 L742.2 352.9 L744.7 354.3 L747.8 358.6 L750.6 360.8 L752.4 362.2 L754.6 365.2 L757.9 367.0 L761.2 368.8 L762.8 370.1 L765.1 373.2 L767.3 375.9 L766.2 380.0 L765.1 384.3 L768.8 386.3 L770.8 389.0 L773.7 391.1 L774.4 393.6 L777.0 397.0 L778.6 400.5 L781.3 402.8 L784.3 407.2 L786.1 407.2 L789.2 408.8 L793.5 410.2 L794.4 413.2 L797.4 415.2 L798.8 418.2 L800.5 421.8 L800.1 424.1 L802.2 428.0 L802.3 431.8 L804.8 437.1 L806.0 441.0" stroke="#000" stroke-width="1" shape-rendering="crispEdges"/>
<path d="M6.0 415.5 L78.9 415.5" stroke="#000" stroke-width="1" shape-rendering="crispEdges"/>
<path d="M45.3 594.0 L49.1 593.3 L51.7 593.7 L54.4 594.0 L57.3 593.6 L60.9 593.8 L63.4 593.5 L67.6 593.9 L69.7 593.9 L73.1 593.4 L75.2 594.6 L79.6 593.4 L82.5 593.6 L84.9 594.9 L88.6 594.7 L90.8 594.0 L93.8 594.7 L96.6 594.6 L100.8 594.8 L104.1 593.4 L106.7 594.4 L110.5 594.3 L112.4 594.5 L114.9 594.1 L119.0 593.6 L121.7 594.7 L125.8 593.4 L128.8 593.8 L131.1 594.4 L134.2 594.2 L137.2 593.6 L140.0 594.8 L143.5 594.6 L146.1 594.8 L149.5 593.6 L152.9 593.6 L155.7 594.0 L157.8 594.5 L161.2 593.2 L164.4 594.1 L167.9 594.2 L170.2 594.9 L174.2 594.2 L176.3 593.2 L180.9 593.5 L182.7 593.6 L185.8 594.4 L185.9 597.9 L184.0 600.5 L183.2 602.3 L182.7 605.1 L179.9 607.6 L179.3 612.9 L178.5 616.2 L177.5 618.7 L178.4 621.1 L176.7 625.5 L179.7 627.2 L180.3 631.0 L182.3 634.3 L183.4 636.2 L186.4 640.5 L188.2 643.1 L189.7 647.5 L190.2 649.2 L191.7 652.0 L192.6 656.3 L195.5 659.4 L197.0 660.6 L198.7 664.5 L199.3 666.4 L204.0 669.0" stroke="#000" stroke-width="1" shape-rendering="crispEdges"/>
<path d="M343.5 594.2 L537.0 594.2" stroke="#000" stroke-width="1" shape-rendering="crispEdges"/>
<path d="M343.5 594.2 L342.3 598.5 L341.2 601.6 L341.0 606.8 L343.0 607.9 L346.0 610.7 L347.7 613.7 L350.3 616.0 L352.3 617.5 L355.0 621.3 L358.3 622.4 L357.8 624.8 L358.1 629.0 L359.3 632.5 L358.3 635.4 L357.6 636.9 L355.8 640.3 L360.5 644.6" stroke="#000" stroke-width="1" shape-rendering="crispEdges"/>
<path d="M547.3 620.0 L600.0 622.5 L670.8 628.2 L743.0 631.9 L744.0 640.0 L746.0 648.0 L757.3 650.8 L759.0 642.0 L760.0 633.8 L757.3 616.8 L767.2 609.8 L781.4 615.4 L788.4 626.8 L795.5 633.8" stroke="#000" stroke-width="1" shape-rendering="crispEdges"/>
<path d="M201.7 8.9 L201.1 10.3 L200.4 10.4 L200.0 10.1 L200.4 9.7 L201.7 10.1 L204.0 11.4 L206.5 13.1 L208.6 14.3 L209.7 14.8 L210.0 14.7 L209.8 14.6 L208.7 15.8 L207.6 18.1 L206.4 20.8 L205.4 22.6 L204.8 22.7 L204.9 22.0 L205.9 22.3 L207.3 24.2 L208.1 27.1 L208.4 29.2 L208.7 29.8 L208.8 29.3 L209.1 29.3 L207.7 29.4 L205.6 30.5 L203.6 32.4 L202.1 34.5 L201.1 36.1 L200.4 36.7 L200.1 36.4 L200.1 36.0 L200.6 36.2 L201.3 37.3 L202.7 39.1 L205.4 40.8 L207.1 40.7 L207.1 40.0 L206.7 40.1 L207.3 41.4 L209.0 43.4 L210.0 45.1 L209.5 45.6 L209.1 44.9 L210.2 44.7 L212.0 46.1 L213.5 47.9 L214.9 48.4 L214.7 47.6 L213.6 48.5 L212.3 51.4 L211.2 53.9 L210.5 54.2 L210.6 53.7 L212.3 54.4 L215.4 55.7 L217.7 55.9 L217.9 55.2 L217.2 55.2 L217.2 57.4 L218.2 60.8 L218.8 62.6 L218.5 62.7 L219.0 62.1 L221.1 60.3 L223.0 57.7 L223.0 56.4 L222.4 56.6 L223.4 57.3 L226.1 59.0 L227.4 61.2 L227.2 61.5 L227.0 61.7 L227.1 61.6 L227.9 61.5 L229.5 61.7 L231.4 62.5 L233.1 63.7 L234.1 64.9 L234.5 65.5 L234.6 65.8 L234.4 66.0 L233.9 66.8 L233.5 68.0 L232.0 70.0 L230.1 71.5 L228.5 71.8 L227.8 71.4 L227.9 70.9 L228.1 71.0 L227.8 71.9 L227.5 73.8 L227.8 76.2 L229.3 78.0 L230.9 78.7 L231.6 77.8 L230.8 77.3 L230.4 79.5 L229.4 82.9 L227.5 83.8 L227.4 81.9 L228.7 81.6 L228.8 84.5 L228.3 87.9 L228.9 89.1 L229.7 88.0 L228.4 87.6 L225.9 89.1 L224.0 91.1 L222.9 92.1 L222.5 91.9 L223.1 91.6 L223.9 92.8 L224.2 95.4 L223.6 98.0 L223.2 99.4 L223.3 99.5 L223.0 99.2 L221.4 99.1 L218.7 98.5 L216.8 96.5 L217.6 95.0 L219.2 95.5 L219.4 96.5 L217.7 96.5 L214.6 95.4 L211.7 94.8 L210.9 96.2 L213.9 97.4 L216.0 95.1 L214.5 94.3 L212.1 95.9 L210.6 97.4 L209.6 98.4 L209.0 98.7 L209.0 98.7 L209.3 99.3 L209.5 100.8 L209.7 102.9 L209.6 104.9 L209.3 106.2 L209.1 106.8 L208.8 106.9 L209.4 107.5 L207.3 107.5 L204.3 107.4 L202.0 106.3 L202.6 104.2 L205.2 104.5 L206.1 106.1 L205.6 106.8 L204.4 106.0 L202.7 103.8 L201.0 101.3 L199.4 99.5 L199.8 99.9 L200.0 100.8 L201.9 101.0 L201.9 99.6 L199.7 99.6 L197.7 100.5 L196.8 101.2 L196.6 101.7 L196.8 102.3 L198.0 103.2 L200.2 104.2 L202.3 104.9 L205.5 105.1 L205.8 104.9 L205.8 105.3 L205.1 106.6 L202.6 108.3 L199.1 109.4 L196.5 109.7 L195.7 109.1 L196.1 108.4 L196.5 108.6 L196.6 110.7 L197.2 114.0 L198.2 116.0 L199.5 117.2 L200.6 117.6 L201.1 117.5 L201.2 117.5 L201.2 117.8 L201.0 118.8 L200.4 120.4 L198.8 121.8 L196.5 122.5 L194.2 122.6 L192.6 122.4 L191.4 121.9 L191.3 121.5 L191.5 121.5 L191.3 122.0 L190.6 123.2 L190.1 125.4 L190.7 127.9 L192.4 129.7 L194.1 130.7 L195.2 130.9 L195.6 130.7 L195.5 130.3 L193.5 131.9 L193.4 133.2 L193.2 135.2 L192.6 136.9 L191.8 137.5 L191.4 137.2 L191.7 137.1 L191.7 137.9 L191.4 139.6 L190.8 141.6 L190.4 143.2 L190.4 144.0 L191.4 144.8 L191.3 144.3 L190.3 144.3 L188.6 145.2 L186.9 147.1 L185.8 149.3 L185.4 151.0 L185.3 151.9 L185.3 152.1 L185.7 152.1 L186.8 152.2 L188.8 152.9 L190.9 154.4 L191.6 156.1 L191.4 157.3 L191.3 157.5 L190.7 157.5 L189.4 157.6 L187.2 157.8 L184.9 158.1 L183.3 158.3 L182.8 158.5 L182.7 158.9 L182.8 159.8 L183.4 161.3 L185.2 163.5 L186.9 164.9 L187.9 165.5 L188.2 165.5 L188.0 165.8 L187.2 167.1 L185.1 168.1 L182.6 167.9 L181.0 167.0 L180.7 166.3 L181.1 166.2 L180.9 167.3 L179.6 168.6 L177.5 170.3 L176.1 171.7 L175.9 172.4 L176.4 172.1 L176.3 171.2 L174.6 170.9 L172.9 172.4 L172.0 174.2 L171.8 174.9 L171.8 174.8 L171.0 174.6 L172.9 175.8 L175.2 178.1 L177.3 180.5 L178.3 182.1 L178.5 182.6 L178.4 182.7 L177.5 182.8 L175.1 183.0 L171.8 183.1 L168.8 183.1 L167.1 182.8 L167.9 183.5 L167.6 183.8 L167.3 184.7 L167.6 186.2 L168.9 187.9 L170.6 189.6 L171.6 190.9 L171.7 192.1 L171.4 192.7 L171.0 193.0 L169.9 193.1 L168.1 193.1 L165.5 193.1 L163.2 192.8 L162.4 192.3 L162.9 192.0 L162.9 192.6 L162.0 194.3 L161.2 196.9 L162.2 198.7 L163.5 198.1 L163.3 196.7 L162.8 196.9 L162.5 198.8 L161.7 201.3 L160.2 201.6 L160.2 200.2 L161.1 199.9 L160.8 200.7 L159.2 202.0 L157.2 203.5 L156.3 204.5 L156.6 204.7 L157.1 203.8 L156.0 203.0 L154.6 204.4 L154.4 206.1 L154.6 207.5 L154.6 208.0 L154.8 208.0 L155.4 208.0 L156.0 208.6 L156.4 210.0 L156.8 211.4 L157.4 211.9 L157.9 211.6 L158.0 211.5 L158.0 212.0 L158.2 212.8 L158.4 215.1 L158.4 217.5 L157.7 218.9 L156.9 218.7 L156.9 217.8 L157.5 217.6 L157.7 218.9 L157.5 221.1 L157.1 223.6 L157.0 225.4 L157.1 226.1 L158.1 226.8 L157.9 226.5 L157.0 226.6 L155.0 227.3 L152.4 228.3 L149.8 229.0 L147.8 229.3 L146.9 228.9 L146.9 228.5 L147.3 228.5 L147.4 229.3 L147.0 231.0 L146.0 233.5 L145.2 236.1 L145.5 238.1 L146.7 238.5 L147.5 237.4 L147.2 236.3 L146.6 236.3 L145.9 237.7 L145.5 240.2 L145.1 242.9 L144.7 245.1 L144.0 246.1 L143.4 245.4 L143.8 243.9 L145.5 243.7 L146.2 245.9 L145.0 248.7 L143.7 250.6 L143.7 251.5 L144.3 251.3 L144.1 250.7 L142.2 250.1 L139.2 249.6 L136.3 249.1 L135.2 248.5 L135.6 247.9 L136.5 248.2 L136.2 249.5 L133.9 250.7 L130.9 251.4 L129.1 251.9 L129.6 252.8 L131.8 252.3 L131.9 250.5 L129.9 250.7 L127.6 252.7 L126.1 254.2 L125.3 254.5 L125.2 254.2 L125.8 254.4 L126.5 256.1 L127.2 258.8 L127.9 261.3 L128.5 262.3 L128.8 262.1 L128.5 261.9 L127.3 262.7 L125.4 264.6 L123.5 266.5 L122.6 266.9 L122.6 266.6 L123.3 267.6 L124.5 269.9 L126.1 271.7 L126.9 271.7 L126.6 271.3 L126.0 272.4 L125.5 275.1 L124.8 277.2 L124.1 277.2 L124.2 277.1 L124.5 277.2 L124.9 278.1 L125.0 279.5 L125.0 281.4 L125.0 283.3 L125.0 285.0 L125.1 286.2 L125.1 287.0 L125.1 287.3 L124.9 287.7 L124.3 288.3 L124.0 289.0 L121.9 290.1 L119.3 290.8 L117.1 290.7 L115.9 290.2 L115.8 289.8 L116.0 289.6 L116.2 290.1 L115.6 291.4 L114.3 293.4 L112.8 295.6 L111.7 297.7 L111.5 298.6 L111.6 299.1 L111.8 299.0 L111.5 298.9 L110.4 299.0 L108.5 299.5 L106.2 300.3 L104.0 301.1 L102.4 301.5 L101.6 301.5 L101.5 301.4 L101.6 301.5 L101.8 303.4 L101.2 304.8 L100.5 306.5 L99.9 308.2 L100.0 309.3 L100.4 309.7 L100.5 309.5 L100.2 309.7 L99.9 310.6 L99.6 312.3 L99.4 314.2 L99.1 315.9 L98.3 316.9 L98.4 316.5 L99.3 316.7 L100.3 318.8 L100.4 321.2 L100.4 322.1 L100.4 322.0 L99.2 321.9 L96.7 322.5 L94.4 322.9 L93.6 322.7 L93.9 322.6 L93.7 323.9 L92.9 326.0 L92.1 328.0 L92.1 329.0 L92.3 328.9 L91.6 328.9 L89.9 329.7 L88.0 330.9 L86.7 331.6 L86.3 331.6 L86.5 331.9 L86.6 333.4 L86.7 336.1 L87.8 338.3 L88.9 337.6 L88.4 336.2 L87.2 337.0 L86.6 340.2 L86.2 343.1 L85.5 343.8 L85.1 343.1 L86.2 343.0 L88.9 344.5 L91.5 346.5 L93.6 347.9 L93.7 347.8 L93.2 348.0 L90.5 348.6 L86.3 348.8 L83.3 348.1 L83.1 347.0 L84.4 346.6 L84.7 348.1 L83.2 351.5 L81.6 355.0 L81.5 356.9 L81.7 356.0 L82.0 355.5 L81.6 354.8 L80.2 354.6 L78.5 355.8 L77.3 358.0 L76.8 360.0 L76.3 361.2 L76.0 361.3 L76.0 361.2 L76.6 361.2 L77.8 362.1 L79.2 364.0 L79.9 366.0 L80.1 367.8 L80.1 369.0 L80.0 369.6 L79.9 369.7 L79.4 369.8 L78.4 370.2 L76.8 371.0 L75.5 372.4 L74.9 374.1 L75.1 375.5 L74.8 377.6 L74.9 377.7 L74.9 377.5 L75.5 377.2 L77.0 377.1 L79.3 377.4 L81.9 377.9 L84.4 378.2 L86.3 378.5 L87.3 378.6 L87.7 378.8 L87.9 379.1 L87.1 380.4 L86.6 381.6 L85.4 383.4 L84.0 385.4 L82.6 387.1 L81.6 388.0 L81.1 388.3 L81.0 388.2 L81.3 388.3 L81.8 389.1 L82.4 390.8 L82.9 393.1 L83.4 395.7 L83.7 397.7 L84.1 398.7 L84.5 398.7 L84.5 397.9 L83.8 397.1 L82.8 397.1 L81.9 398.6 L81.3 400.7 L79.8 401.7 L78.1 401.7 L77.1 401.1 L76.6 400.4 L76.8 400.3 L76.7 401.1 L76.8 403.2 L78.1 405.7 L80.5 407.5 L82.7 408.3 L83.8 408.1 L84.0 407.5 L83.6 407.3 L83.4 408.0 L83.2 410.0 L82.1 412.8 L80.7 414.3 L79.2 414.9 L78.3 414.8 L78.2 414.5 L78.3 414.6 L78.4 415.4 L78.0 417.0 L77.6 419.2 L77.9 421.2 L79.2 421.8 L79.9 421.1 L79.4 420.7 L79.3 420.8 L79.6 421.8 L80.3 423.5 L81.3 425.5 L82.1 427.2 L82.4 428.3 L82.3 428.5 L82.2 428.1 L82.8 427.7 L83.8 428.3 L84.2 430.2 L84.5 433.4 L85.1 434.8 L85.9 434.1 L85.4 433.4 L83.0 434.1 L79.8 435.7 L77.3 436.6 L76.5 436.3 L76.8 435.8 L77.5 437.0 L79.4 439.5 L82.2 441.3 L84.4 441.7 L85.1 441.3 L85.0 440.7 L84.5 440.5 L84.0 441.2 L83.7 443.2 L83.8 446.0 L83.9 449.0 L83.7 451.4 L83.2 452.6 L82.5 452.7 L82.2 452.1 L83.7 451.8 L84.7 452.2 L86.3 453.3 L88.1 454.7 L90.0 456.2 L91.6 457.2 L92.5 457.6 L92.9 457.5 L92.8 457.3 L92.5 457.6 L92.4 458.7 L92.6 460.5 L93.0 464.0 L92.9 466.2 L92.2 466.3 L92.3 465.6 L94.3 465.9 L97.5 467.1 L99.7 467.5 L100.1 467.0 L99.7 466.9 L99.3 468.9 L98.2 471.9 L96.3 473.0 L94.8 472.8 L94.7 472.1 L95.0 471.9 L95.4 472.5 L95.6 474.0 L95.5 476.2 L94.9 478.9 L94.2 481.3 L93.8 483.1 L93.7 484.2 L94.0 484.4 L94.1 484.2 L92.9 483.4 L91.2 483.6 L89.0 484.5 L87.0 486.1 L85.9 487.6 L85.5 488.2 L85.5 488.1 L86.0 488.3 L87.0 489.4 L88.5 491.4 L89.9 493.5 L91.0 495.1 L90.9 495.2 L90.8 495.3 L90.1 495.9 L88.4 497.3 L86.4 498.6 L85.1 499.1 L84.8 499.0 L85.0 499.1 L85.1 500.4 L84.9 502.7 L84.7 504.9 L84.9 506.0 L86.9 506.6 L85.9 505.9 L82.3 506.7 L78.2 507.6 L76.7 506.8 L77.7 505.6 L78.6 506.7 L78.1 510.6 L77.5 514.5 L78.4 515.7 L79.5 514.5 L78.2 513.7 L75.1 514.6 L73.4 515.6 L72.0 516.6 L71.0 517.2 L70.5 517.4 L70.4 517.5 L70.4 518.1 L70.3 519.2 L70.0 521.0 L69.7 522.9 L69.4 524.6 L69.2 525.7 L69.1 525.9 L68.8 526.0 L68.0 526.4 L66.5 527.1 L64.7 528.0 L63.2 528.8 L62.3 529.1 L62.1 529.2 L62.0 529.6 L61.8 530.7 L61.4 532.5 L61.0 534.4 L61.5 537.5 L62.3 537.5 L62.6 536.6 L61.0 536.5 L57.9 537.7 L54.8 538.9 L53.3 538.9 L53.4 538.1 L54.1 538.2 L54.7 540.4 L55.4 544.0 L56.3 546.5 L56.4 546.8 L56.7 546.8 L56.5 546.6 L55.7 546.9 L54.4 548.0 L52.7 549.7 L51.0 551.4 L49.6 552.5 L48.9 552.9 L48.7 552.8 L49.0 552.9 L49.4 553.7 L50.1 555.8 L51.0 559.0 L52.0 561.2 L52.7 561.5 L52.9 560.8 L51.9 560.9 L49.8 562.5 L47.2 564.5 L45.1 565.6 L44.4 565.2 L44.8 564.5 L45.4 565.3 L45.6 567.4 L45.8 569.5 L46.3 571.5 L47.2 573.1 L48.1 573.9 L48.8 574.2 L48.9 574.2 L48.8 574.4 L48.5 575.0 L48.2 576.2 L47.8 578.1 L47.3 580.2 L46.5 581.9 L45.9 582.3 L46.0 582.1 L46.5 583.1 L47.2 585.3 L47.8 587.1 L48.2 587.6 L48.1 587.5 L47.1 588.4 L45.7 590.3 L44.5 591.7 L44.0 591.9 L42.4 589.9 L44.2 591.0" stroke="#000" stroke-width="1"/>
<path d="M227.0 57.1 L227.7 56.7 L228.2 56.4 L228.9 55.7 L229.3 55.2 L229.8 54.6 L230.2 53.9 L230.6 52.9 L231.1 51.8 L231.7 50.5 L232.3 49.2 L232.9 48.0 L233.4 46.8 L233.9 46.0 L234.3 45.4 L234.7 45.0 L235.3 44.6 L236.0 44.1 L237.0 43.5 L238.2 42.8 L239.5 42.1 L240.7 41.5 L241.8 41.1 L242.6 41.0 L242.9 40.6 L243.5 40.5 L244.2 40.3 L245.2 40.0 L246.3 39.7 L247.6 39.3 L248.9 38.9 L250.0 38.5 L251.0 38.4 L251.8 38.4 L252.6 38.5 L253.4 38.8 L254.3 39.4 L255.3 40.0 L256.4 40.5 L257.4 41.1 L258.4 41.6 L259.3 42.1 L260.1 42.5 L260.7 43.0 L261.2 43.4 L261.7 43.8 L262.2 44.5 L262.6 45.4 L263.3 46.6 L264.2 47.8 L264.9 48.6 L265.2 48.9 L265.3 49.1 L265.6 49.9 L266.4 50.9 L267.6 51.9 L268.6 52.7 L269.2 53.1 L269.7 53.3 L270.5 53.3 L271.8 53.4 L273.0 53.7 L274.2 53.6 L275.3 53.3 L276.0 52.9 L276.6 52.4 L277.2 51.9 L277.8 51.5 L278.6 51.1 L279.6 50.7 L280.8 50.2 L281.7 49.5 L282.8 48.4 L283.3 47.2 L283.4 46.2 L283.3 45.4 L283.1 44.8 L282.8 44.2 L282.3 43.4 L281.6 42.3 L280.8 41.0 L279.9 39.6 L279.1 38.3 L278.5 37.2 L278.4 36.8 L278.4 36.3 L278.5 35.4 L278.7 33.8 L278.9 32.0 L279.1 30.8 L279.2 30.3 L279.0 30.1 L278.6 29.4 L278.7 28.0 L279.3 26.5 L280.0 25.6 L280.4 25.4 L281.1 25.3 L282.5 25.0 L284.1 24.6 L285.2 24.5 L285.6 24.4 L286.1 23.9 L287.2 23.1 L288.6 22.2 L289.5 21.6 L290.0 21.5 L290.7 21.6 L292.0 21.7 L294.1 22.2 L295.2 22.6 L295.4 22.8 L295.8 22.3 L297.0 21.3 L298.6 20.0 L299.6 18.9 L299.7 18.6 L300.0 18.8 L301.4 19.0 L303.5 19.2 L305.0 19.2 L305.9 19.2 L306.4 19.2 L306.9 18.9 L307.5 18.2 L308.1 16.9 L308.0 15.3 L307.4 13.9 L306.8 12.9 L306.4 12.4 L306.4 12.0 L306.6 11.3 L306.6 10.1 L306.5 8.6 L306.1 7.1 L305.8 6.1 L305.7 5.3" stroke="#000" stroke-width="1"/>
<circle cx="407" cy="407" r="159.5" stroke="#dcdcdc" stroke-width="1" shape-rendering="crispEdges" stroke-dasharray="740.1 23.0 250.5"/>
<circle cx="407" cy="407" r="279.5" stroke="#dcdcdc" stroke-width="1" shape-rendering="crispEdges" stroke-dasharray="1305.6 23.0 439.0"/>
<circle cx="407" cy="407" r="399.5" stroke="#dcdcdc" stroke-width="1" shape-rendering="crispEdges" stroke-dasharray="1871.1 23.0 627.5"/>
<circle cx="407" cy="407" r="519.5" stroke="#dcdcdc" stroke-width="1" shape-rendering="crispEdges" stroke-dasharray="2436.6 23.0 816.0"/>
</g>
<text x="406" y="11.5" text-anchor="middle" letter-spacing="0.9" font-family="'DejaVu Sans','Liberation Sans',sans-serif" font-size="9.6" fill="#ffff9a" clip-path="url(#mc)">313</text>
<text x="406" y="131.2" text-anchor="middle" letter-spacing="0.9" font-family="'DejaVu Sans','Liberation Sans',sans-serif" font-size="9.6" fill="#ffff9a" clip-path="url(#mc)">219</text>
<text x="406" y="251.2" text-anchor="middle" letter-spacing="0.9" font-family="'DejaVu Sans','Liberation Sans',sans-serif" font-size="9.6" fill="#ffff9a" clip-path="url(#mc)">125</text>
<text x="406" y="371.2" text-anchor="middle" letter-spacing="0.9" font-family="'DejaVu Sans','Liberation Sans',sans-serif" font-size="9.6" fill="#ffff9a" clip-path="url(#mc)">31</text>
<circle cx="407" cy="407" r="39.5" stroke="#ff0000" stroke-width="1" fill="none" shape-rendering="crispEdges"/>
<g stroke="#f0b000" stroke-width="1.15" fill="none"><circle cx="361.4" cy="717.5" r="4.1"/><path d="M358.9 717.5 h5 M361.4 715.0 v5"/></g>
<g stroke="#f08800" stroke-width="1.15" fill="none"><circle cx="755.4" cy="735.5" r="4.1"/><path d="M752.9 735.5 h5 M755.4 733.0 v5"/></g>
</svg>
<svg width="1138" height="812" viewBox="0 0 1138 812" style="position:absolute;left:0;top:0">
<rect x="8" y="757.5" width="245" height="47.5" fill="#000"/>
<rect x="9.5" y="759" width="242.5" height="44" fill="none" stroke="#8a8a8a" stroke-width="1"/>
<text x="13.3" y="771.2" font-family="'DejaVu Sans Condensed','DejaVu Sans','Liberation Sans',sans-serif" font-size="10" fill="#e8e8e8" font-weight="normal" text-anchor="start" textLength="35.4" lengthAdjust="spacingAndGlyphs">Symbols</text>
<text x="53" y="771.2" font-family="'DejaVu Sans Condensed','DejaVu Sans','Liberation Sans',sans-serif" font-size="10" fill="#fff" font-weight="normal" text-anchor="start" textLength="16.7" lengthAdjust="spacingAndGlyphs">-CG</text>
<text x="77.7" y="771.2" font-family="'DejaVu Sans Condensed','DejaVu Sans','Liberation Sans',sans-serif" font-size="10" fill="#fff" font-weight="normal" text-anchor="start" textLength="14" lengthAdjust="spacingAndGlyphs">-IC</text>
<text x="98.7" y="771.2" font-family="'DejaVu Sans Condensed','DejaVu Sans','Liberation Sans',sans-serif" font-size="10" fill="#fff" font-weight="normal" text-anchor="start" textLength="20" lengthAdjust="spacingAndGlyphs">+CG</text>
<text x="123.4" y="771.2" font-family="'DejaVu Sans Condensed','DejaVu Sans','Liberation Sans',sans-serif" font-size="10" fill="#fff" font-weight="normal" text-anchor="start" textLength="17.8" lengthAdjust="spacingAndGlyphs">+IC</text>
<text x="153" y="771.2" font-family="'DejaVu Sans Condensed','DejaVu Sans','Liberation Sans',sans-serif" font-size="10" fill="#e8e8e8" font-weight="normal" text-anchor="start" textLength="89.5" lengthAdjust="spacingAndGlyphs">Strike age color codes</text>
<text x="13.3" y="784" font-family="'DejaVu Sans Condensed','DejaVu Sans','Liberation Sans',sans-serif" font-size="10" fill="#e8e8e8" font-weight="normal" text-anchor="start" textLength="27.8" lengthAdjust="spacingAndGlyphs">Recent</text>
<text x="13.3" y="796.8" font-family="'DejaVu Sans Condensed','DejaVu Sans','Liberation Sans',sans-serif" font-size="10" fill="#e8e8e8" font-weight="normal" text-anchor="start" textLength="14" lengthAdjust="spacingAndGlyphs">Old</text>
<g stroke="#00e0e8" stroke-width="1" fill="none">
<circle cx="60.5" cy="780.4" r="3.9"/><path d="M58 780.4 h5"/>
<path d="M82 780.4 h6.4"/>
<circle cx="110" cy="780.4" r="3.9"/><path d="M107.5 780.4 h5 M110 777.9 v5"/>
<path d="M132 780.4 h6.6 M135.3 777.1 v6.6"/>
</g>
<g stroke="#f0f000" stroke-width="1" fill="none">
<circle cx="60.5" cy="793.2" r="3.9"/><path d="M58 793.2 h5"/>
<path d="M82 793.2 h6.4"/>
<circle cx="110" cy="793.2" r="3.9"/><path d="M107.5 793.2 h5 M110 790.7 v5"/>
<path d="M132 793.2 h6.6 M135.3 789.9 v6.6"/>
</g>
<text x="153.5" y="784" font-family="'DejaVu Sans Condensed','DejaVu Sans','Liberation Sans',sans-serif" font-size="10" fill="#e8e000" font-weight="normal" text-anchor="start" textLength="16.2" lengthAdjust="spacingAndGlyphs">15+</text>
<text x="153.5" y="796.8" font-family="'DejaVu Sans Condensed','DejaVu Sans','Liberation Sans',sans-serif" font-size="10" fill="#d88400" font-weight="normal" text-anchor="start" textLength="16.2" lengthAdjust="spacingAndGlyphs">60+</text>
<text x="188.5" y="784" font-family="'DejaVu Sans Condensed','DejaVu Sans','Liberation Sans',sans-serif" font-size="10" fill="#e4b400" font-weight="normal" text-anchor="start" textLength="16.2" lengthAdjust="spacingAndGlyphs">30+</text>
<text x="188.5" y="796.8" font-family="'DejaVu Sans Condensed','DejaVu Sans','Liberation Sans',sans-serif" font-size="10" fill="#d85c00" font-weight="normal" text-anchor="start" textLength="16.2" lengthAdjust="spacingAndGlyphs">75+</text>
<text x="223.4" y="784" font-family="'DejaVu Sans Condensed','DejaVu Sans','Liberation Sans',sans-serif" font-size="10" fill="#e09800" font-weight="normal" text-anchor="start" textLength="16.2" lengthAdjust="spacingAndGlyphs">45+</text>
<text x="223.4" y="796.8" font-family="'DejaVu Sans Condensed','DejaVu Sans','Liberation Sans',sans-serif" font-size="10" fill="#dc3400" font-weight="normal" text-anchor="start" textLength="16.2" lengthAdjust="spacingAndGlyphs">90+</text>
<rect x="685" y="792" width="121.5" height="14.5" fill="#000"/>
<text x="688.7" y="802.6" font-family="'DejaVu Sans Condensed','DejaVu Sans','Liberation Sans',sans-serif" font-size="10" fill="#fff" font-weight="normal" text-anchor="start" textLength="113" lengthAdjust="spacingAndGlyphs">©2005 Astrogenic Systems</text>
</svg>
<svg width="1138" height="812" viewBox="0 0 1138 812" style="position:absolute;left:0;top:0">
<rect x="812.5" y="8.5" width="319" height="319.0" rx="6" ry="6" fill="none" stroke="#b8b8b8" stroke-width="1"/>
<rect x="812.5" y="333.5" width="319" height="114.0" rx="6" ry="6" fill="none" stroke="#b8b8b8" stroke-width="1"/>
<rect x="812.5" y="453.5" width="319" height="349.0" rx="6" ry="6" fill="none" stroke="#b8b8b8" stroke-width="1"/>
<rect x="819.5" y="17.2" width="57" height="16.1" fill="#5c0000" stroke="#c8a8a8"/>
<text x="824.8" y="30" font-family="'DejaVu Sans','Liberation Sans',sans-serif" font-size="12" fill="#f4d8d8" font-weight="bold" text-anchor="start" textLength="46.8" lengthAdjust="spacingAndGlyphs">STRIKE</text>
<rect x="883.5" y="17.2" width="57" height="16.1" fill="#303030" stroke="#8c8c8c"/>
<text x="890.7" y="30" font-family="'DejaVu Sans','Liberation Sans',sans-serif" font-size="12" fill="#c4c4c4" font-weight="bold" text-anchor="start" textLength="42.7" lengthAdjust="spacingAndGlyphs">NOISE</text>
<rect x="994.5" y="17.2" width="127" height="16.1" fill="#1c1c1c" stroke="#8c8c8c"/>
<text x="998.5" y="30" font-family="'DejaVu Sans','Liberation Sans',sans-serif" font-size="12.2" fill="#fff" font-weight="bold" text-anchor="start" >Bng 181°</text>
<text x="1118" y="30" font-family="'DejaVu Sans','Liberation Sans',sans-serif" font-size="12.3" fill="#00e400" font-weight="bold" text-anchor="end" >357mi</text>
<rect x="821.5" y="64.5" width="81" height="15" fill="#5e5e5e" stroke="#c4c4c4"/>
<text x="862.0" y="76.3" font-family="'DejaVu Sans','Liberation Sans',sans-serif" font-size="11.7" fill="#fff" font-weight="normal" text-anchor="middle" >Strikes/min</text>
<rect x="931.5" y="64.5" width="81" height="15" fill="#5e5e5e" stroke="#c4c4c4"/>
<text x="972.0" y="76.3" font-family="'DejaVu Sans','Liberation Sans',sans-serif" font-size="11.7" fill="#fff" font-weight="normal" text-anchor="middle" >Close/min</text>
<rect x="1041.5" y="64.5" width="81" height="15" fill="#5e5e5e" stroke="#c4c4c4"/>
<text x="1081.2" y="76.3" font-family="'DejaVu Sans','Liberation Sans',sans-serif" font-size="11.7" fill="#fff" font-weight="normal" text-anchor="middle" >Noises/min</text>
<text x="902.5" y="111.5" font-family="'DejaVu Sans','Liberation Sans',sans-serif" font-size="28" fill="#fff" font-weight="bold" text-anchor="end" >0</text>
<text x="1012.5" y="111.5" font-family="'DejaVu Sans','Liberation Sans',sans-serif" font-size="28" fill="#fff" font-weight="bold" text-anchor="end" >0</text>
<text x="1122.5" y="111.5" font-family="'DejaVu Sans','Liberation Sans',sans-serif" font-size="28" fill="#b4b4b4" font-weight="bold" text-anchor="end" >0</text>
<text x="902.5" y="142.7" font-family="'DejaVu Sans','Liberation Sans',sans-serif" font-size="12.6" fill="#fff" font-weight="normal" text-anchor="end" >Total Strikes</text>
<text x="902.5" y="161" font-family="'DejaVu Sans','Liberation Sans',sans-serif" font-size="12.6" fill="#fff" font-weight="normal" text-anchor="end" >1</text>
<text x="1012.5" y="142.7" font-family="'DejaVu Sans','Liberation Sans',sans-serif" font-size="12.6" fill="#fff" font-weight="normal" text-anchor="end" >Total Close</text>
<text x="1012.5" y="161" font-family="'DejaVu Sans','Liberation Sans',sans-serif" font-size="12.6" fill="#fff" font-weight="normal" text-anchor="end" >0</text>
<text x="1122.5" y="142.7" font-family="'DejaVu Sans','Liberation Sans',sans-serif" font-size="12.6" fill="#d4d4d4" font-weight="normal" text-anchor="end" >Total Noises</text>
<text x="1122.5" y="161" font-family="'DejaVu Sans','Liberation Sans',sans-serif" font-size="12.6" fill="#d4d4d4" font-weight="normal" text-anchor="end" >2</text>
<text x="821" y="215" font-family="'DejaVu Sans','Liberation Sans',sans-serif" font-size="12.5" fill="#c4c4c4" font-weight="normal" text-anchor="start" >Lightning type distribution</text>
<rect x="821" y="217" width="302.5" height="1" fill="#8a8a8a"/>
<text x="821" y="236.9" font-family="'DejaVu Sans Condensed','DejaVu Sans','Liberation Sans',sans-serif" font-size="13" fill="#fff" font-weight="bold" text-anchor="start" textLength="84" lengthAdjust="spacingAndGlyphs">Cloud-ground</text>
<text x="913" y="236.9" font-family="'DejaVu Sans Condensed','DejaVu Sans','Liberation Sans',sans-serif" font-size="13" fill="#fff" font-weight="bold" text-anchor="start" >+</text>
<rect x="926" y="227.5" width="49" height="10" rx="1.5" fill="#ff0000" stroke="#a8a8a8"/>
<text x="980" y="236.9" font-family="'DejaVu Sans Condensed','DejaVu Sans','Liberation Sans',sans-serif" font-size="13" fill="#fff" font-weight="bold" text-anchor="start" >100%</text>
<text x="1016" y="236.9" font-family="'DejaVu Sans','Liberation Sans',sans-serif" font-size="14" fill="#fff" font-weight="bold" text-anchor="start" >–</text>
<rect x="1028.5" y="227.5" width="50" height="10" rx="1.5" fill="none" stroke="#a8a8a8"/>
<text x="1082.5" y="236.9" font-family="'DejaVu Sans Condensed','DejaVu Sans','Liberation Sans',sans-serif" font-size="13" fill="#fff" font-weight="bold" text-anchor="start" >0%</text>
<text x="821" y="290.5" font-family="'DejaVu Sans Condensed','DejaVu Sans','Liberation Sans',sans-serif" font-size="13" fill="#fff" font-weight="bold" text-anchor="start" textLength="63.5" lengthAdjust="spacingAndGlyphs">Intracloud</text>
<text x="913" y="290.5" font-family="'DejaVu Sans Condensed','DejaVu Sans','Liberation Sans',sans-serif" font-size="13" fill="#fff" font-weight="bold" text-anchor="start" >+</text>
<rect x="926" y="281.1" width="49" height="10" rx="1.5" fill="none" stroke="#a8a8a8"/>
<text x="980" y="290.5" font-family="'DejaVu Sans Condensed','DejaVu Sans','Liberation Sans',sans-serif" font-size="13" fill="#fff" font-weight="bold" text-anchor="start" >0%</text>
<text x="1016" y="290.5" font-family="'DejaVu Sans','Liberation Sans',sans-serif" font-size="14" fill="#fff" font-weight="bold" text-anchor="start" >–</text>
<rect x="1028.5" y="281.1" width="50" height="10" rx="1.5" fill="none" stroke="#a8a8a8"/>
<text x="1082.5" y="290.5" font-family="'DejaVu Sans Condensed','DejaVu Sans','Liberation Sans',sans-serif" font-size="13" fill="#fff" font-weight="bold" text-anchor="start" >0%</text>
<text x="821" y="260.8" font-family="'DejaVu Sans Condensed','DejaVu Sans','Liberation Sans',sans-serif" font-size="13" fill="#cfcfcf" font-weight="bold" text-anchor="start" >Count</text>
<text x="925.5" y="260.8" font-family="'DejaVu Sans Condensed','DejaVu Sans','Liberation Sans',sans-serif" font-size="13" fill="#fff" font-weight="bold" text-anchor="start" >1</text>
<text x="1028.5" y="260.8" font-family="'DejaVu Sans Condensed','DejaVu Sans','Liberation Sans',sans-serif" font-size="13" fill="#fff" font-weight="bold" text-anchor="start" >0</text>
<text x="821" y="314.5" font-family="'DejaVu Sans Condensed','DejaVu Sans','Liberation Sans',sans-serif" font-size="13" fill="#cfcfcf" font-weight="bold" text-anchor="start" >Count</text>
<text x="925.5" y="314.5" font-family="'DejaVu Sans Condensed','DejaVu Sans','Liberation Sans',sans-serif" font-size="13" fill="#fff" font-weight="bold" text-anchor="start" >0</text>
<text x="1028.5" y="314.5" font-family="'DejaVu Sans Condensed','DejaVu Sans','Liberation Sans',sans-serif" font-size="13" fill="#fff" font-weight="bold" text-anchor="start" >0</text>
<text x="821.3" y="353.3" font-family="'DejaVu Sans','Liberation Sans',sans-serif" font-size="16.6" fill="#00e400" font-weight="bold" text-anchor="start" textLength="97.8" lengthAdjust="spacing">3/21/2026</text>
<text x="927.4" y="353.3" font-family="'DejaVu Sans','Liberation Sans',sans-serif" font-size="16.6" fill="#00e400" font-weight="bold" text-anchor="start" textLength="74" lengthAdjust="spacingAndGlyphs">12:20:18</text>
<text x="1009.2" y="353.3" font-family="'DejaVu Sans','Liberation Sans',sans-serif" font-size="16.6" fill="#00e400" font-weight="bold" text-anchor="start" textLength="24.8" lengthAdjust="spacingAndGlyphs">AM</text>
<rect x="821" y="358.3" width="302.5" height="1" fill="#8a8a8a"/>
<text x="821" y="388" font-family="'DejaVu Sans','Liberation Sans',sans-serif" font-size="12.5" fill="#fff" font-weight="normal" text-anchor="start" >Squelch</text>
<text x="909.5" y="388" font-family="'DejaVu Sans','Liberation Sans',sans-serif" font-size="12.5" fill="#fff" font-weight="normal" text-anchor="start" >0</text>
<text x="981.3" y="388" font-family="'DejaVu Sans','Liberation Sans',sans-serif" font-size="12.5" fill="#fff" font-weight="normal" text-anchor="start" >Upload</text>
<text x="1061" y="388" font-family="'DejaVu Sans','Liberation Sans',sans-serif" font-size="12.5" fill="#c4c4c4" font-weight="normal" text-anchor="start" >Disabled</text>
<text x="821" y="407.8" font-family="'DejaVu Sans','Liberation Sans',sans-serif" font-size="12.5" fill="#fff" font-weight="normal" text-anchor="start" >Persistence</text>
<text x="909.5" y="407.8" font-family="'DejaVu Sans','Liberation Sans',sans-serif" font-size="12.5" fill="#fff" font-weight="normal" text-anchor="start" >90 min</text>
<text x="981.3" y="407.8" font-family="'DejaVu Sans','Liberation Sans',sans-serif" font-size="12.5" fill="#fff" font-weight="normal" text-anchor="start" >Capture</text>
<text x="1061" y="407.8" font-family="'DejaVu Sans','Liberation Sans',sans-serif" font-size="12.5" fill="#00d800" font-weight="normal" text-anchor="start" >Active</text>
<text x="821" y="427.7" font-family="'DejaVu Sans','Liberation Sans',sans-serif" font-size="12.5" fill="#fff" font-weight="normal" text-anchor="start" >Range</text>
<text x="909.5" y="427.7" font-family="'DejaVu Sans','Liberation Sans',sans-serif" font-size="12.5" fill="#fff" font-weight="normal" text-anchor="start" >313 mi</text>
<text x="981.3" y="427.7" font-family="'DejaVu Sans','Liberation Sans',sans-serif" font-size="12.5" fill="#fff" font-weight="normal" text-anchor="start" >Receiver</text>
<text x="1061" y="427.7" font-family="'DejaVu Sans','Liberation Sans',sans-serif" font-size="12.5" fill="#00d800" font-weight="normal" text-anchor="start" >Enabled</text>
<text x="821" y="475" font-family="'DejaVu Sans','Liberation Sans',sans-serif" font-size="12.5" fill="#d0d0d0" font-weight="normal" text-anchor="start" >Uptime</text>
<text x="910" y="475" font-family="'DejaVu Sans','Liberation Sans',sans-serif" font-size="12.5" fill="#fff" font-weight="normal" text-anchor="start" >1620:05</text>
<text x="981.3" y="475" font-family="'DejaVu Sans','Liberation Sans',sans-serif" font-size="12.5" fill="#d0d0d0" font-weight="normal" text-anchor="start" >Peak time</text>
<text x="1061" y="475" font-family="'DejaVu Sans','Liberation Sans',sans-serif" font-size="12.5" fill="#d0d0d0" font-weight="normal" text-anchor="start" >Plot</text>
<text x="821" y="498" font-family="'DejaVu Sans','Liberation Sans',sans-serif" font-size="12.5" fill="#d0d0d0" font-weight="normal" text-anchor="start" >Peak rate</text>
<text x="910" y="498" font-family="'DejaVu Sans','Liberation Sans',sans-serif" font-size="12.5" fill="#fff" font-weight="normal" text-anchor="start" >1/min</text>
<text x="982" y="498" font-family="'DejaVu Sans','Liberation Sans',sans-serif" font-size="12.5" fill="#fff" font-weight="normal" text-anchor="start" >12:12 AM</text>
<text x="1061" y="498" font-family="'DejaVu Sans','Liberation Sans',sans-serif" font-size="12.5" fill="#fff" font-weight="normal" text-anchor="start" >Strike</text>
<text x="822" y="527.5" font-family="'DejaVu Sans','Liberation Sans',sans-serif" font-size="12.5" fill="#d0d0d0" font-weight="normal" text-anchor="start" >Trend graph</text>
<text x="908.4" y="527.5" font-family="'DejaVu Sans','Liberation Sans',sans-serif" font-size="12.5" fill="#fff" font-weight="normal" text-anchor="start" >60 min</text>
<path d="M1088.5 542.5 V777.5 H822.5 M1088.5 542.5 h-3 M1088.5 582.5 h-3 M1088.5 621.5 h-3 M1088.5 660.5 h-3 M1088.5 699.5 h-3 M1088.5 738.5 h-3 M822.5 777.5 v-3 M866.5 777.5 v-3 M911.5 777.5 v-3 M955.5 777.5 v-3 M999.5 777.5 v-3 M1044.5 777.5 v-3 M1088.5 777.5 v-3" fill="none" stroke="#d4d4d4" stroke-width="1" shape-rendering="crispEdges"/>
<path d="M927.5 777.5 l1.7 -7.5 h2.8 l1.7 7.5" fill="none" stroke="#f0f0f0" stroke-width="1"/>
<path d="M1048 777.5 l1.7 -7.5 h2.8 l1.7 7.5" fill="none" stroke="#f0f0f0" stroke-width="1"/>
<text x="1092.5" y="546.8" font-family="'Liberation Sans','DejaVu Sans',sans-serif" font-size="11.8" fill="#cfcfcf" font-weight="normal" text-anchor="start" >30</text>
<text x="1092.5" y="624.9" font-family="'Liberation Sans','DejaVu Sans',sans-serif" font-size="11.8" fill="#cfcfcf" font-weight="normal" text-anchor="start" >20</text>
<text x="1092.5" y="703.7" font-family="'Liberation Sans','DejaVu Sans',sans-serif" font-size="11.8" fill="#cfcfcf" font-weight="normal" text-anchor="start" >10</text>
<text x="820.6" y="792.8" font-family="'Liberation Sans','DejaVu Sans',sans-serif" font-size="11.8" fill="#cfcfcf" font-weight="normal" text-anchor="start" >60</text>
<text x="864.3" y="792.8" font-family="'Liberation Sans','DejaVu Sans',sans-serif" font-size="11.8" fill="#cfcfcf" font-weight="normal" text-anchor="start" >50</text>
<text x="909" y="792.8" font-family="'Liberation Sans','DejaVu Sans',sans-serif" font-size="11.8" fill="#cfcfcf" font-weight="normal" text-anchor="start" >40</text>
<text x="953.2" y="792.8" font-family="'Liberation Sans','DejaVu Sans',sans-serif" font-size="11.8" fill="#cfcfcf" font-weight="normal" text-anchor="start" >30</text>
<text x="997.7" y="792.8" font-family="'Liberation Sans','DejaVu Sans',sans-serif" font-size="11.8" fill="#cfcfcf" font-weight="normal" text-anchor="start" >20</text>
<text x="1042.5" y="792.8" font-family="'Liberation Sans','DejaVu Sans',sans-serif" font-size="11.8" fill="#cfcfcf" font-weight="normal" text-anchor="start" >10</text>
<text x="1088" y="792.8" font-family="'Liberation Sans','DejaVu Sans',sans-serif" font-size="11.8" fill="#cfcfcf" font-weight="normal" text-anchor="start" >0</text>
<text x="1100.4" y="792.8" font-family="'Liberation Sans','DejaVu Sans',sans-serif" font-size="11.8" fill="#cfcfcf" font-weight="normal" text-anchor="start" >min</text>
</svg>
</body></html>
